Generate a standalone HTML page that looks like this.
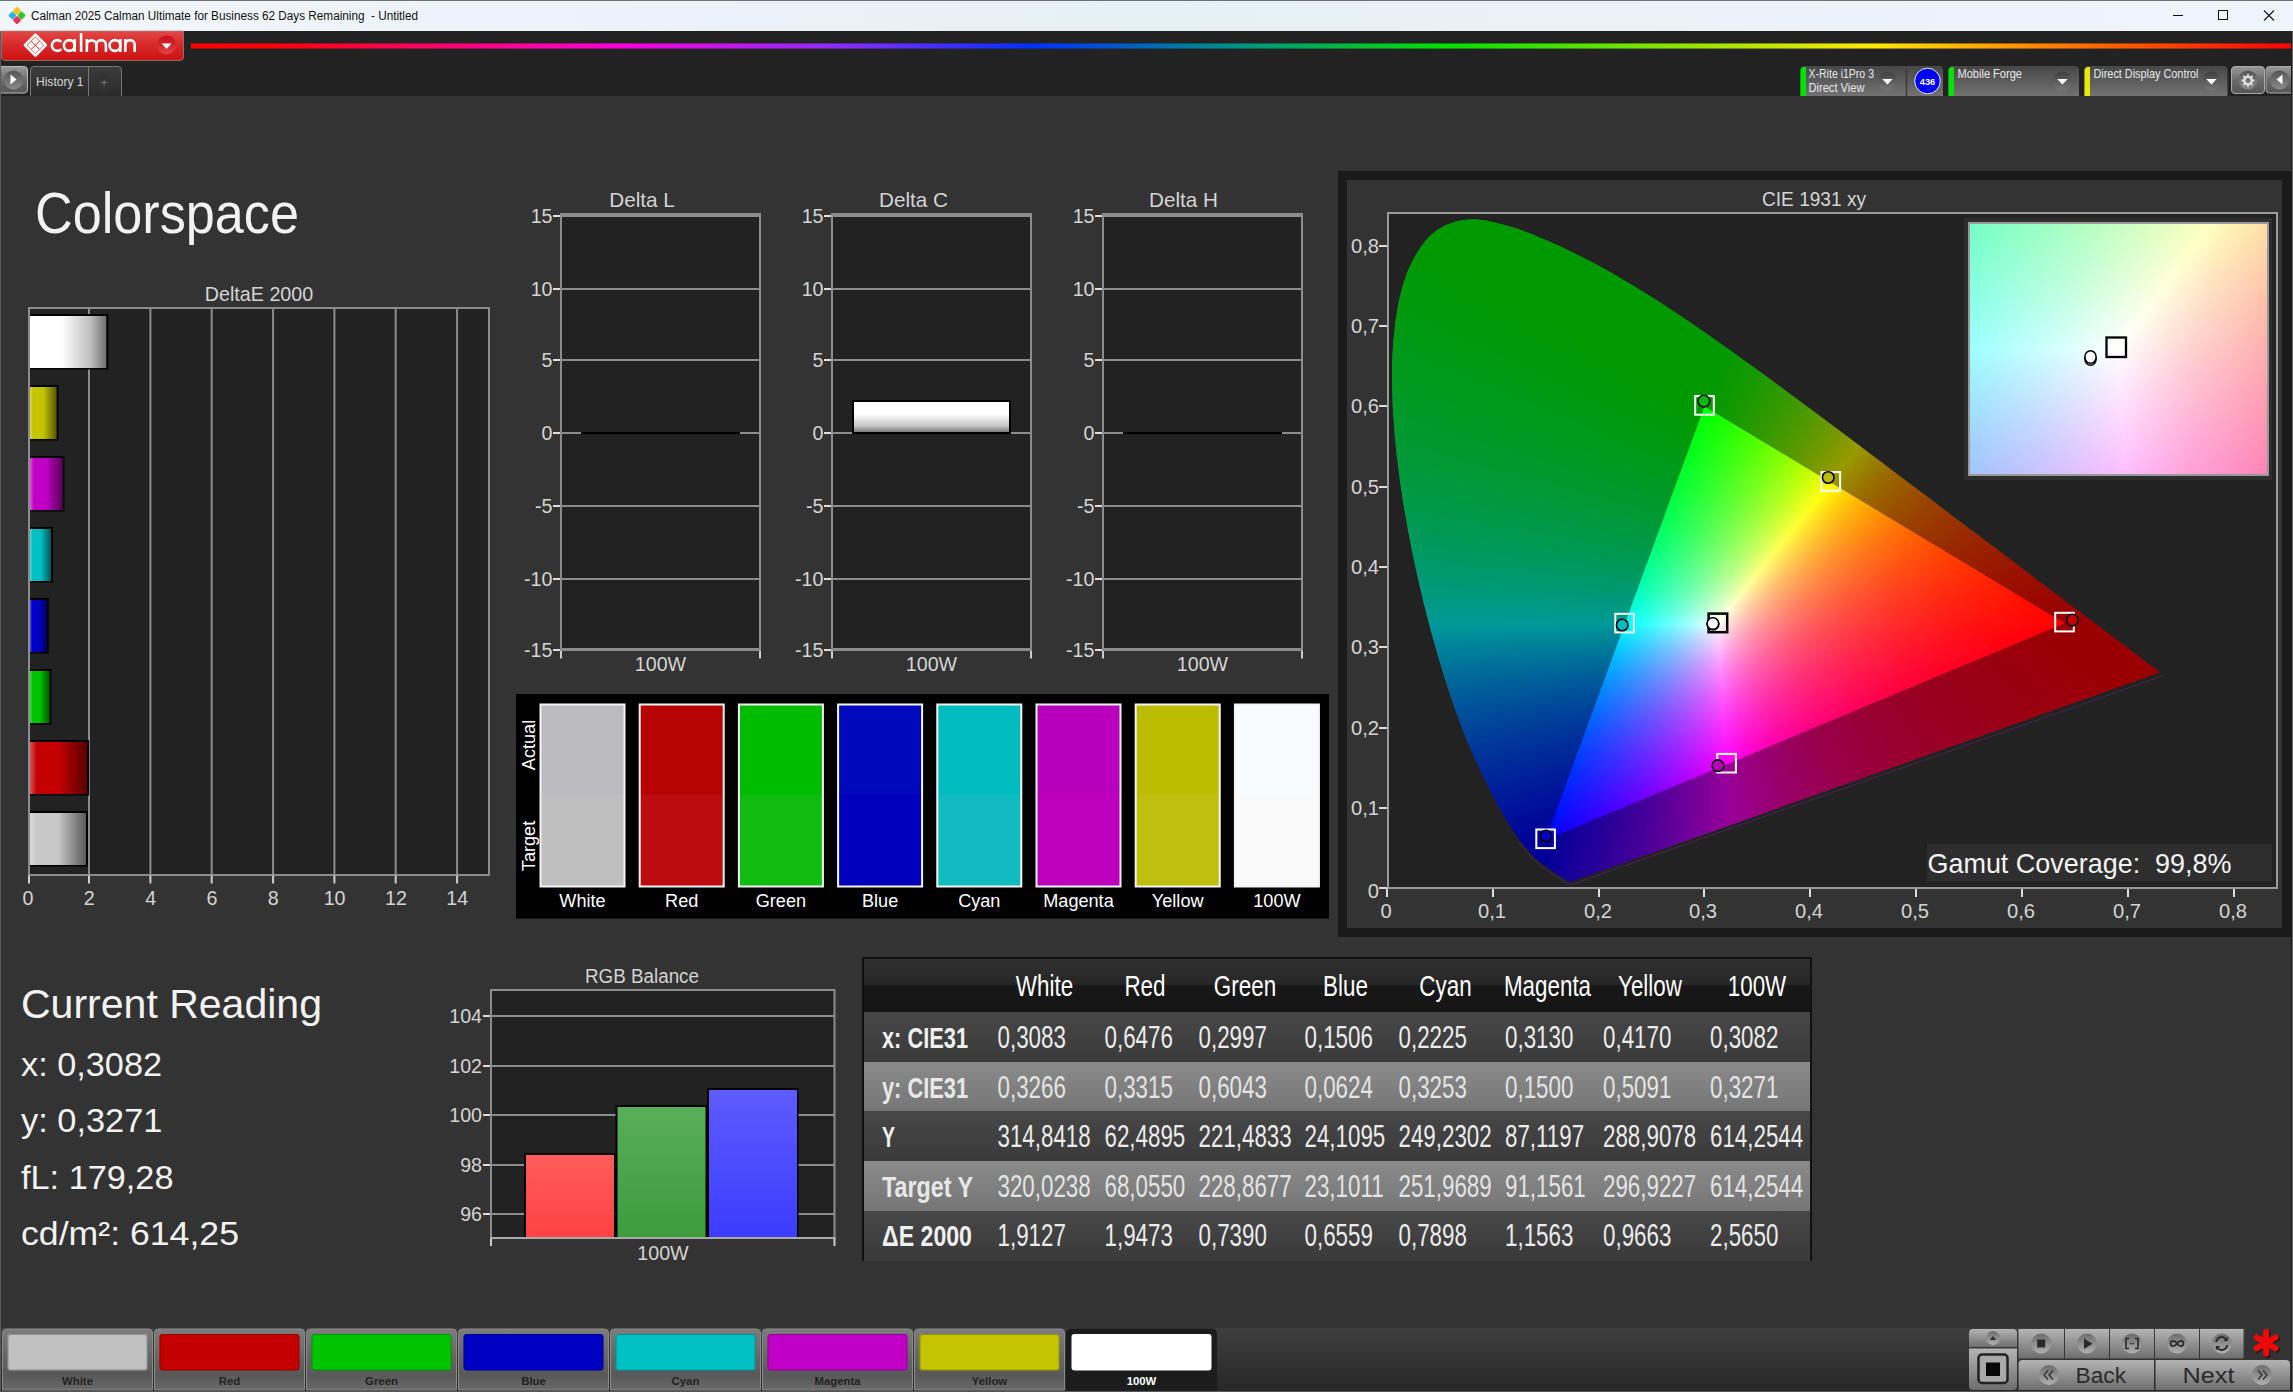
<!DOCTYPE html>
<html><head><meta charset="utf-8"><title>Calman</title><style>
html,body{margin:0;padding:0;background:#333}
body{width:2293px;height:1392px;overflow:hidden;position:relative;font-family:"Liberation Sans",sans-serif}
svg{position:absolute;left:0;top:0}
svg text{font-family:"Liberation Sans",sans-serif}
#cie i,#ins i{position:absolute;display:block;left:0;width:100%}
</style></head><body>
<svg width="2293" height="1392" viewBox="0 0 2293 1392">
<rect x="0" y="96" width="2293" height="1232" fill="#333"/>
<rect x="1338" y="171" width="955" height="766" fill="#1a1a1a"/>
<rect x="1347" y="180" width="935" height="748" fill="#333"/>
</svg>
<div id="cie" style="position:absolute;left:1389px;top:214px;width:887px;height:673px;overflow:hidden;background:#222"><i style="left:73px;top:4px;width:22px;height:2px;background:linear-gradient(90deg,#0f0 0px,#0f0 22px)"></i><i style="left:64px;top:6px;width:43px;height:2px;background:linear-gradient(90deg,#0f0 0px,#0f0 42px)"></i><i style="left:58px;top:8px;width:57px;height:2px;background:linear-gradient(90deg,#0f0 0px,#0f0 56px)"></i><i style="left:53px;top:10px;width:69px;height:2px;background:linear-gradient(90deg,#0f0 0px,#0f0 69px)"></i><i style="left:49px;top:12px;width:79px;height:2px;background:linear-gradient(90deg,#0f0 0px,#0f0 79px)"></i><i style="left:46px;top:14px;width:89px;height:2px;background:linear-gradient(90deg,#0f0 0px,#0f0 88px)"></i><i style="left:44px;top:16px;width:97px;height:2px;background:linear-gradient(90deg,#0f0 0px,#0f0 96px)"></i><i style="left:41px;top:18px;width:104px;height:2px;background:linear-gradient(90deg,#0f0 0px,#0f0 104px)"></i><i style="left:39px;top:20px;width:111px;height:2px;background:linear-gradient(90deg,#0f0 0px,#0f0 111px)"></i><i style="left:37px;top:22px;width:118px;height:2px;background:linear-gradient(90deg,#0f0 0px,#0f0 118px)"></i><i style="left:35px;top:24px;width:124px;height:2px;background:linear-gradient(90deg,#0f0 0px,#0f0 124px)"></i><i style="left:34px;top:26px;width:131px;height:2px;background:linear-gradient(90deg,#00ff01 0px,#0f0 130px)"></i><i style="left:32px;top:28px;width:137px;height:2px;background:linear-gradient(90deg,#00ff02 0px,#0f0 12px,#0f0 136px)"></i><i style="left:30px;top:30px;width:143px;height:2px;background:linear-gradient(90deg,#00ff03 0px,#0f0 17px,#0f0 142px)"></i><i style="left:29px;top:32px;width:149px;height:2px;background:linear-gradient(90deg,#00ff03 0px,#0f0 22px,#0f0 148px)"></i><i style="left:28px;top:34px;width:154px;height:2px;background:linear-gradient(90deg,#00ff04 0px,#0f0 26px,#0f0 153px)"></i><i style="left:27px;top:36px;width:159px;height:2px;background:linear-gradient(90deg,#00ff05 0px,#0f0 31px,#0f0 159px)"></i><i style="left:25px;top:38px;width:165px;height:2px;background:linear-gradient(90deg,#00ff06 0px,#0f0 35px,#0f0 164px)"></i><i style="left:24px;top:40px;width:170px;height:2px;background:linear-gradient(90deg,#00ff07 0px,#0f0 40px,#0f0 169px)"></i><i style="left:23px;top:42px;width:175px;height:2px;background:linear-gradient(90deg,#00ff07 0px,#0f0 44px,#0f0 174px)"></i><i style="left:22px;top:44px;width:180px;height:2px;background:linear-gradient(90deg,#00ff08 0px,#0f0 49px,#0f0 179px)"></i><i style="left:21px;top:46px;width:185px;height:2px;background:linear-gradient(90deg,#00ff09 0px,#0f0 53px,#0f0 184px)"></i><i style="left:20px;top:48px;width:189px;height:2px;background:linear-gradient(90deg,#00ff09 0px,#0f0 57px,#0f0 189px)"></i><i style="left:19px;top:50px;width:194px;height:2px;background:linear-gradient(90deg,#00ff0a 0px,#0f0 61px,#0f0 193px)"></i><i style="left:18px;top:52px;width:199px;height:2px;background:linear-gradient(90deg,#00ff0b 0px,#0f0 66px,#0f0 198px)"></i><i style="left:17px;top:54px;width:203px;height:2px;background:linear-gradient(90deg,#00ff0c 0px,#0f0 70px,#0f0 203px)"></i><i style="left:16px;top:56px;width:208px;height:2px;background:linear-gradient(90deg,#00ff0c 0px,#0f0 74px,#0f0 207px)"></i><i style="left:16px;top:58px;width:212px;height:2px;background:linear-gradient(90deg,#00ff0d 0px,#0f0 78px,#0f0 211px)"></i><i style="left:15px;top:60px;width:216px;height:2px;background:linear-gradient(90deg,#00ff0e 0px,#0f0 82px,#0f0 215px)"></i><i style="left:14px;top:62px;width:220px;height:2px;background:linear-gradient(90deg,#00ff0f 0px,#0f0 86px,#0f0 220px)"></i><i style="left:14px;top:64px;width:224px;height:2px;background:linear-gradient(90deg,#00ff0f 0px,#0f0 90px,#0f0 224px)"></i><i style="left:13px;top:66px;width:228px;height:2px;background:linear-gradient(90deg,#00ff10 0px,#0f0 94px,#0f0 228px)"></i><i style="left:12px;top:68px;width:232px;height:2px;background:linear-gradient(90deg,#0f1 0px,#0f0 98px,#0f0 232px)"></i><i style="left:12px;top:70px;width:236px;height:2px;background:linear-gradient(90deg,#0f1 0px,#0f0 102px,#0f0 236px)"></i><i style="left:11px;top:72px;width:240px;height:2px;background:linear-gradient(90deg,#00ff12 0px,#0f0 106px,#0f0 240px)"></i><i style="left:11px;top:74px;width:244px;height:2px;background:linear-gradient(90deg,#00ff13 0px,#0f0 110px,#0f0 243px)"></i><i style="left:10px;top:76px;width:247px;height:2px;background:linear-gradient(90deg,#00ff14 0px,#0f0 113px,#0f0 247px)"></i><i style="left:10px;top:78px;width:251px;height:2px;background:linear-gradient(90deg,#00ff14 0px,#0f0 117px,#0f0 251px)"></i><i style="left:9px;top:80px;width:255px;height:2px;background:linear-gradient(90deg,#00ff15 0px,#0f0 121px,#0f0 254px)"></i><i style="left:9px;top:82px;width:258px;height:2px;background:linear-gradient(90deg,#00ff16 0px,#0f0 125px,#0f0 258px)"></i><i style="left:8px;top:84px;width:262px;height:2px;background:linear-gradient(90deg,#00ff17 0px,#0f0 129px,#0f0 262px)"></i><i style="left:8px;top:86px;width:266px;height:2px;background:linear-gradient(90deg,#00ff17 0px,#0f0 132px,#0f0 265px)"></i><i style="left:7px;top:88px;width:269px;height:2px;background:linear-gradient(90deg,#00ff18 0px,#0f0 136px,#0f0 269px)"></i><i style="left:7px;top:90px;width:273px;height:2px;background:linear-gradient(90deg,#00ff19 0px,#0f0 140px,#0f0 272px)"></i><i style="left:7px;top:92px;width:276px;height:2px;background:linear-gradient(90deg,#00ff19 0px,#0f0 143px,#0f0 276px)"></i><i style="left:6px;top:94px;width:279px;height:2px;background:linear-gradient(90deg,#00ff1a 0px,#0f0 147px,#0f0 279px)"></i><i style="left:6px;top:96px;width:283px;height:2px;background:linear-gradient(90deg,#00ff1b 0px,#0f0 151px,#0f0 282px)"></i><i style="left:6px;top:98px;width:286px;height:2px;background:linear-gradient(90deg,#00ff1c 0px,#0f0 154px,#0f0 286px)"></i><i style="left:5px;top:100px;width:289px;height:2px;background:linear-gradient(90deg,#00ff1c 0px,#0f0 158px,#0f0 289px)"></i><i style="left:5px;top:102px;width:293px;height:2px;background:linear-gradient(90deg,#00ff1d 0px,#0f0 162px,#0f0 292px)"></i><i style="left:5px;top:104px;width:296px;height:2px;background:linear-gradient(90deg,#00ff1e 0px,#0f0 165px,#0f0 295px)"></i><i style="left:4px;top:106px;width:299px;height:2px;background:linear-gradient(90deg,#00ff1f 0px,#0f0 169px,#0f0 299px)"></i><i style="left:4px;top:108px;width:302px;height:2px;background:linear-gradient(90deg,#00ff1f 0px,#0f0 173px,#0f0 302px)"></i><i style="left:4px;top:110px;width:305px;height:2px;background:linear-gradient(90deg,#00ff20 0px,#0f0 176px,#0f0 305px)"></i><i style="left:4px;top:112px;width:309px;height:2px;background:linear-gradient(90deg,#00ff21 0px,#0f0 180px,#0f0 308px)"></i><i style="left:4px;top:114px;width:312px;height:2px;background:linear-gradient(90deg,#0f2 0px,#0f0 183px,#0f0 311px)"></i><i style="left:3px;top:116px;width:315px;height:2px;background:linear-gradient(90deg,#0f2 0px,#0f0 187px,#0f0 314px)"></i><i style="left:3px;top:118px;width:318px;height:2px;background:linear-gradient(90deg,#00ff23 0px,#0f0 190px,#0f0 317px)"></i><i style="left:3px;top:120px;width:321px;height:2px;background:linear-gradient(90deg,#00ff24 0px,#0f0 194px,#0f0 320px)"></i><i style="left:3px;top:122px;width:324px;height:2px;background:linear-gradient(90deg,#00ff25 0px,#0f0 197px,#0f0 324px)"></i><i style="left:2px;top:124px;width:327px;height:2px;background:linear-gradient(90deg,#00ff25 0px,#0f0 201px,#0f0 327px)"></i><i style="left:2px;top:126px;width:330px;height:2px;background:linear-gradient(90deg,#00ff26 0px,#0f0 204px,#0f0 330px)"></i><i style="left:2px;top:128px;width:333px;height:2px;background:linear-gradient(90deg,#00ff27 0px,#00ff14 108px,#0f0 208px,#0f0 333px)"></i><i style="left:2px;top:130px;width:336px;height:2px;background:linear-gradient(90deg,#00ff28 0px,#00ff15 110px,#0f0 211px,#0f0 336px)"></i><i style="left:2px;top:132px;width:339px;height:2px;background:linear-gradient(90deg,#00ff29 0px,#00ff15 111px,#0f0 215px,#0f0 335px,#03ff00 338px)"></i><i style="left:2px;top:134px;width:342px;height:2px;background:linear-gradient(90deg,#00ff29 0px,#00ff16 114px,#0f0 218px,#0f0 334px,#06ff00 341px)"></i><i style="left:2px;top:136px;width:345px;height:2px;background:linear-gradient(90deg,#00ff2a 0px,#00ff16 116px,#0f0 221px,#0f0 334px,#0aff00 344px)"></i><i style="left:2px;top:138px;width:348px;height:2px;background:linear-gradient(90deg,#00ff2b 0px,#00ff16 118px,#0f0 225px,#0f0 333px,#0dff00 347px)"></i><i style="left:1px;top:140px;width:351px;height:2px;background:linear-gradient(90deg,#00ff2c 0px,#00ff17 119px,#0f0 228px,#0f0 332px,#1f0 350px)"></i><i style="left:1px;top:142px;width:353px;height:2px;background:linear-gradient(90deg,#00ff2d 0px,#00ff18 121px,#0f0 232px,#0f0 332px,#14ff00 353px)"></i><i style="left:1px;top:144px;width:356px;height:2px;background:linear-gradient(90deg,#00ff2d 0px,#00ff18 123px,#0f0 235px,#0f0 331px,#18ff00 356px)"></i><i style="left:1px;top:146px;width:359px;height:2px;background:linear-gradient(90deg,#00ff2e 0px,#00ff18 125px,#0f0 239px,#0f0 331px,#1cff00 359px)"></i><i style="left:1px;top:148px;width:362px;height:2px;background:linear-gradient(90deg,#00ff2f 0px,#00ff19 127px,#0f0 242px,#0f0 330px,#20ff00 362px)"></i><i style="left:1px;top:150px;width:365px;height:2px;background:linear-gradient(90deg,#00ff30 0px,#00ff19 129px,#0f0 245px,#0f0 329px,#23ff00 364px)"></i><i style="left:1px;top:152px;width:368px;height:2px;background:linear-gradient(90deg,#00ff31 0px,#00ff1a 130px,#0f0 249px,#0f0 328px,#27ff00 367px)"></i><i style="left:1px;top:154px;width:370px;height:2px;background:linear-gradient(90deg,#00ff32 0px,#00ff1a 133px,#0f0 252px,#0f0 328px,#2bff00 370px)"></i><i style="left:1px;top:156px;width:373px;height:2px;background:linear-gradient(90deg,#00ff32 0px,#00ff1b 135px,#0f0 255px,#0f0 327px,#30ff00 373px)"></i><i style="left:1px;top:158px;width:376px;height:2px;background:linear-gradient(90deg,#0f3 0px,#00ff1b 136px,#0f0 259px,#0f0 326px,#3f0 375px)"></i><i style="left:1px;top:160px;width:379px;height:2px;background:linear-gradient(90deg,#00ff34 0px,#00ff1c 139px,#0f0 262px,#0f0 326px,#37ff00 378px)"></i><i style="left:1px;top:162px;width:381px;height:2px;background:linear-gradient(90deg,#00ff35 0px,#00ff1c 140px,#0f0 265px,#0f0 325px,#3cff00 381px)"></i><i style="left:1px;top:164px;width:384px;height:2px;background:linear-gradient(90deg,#00ff36 0px,#00ff1d 142px,#0f0 269px,#0f0 324px,#40ff00 384px)"></i><i style="left:1px;top:166px;width:387px;height:2px;background:linear-gradient(90deg,#00ff37 0px,#00ff1d 144px,#0f0 272px,#0f0 323px,#1bff00 350px,#4f0 386px)"></i><i style="left:1px;top:168px;width:390px;height:2px;background:linear-gradient(90deg,#00ff38 0px,#00ff1e 146px,#0f0 275px,#0f0 323px,#48ff00 389px)"></i><i style="left:1px;top:170px;width:392px;height:2px;background:linear-gradient(90deg,#00ff39 0px,#00ff1e 148px,#0f0 279px,#0f0 322px,#24ff00 356px,#4dff00 392px)"></i><i style="left:1px;top:172px;width:395px;height:2px;background:linear-gradient(90deg,#00ff39 0px,#00ff1f 150px,#0f0 282px,#0f0 321px,#25ff00 356px,#52ff00 395px)"></i><i style="left:1px;top:174px;width:398px;height:2px;background:linear-gradient(90deg,#00ff3a 0px,#00ff1f 152px,#0f0 285px,#0f0 320px,#25ff00 355px,#56ff00 397px)"></i><i style="left:1px;top:176px;width:400px;height:2px;background:linear-gradient(90deg,#00ff3b 0px,#00ff20 154px,#0f0 288px,#0f0 320px,#2dff00 361px,#5bff00 400px)"></i><i style="left:1px;top:178px;width:403px;height:2px;background:linear-gradient(90deg,#00ff3c 0px,#00ff20 155px,#0f0 292px,#0f0 319px,#2eff00 361px,#5fff00 402px)"></i><i style="left:1px;top:180px;width:406px;height:2px;background:linear-gradient(90deg,#00ff3d 0px,#00ff21 158px,#0f0 295px,#0f0 318px,#2fff00 361px,#64ff00 405px)"></i><i style="left:1px;top:182px;width:408px;height:2px;background:linear-gradient(90deg,#00ff3e 0px,#00ff21 159px,#0f0 298px,#0f0 317px,#30ff00 361px,#6aff00 408px)"></i><i style="left:1px;top:184px;width:411px;height:2px;background:linear-gradient(90deg,#00ff3f 0px,#00ff27 137px,#0f0 301px,#0f0 316px,#31ff00 361px,#6eff00 410px)"></i><i style="left:2px;top:186px;width:413px;height:2px;background:linear-gradient(90deg,#00ff40 0px,#00ff26 144px,#0f0 304px,#0f0 316px,#38ff00 366px,#73ff00 413px)"></i><i style="left:2px;top:188px;width:416px;height:2px;background:linear-gradient(90deg,#00ff41 0px,#00ff25 154px,#0f0 308px,#0f0 315px,#3bff00 367px,#79ff00 416px)"></i><i style="left:2px;top:190px;width:419px;height:2px;background:linear-gradient(90deg,#00ff42 0px,#00ff24 163px,#0f0 314px,#3bff00 366px,#7eff00 418px)"></i><i style="left:2px;top:192px;width:421px;height:2px;background:linear-gradient(90deg,#00ff43 0px,#00ff24 168px,#0f0 313px,#3dff00 367px,#84ff00 421px)"></i><i style="left:2px;top:194px;width:424px;height:2px;background:linear-gradient(90deg,#0f4 0px,#00ff25 168px,#00ff01 313px,#42ff00 370px,#8f0 423px)"></i><i style="left:2px;top:196px;width:426px;height:2px;background:linear-gradient(90deg,#00ff45 0px,#00ff26 168px,#00ff03 312px,#0aff00 321px,#45ff00 371px,#8fff00 426px)"></i><i style="left:2px;top:198px;width:429px;height:2px;background:linear-gradient(90deg,#00ff46 0px,#00ff27 167px,#00ff04 311px,#0eff00 324px,#48ff00 372px,#93ff00 428px)"></i><i style="left:2px;top:200px;width:432px;height:2px;background:linear-gradient(90deg,#00ff47 0px,#00ff28 167px,#00ff05 310px,#14ff00 328px,#4aff00 373px,#9aff00 431px)"></i><i style="left:2px;top:202px;width:434px;height:2px;background:linear-gradient(90deg,#00ff48 0px,#00ff2a 166px,#00ff06 309px,#19ff00 331px,#4cff00 373px,#75ff00 404px,#a1ff00 434px)"></i><i style="left:3px;top:204px;width:437px;height:2px;background:linear-gradient(90deg,#00ff49 0px,#00ff2b 166px,#00ff08 308px,#1dff00 334px,#4fff00 374px,#7aff00 406px,#a6ff00 436px)"></i><i style="left:3px;top:206px;width:439px;height:2px;background:linear-gradient(90deg,#00ff4a 0px,#00ff2c 165px,#00ff09 307px,#2f0 337px,#51ff00 375px,#7fff00 408px,#adff00 439px)"></i><i style="left:3px;top:208px;width:442px;height:2px;background:linear-gradient(90deg,#00ff4b 0px,#00ff2d 165px,#00ff0a 306px,#27ff00 340px,#53ff00 375px,#82ff00 409px,#b2ff00 441px)"></i><i style="left:3px;top:210px;width:444px;height:2px;background:linear-gradient(90deg,#00ff4c 0px,#00ff2e 165px,#00ff0b 306px,#2cff00 343px,#59ff00 378px,#8f0 412px,#b9ff00 444px)"></i><i style="left:3px;top:212px;width:447px;height:2px;background:linear-gradient(90deg,#00ff4d 0px,#00ff2f 164px,#00ff0d 305px,#31ff00 346px,#5cff00 379px,#8cff00 413px,#bfff00 446px)"></i><i style="left:3px;top:214px;width:449px;height:2px;background:linear-gradient(90deg,#00ff4e 0px,#00ff30 164px,#00ff0e 304px,#37ff00 350px,#5fff00 380px,#91ff00 415px,#c7ff00 449px)"></i><i style="left:3px;top:216px;width:452px;height:2px;background:linear-gradient(90deg,#00ff4f 0px,#00ff31 163px,#00ff0f 303px,#3cff00 353px,#60ff00 380px,#95ff00 416px,#cdff00 451px)"></i><i style="left:4px;top:218px;width:454px;height:2px;background:linear-gradient(90deg,#00ff50 0px,#0f3 163px,#0f1 302px,#42ff00 356px,#64ff00 381px,#9aff00 418px,#d5ff00 454px)"></i><i style="left:4px;top:220px;width:457px;height:2px;background:linear-gradient(90deg,#00ff51 0px,#00ff34 162px,#00ff12 301px,#47ff00 359px,#67ff00 382px,#9fff00 420px,#dbff00 456px)"></i><i style="left:4px;top:222px;width:459px;height:2px;background:linear-gradient(90deg,#00ff52 0px,#00ff35 162px,#00ff13 300px,#22ff0b 329px,#4dff00 362px,#6aff00 383px,#a5ff00 422px,#e3ff00 459px)"></i><i style="left:4px;top:224px;width:462px;height:2px;background:linear-gradient(90deg,#00ff53 0px,#00ff36 161px,#00ff15 299px,#25ff0b 330px,#53ff00 365px,#6eff00 384px,#abff00 424px,#eaff00 461px)"></i><i style="left:4px;top:226px;width:464px;height:2px;background:linear-gradient(90deg,#00ff54 0px,#00ff37 161px,#00ff16 298px,#27ff0c 331px,#59ff00 368px,#71ff00 385px,#b0ff00 426px,#f3ff00 464px)"></i><i style="left:4px;top:228px;width:467px;height:2px;background:linear-gradient(90deg,#0f5 0px,#00ff39 161px,#00ff17 298px,#2eff0c 335px,#5fff00 371px,#76ff00 387px,#b6ff00 428px,#faff00 466px)"></i><i style="left:5px;top:230px;width:469px;height:2px;background:linear-gradient(90deg,#00ff56 0px,#00ff3a 160px,#00ff19 297px,#37ff0b 341px,#65ff00 374px,#72ff00 383px,#b6ff00 426px,#ff0 467px,#fffb00 469px)"></i><i style="left:5px;top:232px;width:472px;height:2px;background:linear-gradient(90deg,#00ff57 0px,#00ff3b 160px,#00ff1a 296px,#35ff0d 338px,#6dff00 378px,#b3ff00 423px,#feff00 465px,#fff400 471px)"></i><i style="left:5px;top:234px;width:474px;height:2px;background:linear-gradient(90deg,#00ff59 0px,#00ff3c 159px,#00ff1b 295px,#3aff0e 341px,#78ff00 384px,#b9ff00 425px,#feff00 463px,#ffec00 474px)"></i><i style="left:5px;top:236px;width:477px;height:2px;background:linear-gradient(90deg,#00ff5a 0px,#00ff3e 159px,#00ff1d 294px,#39ff0f 339px,#77ff01 382px,#b9ff00 423px,#feff00 461px,#ffe600 476px)"></i><i style="left:5px;top:238px;width:479px;height:2px;background:linear-gradient(90deg,#00ff5b 0px,#00ff3f 158px,#00ff1e 293px,#39ff11 338px,#77ff02 381px,#82ff00 388px,#b8ff00 421px,#ff0 460px,#ffde00 479px)"></i><i style="left:6px;top:240px;width:482px;height:2px;background:linear-gradient(90deg,#00ff5c 0px,#00ff40 158px,#00ff20 292px,#3aff12 337px,#78ff04 380px,#89ff00 391px,#b9ff00 420px,#ff0 458px,#ffd800 481px)"></i><i style="left:6px;top:242px;width:484px;height:2px;background:linear-gradient(90deg,#00ff5d 0px,#00ff42 157px,#00ff21 291px,#39ff14 335px,#77ff06 378px,#90ff00 394px,#c6ff00 426px,#feff00 456px,#ffd200 483px)"></i><i style="left:6px;top:244px;width:486px;height:2px;background:linear-gradient(90deg,#00ff5e 0px,#00ff43 157px,#00ff23 290px,#39ff16 334px,#78ff07 377px,#97ff00 397px,#c9ff00 426px,#feff00 454px,#ffe100 471px,#ffcb00 486px)"></i><i style="left:6px;top:246px;width:489px;height:2px;background:linear-gradient(90deg,#00ff5f 0px,#0f4 156px,#00ff24 289px,#39ff17 333px,#77ff09 375px,#9fff00 400px,#ceff00 427px,#feff00 452px,#ffde00 471px,#ffc500 488px)"></i><i style="left:7px;top:248px;width:491px;height:2px;background:linear-gradient(90deg,#00ff61 0px,#00ff46 155px,#00ff26 288px,#39ff19 332px,#77ff0b 374px,#a7ff00 403px,#d1ff00 427px,#fdff00 450px,#ffda00 472px,#ffbf00 491px)"></i><i style="left:7px;top:250px;width:494px;height:2px;background:linear-gradient(90deg,#00ff62 0px,#00ff47 155px,#00ff27 287px,#38ff1b 330px,#76ff0d 372px,#afff00 406px,#ff0 449px,#ffda00 470px,#ffba00 493px)"></i><i style="left:7px;top:252px;width:496px;height:2px;background:linear-gradient(90deg,#00ff63 0px,#00ff48 154px,#00ff29 286px,#39ff1c 329px,#77ff0e 371px,#b7ff00 409px,#ff0 447px,#ffd700 470px,#ffb400 496px)"></i><i style="left:7px;top:254px;width:498px;height:2px;background:linear-gradient(90deg,#00ff64 0px,#00ff4a 154px,#00ff2b 285px,#39ff1e 328px,#76ff10 369px,#bfff00 412px,#feff00 445px,#ffd400 470px,#ffaf00 498px)"></i><i style="left:8px;top:256px;width:501px;height:2px;background:linear-gradient(90deg,#0f6 0px,#00ff4b 153px,#00ff2c 284px,#38ff20 326px,#77ff12 368px,#c8ff00 415px,#feff00 443px,#ffd100 470px,#fa0 500px)"></i><i style="left:8px;top:258px;width:503px;height:2px;background:linear-gradient(90deg,#00ff67 0px,#00ff4d 153px,#00ff2e 283px,#38ff21 325px,#76ff14 366px,#a3ff0a 393px,#d1ff00 418px,#fffe00 442px,#ffe600 455px,#ffce00 470px,#ffb800 486px,#ffa400 503px)"></i><i style="left:8px;top:260px;width:506px;height:2px;background:linear-gradient(90deg,#00ff68 0px,#00ff4e 152px,#00ff2f 282px,#38ff23 324px,#77ff16 365px,#a8ff0b 394px,#daff00 421px,#fffe00 440px,#ffe400 454px,#ffcb00 470px,#ffb400 487px,#ffa000 505px)"></i><i style="left:8px;top:262px;width:508px;height:2px;background:linear-gradient(90deg,#00ff69 0px,#00ff4f 152px,#00ff31 281px,#37ff25 322px,#76ff18 363px,#abff0c 394px,#e3ff00 424px,#ff0 438px,#ffe200 453px,#ffc800 470px,#ffb000 488px,#ff9b00 508px)"></i><i style="left:9px;top:264px;width:510px;height:2px;background:linear-gradient(90deg,#00ff6b 0px,#00ff51 151px,#0f3 280px,#38ff27 321px,#77ff19 362px,#b8ff0b 400px,#ecff00 427px,#ff0 436px,#ffe100 452px,#ffc600 469px,#ffae00 488px,#ff9700 510px)"></i><i style="left:9px;top:266px;width:513px;height:2px;background:linear-gradient(90deg,#00ff6c 0px,#00ff52 151px,#00ff35 279px,#38ff29 320px,#77ff1b 361px,#baff0d 399px,#ff0 434px,#ffdf00 451px,#ffc400 469px,#fa0 489px,#ff9300 512px)"></i><i style="left:9px;top:268px;width:515px;height:2px;background:linear-gradient(90deg,#00ff6d 0px,#00ff54 150px,#00ff36 278px,#38ff2a 319px,#76ff1d 359px,#b9ff0f 397px,#feff01 432px,#ffdc00 451px,#ffbf00 470px,#ffa600 491px,#ff8e00 515px)"></i><i style="left:9px;top:270px;width:517px;height:2px;background:linear-gradient(90deg,#00ff6f 0px,#0f5 150px,#00ff38 277px,#39ff2c 318px,#77ff1f 358px,#b9ff11 395px,#feff03 430px,#fff200 437px,#ffda00 450px,#ffbe00 469px,#ffa200 492px,#ff8a00 517px)"></i><i style="left:10px;top:272px;width:520px;height:2px;background:linear-gradient(90deg,#00ff70 0px,#00ff57 149px,#00ff3a 276px,#38ff2e 316px,#75ff22 355px,#b4ff14 391px,#fffe05 429px,#ffea00 439px,#ffda00 448px,#fb0 469px,#ff9f00 493px,#ff8600 519px)"></i><i style="left:10px;top:274px;width:522px;height:2px;background:linear-gradient(90deg,#00ff71 0px,#00ff59 149px,#00ff3b 275px,#38ff30 315px,#76ff23 354px,#b6ff16 390px,#fffe07 427px,#ffdf00 443px,#ffb800 469px,#ff9b00 494px,#ff8200 522px)"></i><i style="left:10px;top:276px;width:525px;height:2px;background:linear-gradient(90deg,#00ff73 0px,#00ff5a 148px,#00ff3d 274px,#38ff32 314px,#76ff25 353px,#b7ff18 389px,#fffe09 425px,#ffd900 445px,#ffb700 468px,#f90 494px,#ff7e00 524px)"></i><i style="left:11px;top:278px;width:527px;height:2px;background:linear-gradient(90deg,#00ff74 0px,#00ff5c 148px,#00ff3f 273px,#39ff34 313px,#77ff27 352px,#b8ff1a 388px,#ffff0c 423px,#ffe706 435px,#ffd000 448px,#ffb400 468px,#ff9600 495px,#ff7b00 526px)"></i><i style="left:11px;top:280px;width:529px;height:2px;background:linear-gradient(90deg,#00ff75 0px,#00ff5d 147px,#00ff41 272px,#3bff35 313px,#78ff29 351px,#baff1c 387px,#ffff0e 421px,#ffd503 443px,#ffc700 452px,#ffb100 468px,#ff9200 496px,#f70 529px)"></i><i style="left:11px;top:282px;width:532px;height:2px;background:linear-gradient(90deg,#0f7 0px,#00ff5f 147px,#00ff43 271px,#3aff37 311px,#77ff2b 349px,#b9ff1e 385px,#ffff10 419px,#ffd505 441px,#ffc000 455px,#ffb000 467px,#ff8f00 497px,#ff7300 531px)"></i><i style="left:12px;top:284px;width:534px;height:2px;background:linear-gradient(90deg,#00ff78 0px,#00ff61 146px,#00ff45 270px,#3aff39 310px,#78ff2d 348px,#baff20 384px,#ffff13 417px,#ffd307 440px,#ffba00 457px,#ffad00 467px,#ff8c00 498px,#ff7000 533px)"></i><i style="left:12px;top:286px;width:536px;height:2px;background:linear-gradient(90deg,#00ff7a 0px,#00ff62 146px,#00ff46 269px,#3aff3b 309px,#77ff2f 346px,#baff23 382px,#ffff15 415px,#ffd209 439px,#ffb300 460px,#fa0 467px,#ff8900 499px,#ff6c00 536px)"></i><i style="left:12px;top:288px;width:539px;height:2px;background:linear-gradient(90deg,#00ff7b 0px,#00ff64 145px,#00ff48 268px,#3bff3d 308px,#78ff31 345px,#b9ff25 380px,#feff18 413px,#ffd00a 438px,#ffa900 466px,#ff8700 499px,#ff6900 538px)"></i><i style="left:13px;top:290px;width:541px;height:2px;background:linear-gradient(90deg,#00ff7d 0px,#00ff65 145px,#00ff4a 267px,#3aff3f 306px,#77ff34 343px,#b9ff27 378px,#feff1a 411px,#ffe312 425px,#ffce0c 437px,#ffa600 466px,#ff8400 500px,#f60 540px)"></i><i style="left:13px;top:292px;width:543px;height:2px;background:linear-gradient(90deg,#00ff7e 0px,#00ff67 144px,#00ff4c 266px,#3aff41 305px,#76ff36 341px,#b4ff2b 374px,#fffe1c 410px,#ffe515 422px,#ffcd0e 436px,#ffb807 450px,#ffa401 466px,#ff8100 501px,#ff6300 543px)"></i><i style="left:13px;top:294px;width:546px;height:2px;background:linear-gradient(90deg,#00ff80 0px,#00ff69 143px,#00ff4e 265px,#3bff43 304px,#77ff38 340px,#b5ff2d 373px,#fffe1f 408px,#ffe517 420px,#ffcc10 434px,#ffb609 449px,#ffa203 465px,#f90 473px,#ff7e00 502px,#ff6000 545px)"></i><i style="left:14px;top:296px;width:548px;height:2px;background:linear-gradient(90deg,#00ff81 0px,#00ff6b 142px,#00ff50 263px,#35ff47 299px,#75ff3b 337px,#b5ff2f 371px,#fffe21 406px,#ffe319 419px,#ffcb11 433px,#ffb40a 448px,#ffa104 464px,#ff9400 476px,#ff7c00 502px,#ff5d00 547px)"></i><i style="left:14px;top:298px;width:550px;height:2px;background:linear-gradient(90deg,#00ff83 0px,#00ff6d 142px,#00ff52 262px,#34ff49 297px,#74ff3d 335px,#b4ff32 369px,#fffe24 404px,#ffe31b 417px,#ffca13 431px,#ffb30c 447px,#ff9e05 464px,#ff8e00 479px,#ff7900 503px,#ff5a00 550px)"></i><i style="left:14px;top:300px;width:552px;height:2px;background:linear-gradient(90deg,#00ff84 0px,#00ff6e 141px,#00ff54 261px,#36ff4b 297px,#75ff40 334px,#b8ff34 369px,#fdff27 401px,#ffdf1c 417px,#ffc714 431px,#ffb00d 447px,#ff9b06 464px,#ff8900 482px,#ff7600 504px,#ff5700 552px)"></i><i style="left:15px;top:302px;width:555px;height:2px;background:linear-gradient(90deg,#00ff86 0px,#00ff70 141px,#00ff57 260px,#36ff4d 296px,#76ff42 333px,#b7ff36 367px,#fdff2a 399px,#fffe29 400px,#ffdd1e 416px,#ffc716 429px,#ffb00f 445px,#ff9a07 463px,#ff8500 484px,#ff7400 504px,#f50 554px)"></i><i style="left:15px;top:304px;width:557px;height:2px;background:linear-gradient(90deg,#00ff87 0px,#00ff72 140px,#00ff59 259px,#37ff4f 295px,#7f4 332px,#b7ff39 365px,#fdff2d 397px,#ffff2c 398px,#ffdd20 414px,#ffc518 428px,#ffad10 445px,#ff9708 463px,#ff8000 487px,#ff7100 506px,#ff5200 557px)"></i><i style="left:15px;top:306px;width:559px;height:2px;background:linear-gradient(90deg,#00ff89 0px,#00ff74 140px,#00ff5b 258px,#37ff51 294px,#76ff47 330px,#b6ff3b 363px,#fdff2f 395px,#ffff2f 396px,#ffdb22 413px,#ffc31a 427px,#ffab11 444px,#ff960a 462px,#ff7b00 490px,#ff6f00 506px,#ff4f00 559px)"></i><i style="left:16px;top:308px;width:562px;height:2px;background:linear-gradient(90deg,#00ff8b 0px,#00ff76 139px,#00ff5d 257px,#39ff53 294px,#77ff49 329px,#b8ff3e 362px,#ffff32 394px,#ffe127 408px,#ffc51c 424px,#ffab13 442px,#ff940b 461px,#ff7600 494px,#ff6000 525px,#ff4d00 561px)"></i><i style="left:16px;top:310px;width:564px;height:2px;background:linear-gradient(90deg,#00ff8c 0px,#0f7 139px,#00ff5f 256px,#3aff55 293px,#78ff4b 328px,#baff40 361px,#ffff34 392px,#ffdf28 407px,#ffc31e 423px,#ffa914 441px,#ff930c 460px,#ff7200 497px,#ff5d00 528px,#ff4b00 563px)"></i><i style="left:16px;top:312px;width:566px;height:2px;background:linear-gradient(90deg,#00ff8e 0px,#00ff79 138px,#00ff61 255px,#3aff58 292px,#79ff4d 327px,#b9ff43 359px,#ffff37 390px,#ffdf2b 405px,#ffc320 421px,#ffa916 439px,#ff900d 460px,#ff6e00 499px,#ff5a00 530px,#ff4800 566px)"></i><i style="left:17px;top:314px;width:569px;height:2px;background:linear-gradient(90deg,#00ff90 0px,#00ff7b 138px,#00ff64 254px,#3bff5a 291px,#78ff50 325px,#b8ff46 357px,#ffff3a 388px,#ffdf2d 403px,#ffc122 420px,#ffa718 438px,#ff8f0e 459px,#ff7c07 479px,#ff6a00 502px,#ff5700 533px,#ff4500 568px)"></i><i style="left:17px;top:316px;width:571px;height:2px;background:linear-gradient(90deg,#00ff91 0px,#00ff7d 137px,#0f6 253px,#3aff5d 289px,#77ff53 323px,#b8ff48 355px,#ffff3d 386px,#ffde30 401px,#ffc024 418px,#ffa619 437px,#ff8e10 458px,#ff7908 480px,#f60 505px,#ff5400 536px,#ff4300 570px)"></i><i style="left:17px;top:318px;width:573px;height:2px;background:linear-gradient(90deg,#00ff93 0px,#00ff7f 137px,#00ff68 252px,#3aff5f 288px,#78ff55 322px,#baff4b 354px,#ffff40 384px,#ffdc32 400px,#ffbf26 417px,#ffa41b 436px,#ff8b11 458px,#ff7508 482px,#ff6200 508px,#ff5000 539px,#ff4100 573px)"></i><i style="left:18px;top:320px;width:575px;height:2px;background:linear-gradient(90deg,#00ff95 0px,#00ff81 136px,#01ff6a 251px,#3bff61 287px,#77ff58 320px,#b9ff4e 352px,#ffff43 382px,#ffdc34 398px,#ffbd27 416px,#ffa21c 435px,#ff8a12 457px,#ff7309 482px,#ff5f00 511px,#ff4e00 541px,#ff3e00 575px)"></i><i style="left:18px;top:322px;width:578px;height:2px;background:linear-gradient(90deg,#00ff96 0px,#00ff83 135px,#00ff6d 249px,#36ff65 283px,#76ff5b 318px,#b9ff51 350px,#ffff46 380px,#ffda36 397px,#ffbc2a 414px,#ffa11e 434px,#ff8813 456px,#ff7009 483px,#ff5b00 514px,#ff4b00 544px,#ff3c00 577px)"></i><i style="left:19px;top:324px;width:580px;height:2px;background:linear-gradient(90deg,#00ff98 0px,#00ff85 135px,#00ff6f 248px,#37ff67 282px,#76ff5e 316px,#b8ff54 348px,#ffff49 378px,#ffda39 395px,#ffbb2b 413px,#ff9f1f 433px,#ff8614 456px,#ff6d09 485px,#ff5800 517px,#ff3a00 579px)"></i><i style="left:19px;top:326px;width:582px;height:2px;background:linear-gradient(90deg,#00ff9a 0px,#0f8 134px,#00ff72 247px,#38ff69 281px,#77ff60 315px,#b8ff57 346px,#feff4c 376px,#ffda3c 393px,#ffba2d 411px,#ff9d21 432px,#ff8415 455px,#ff6b0a 485px,#ff5400 520px,#ff3800 582px)"></i><i style="left:19px;top:328px;width:584px;height:2px;background:linear-gradient(90deg,#00ff9c 0px,#00ff8a 134px,#00ff74 246px,#3aff6c 281px,#78ff63 314px,#b9ff59 345px,#feff4f 374px,#ffd93e 391px,#ffb82f 410px,#ff9c22 431px,#ff8317 454px,#ff680b 486px,#ff5100 523px,#ff3600 584px)"></i><i style="left:20px;top:330px;width:587px;height:2px;background:linear-gradient(90deg,#00ff9e 0px,#00ff8c 133px,#0f7 245px,#39ff6f 279px,#7f6 312px,#b9ff5c 343px,#feff53 372px,#ffd941 389px,#ffb831 408px,#ff9b24 429px,#ff8118 453px,#ff650b 487px,#ff4e00 526px,#ff3400 586px)"></i><i style="left:20px;top:332px;width:589px;height:2px;background:linear-gradient(90deg,#00ff9f 0px,#00ff8e 132px,#00ff79 244px,#3bff71 279px,#78ff68 311px,#b8ff5f 341px,#feff56 370px,#ffd743 388px,#ffb633 407px,#ff9825 429px,#ff7f19 453px,#ff630b 488px,#ff4b00 529px,#ff3200 589px)"></i><i style="left:21px;top:334px;width:591px;height:2px;background:linear-gradient(90deg,#00ffa1 0px,#00ff90 132px,#00ff7c 243px,#3aff74 277px,#77ff6b 309px,#b8ff63 339px,#feff59 368px,#ffd745 386px,#ffb635 405px,#ff9827 427px,#ff7d1a 452px,#ff610c 488px,#ff4800 531px,#ff3000 591px)"></i><i style="left:21px;top:336px;width:594px;height:2px;background:linear-gradient(90deg,#00ffa3 0px,#00ff92 131px,#01ff7e 242px,#3bff77 276px,#79ff6e 308px,#baff66 338px,#feff5c 366px,#ffd748 384px,#ffb538 403px,#ff9729 425px,#ff7c1b 451px,#ff5e0d 489px,#ff4500 534px,#ff2e00 593px)"></i><i style="left:21px;top:338px;width:596px;height:2px;background:linear-gradient(90deg,#00ffa5 0px,#00ff95 130px,#00ff81 240px,#36ff7a 272px,#76ff72 305px,#b7ff69 335px,#feff60 364px,#ffd64b 382px,#ffb339 402px,#ff962a 424px,#ff7b1d 450px,#ff5c0d 490px,#ff4200 537px,#ff2c00 595px)"></i><i style="left:22px;top:340px;width:598px;height:2px;background:linear-gradient(90deg,#00ffa7 0px,#00ff97 130px,#00ff84 239px,#37ff7d 271px,#77ff74 304px,#b9ff6c 334px,#feff63 362px,#ffd64e 380px,#ffb33c 400px,#ff942c 423px,#ff791e 449px,#ff5a0e 490px,#ff4000 540px,#ff2a00 598px)"></i><i style="left:22px;top:342px;width:600px;height:2px;background:linear-gradient(90deg,#00ffa9 0px,#0f9 129px,#00ff86 238px,#37ff7f 270px,#76ff78 302px,#b8ff6f 332px,#feff67 360px,#ffd450 379px,#ffb13d 399px,#ff922d 422px,#ff771f 449px,#ff570e 492px,#ff3d00 543px,#ff2800 600px)"></i><i style="left:22px;top:344px;width:602px;height:2px;background:linear-gradient(90deg,#00ffab 0px,#00ff9c 129px,#00ff89 237px,#3aff82 270px,#77ff7b 301px,#b8ff73 330px,#feff6a 358px,#ffd453 377px,#ffb140 397px,#ff912f 421px,#ff7520 448px,#ff550f 492px,#ff3a00 546px,#ff2700 602px)"></i><i style="left:23px;top:346px;width:605px;height:2px;background:linear-gradient(90deg,#00ffad 0px,#00ff9e 128px,#00ff8c 236px,#3bff85 269px,#79ff7e 300px,#baff76 329px,#feff6e 356px,#ffd356 375px,#ffaf41 396px,#ff8f30 420px,#ff7421 447px,#ff6218 469px,#ff530f 493px,#ff3800 549px,#ff2500 604px)"></i><i style="left:23px;top:348px;width:607px;height:2px;background:linear-gradient(90deg,#00ffaf 0px,#00ffa0 128px,#00ff8f 235px,#39ff88 267px,#78ff81 298px,#b9ff79 327px,#feff71 354px,#ffd359 373px,#ffb045 393px,#ff8f33 417px,#ff7323 445px,#ff6119 468px,#ff5110 493px,#ff3500 551px,#ff2300 606px)"></i><i style="left:24px;top:350px;width:609px;height:2px;background:linear-gradient(90deg,#00ffb1 0px,#00ffa3 127px,#00ff92 233px,#35ff8c 263px,#75ff84 295px,#b7ff7d 324px,#feff75 352px,#ffd35b 371px,#ffae46 392px,#ff8d33 417px,#ff7124 445px,#ff5f19 468px,#ff4f10 493px,#ff3401 552px,#ff2100 609px)"></i><i style="left:24px;top:352px;width:611px;height:2px;background:linear-gradient(90deg,#00ffb3 0px,#00ffa5 126px,#00ff95 232px,#35ff8f 262px,#76ff88 294px,#b9ff80 323px,#feff79 350px,#ffd25e 369px,#ffad49 390px,#ff8c35 415px,#ff6f25 444px,#ff5e1a 467px,#ff4e11 492px,#ff3302 550px,#ff2000 611px)"></i><i style="left:25px;top:354px;width:614px;height:2px;background:linear-gradient(90deg,#00ffb6 0px,#00ffa8 126px,#00ff98 231px,#38ff92 262px,#77ff8b 293px,#b8ff84 321px,#ffff7c 348px,#ffd262 367px,#ffab4a 389px,#ff8a37 414px,#ff6e26 443px,#ff5c1c 466px,#ff4d12 491px,#ff3203 549px,#ff2e00 561px,#ff1e00 613px)"></i><i style="left:25px;top:356px;width:616px;height:2px;background:linear-gradient(90deg,#00ffb8 0px,#0fa 125px,#00ff9b 230px,#39ff95 261px,#77ff8e 291px,#b8ff87 319px,#ffff80 346px,#ffd265 365px,#ffab4d 387px,#ff8a39 412px,#ff6d28 441px,#ff5519 475px,#ff3f0c 515px,#ff2c00 564px,#ff1d00 615px)"></i><i style="left:26px;top:358px;width:618px;height:2px;background:linear-gradient(90deg,#00ffba 0px,#00ffad 125px,#00ff9e 229px,#39ff98 260px,#78ff92 290px,#baff8b 318px,#ffff84 344px,#ffe876 353px,#ffd168 363px,#ffaa4f 385px,#ff893b 410px,#ff6c29 440px,#ff5319 475px,#ff3e0c 515px,#ff2900 567px,#ff1b00 617px)"></i><i style="left:26px;top:360px;width:620px;height:2px;background:linear-gradient(90deg,#00ffbc 0px,#00ffb0 124px,#00ffa1 228px,#3aff9b 259px,#77ff95 288px,#b9ff8f 316px,#ff8 342px,#ffe578 352px,#ffcf6a 362px,#ffa851 384px,#ff863c 410px,#ff6a2a 440px,#ff511a 475px,#ff3c0d 516px,#ff2800 569px,#ff1900 620px)"></i><i style="left:26px;top:362px;width:622px;height:2px;background:linear-gradient(90deg,#00ffbe 0px,#00ffb2 123px,#00ffa4 226px,#33ff9f 254px,#74ff99 285px,#b6ff93 313px,#ffff8c 340px,#ffe77d 349px,#ffd16e 359px,#ffa955 381px,#ff873f 407px,#ff692b 438px,#ff501b 474px,#ff3a0d 516px,#ff2500 572px,#ff1800 622px)"></i><i style="left:27px;top:364px;width:625px;height:2px;background:linear-gradient(90deg,#00ffc1 0px,#00ffb5 122px,#00ffa7 225px,#36ffa2 254px,#75ff9c 284px,#b9ff96 312px,#ffff90 338px,#ffe780 347px,#ffd071 357px,#ffbb63 368px,#ffa756 380px,#ff8540 406px,#ff672d 437px,#ff4e1c 473px,#ff390e 516px,#ff2300 575px,#ff1700 624px)"></i><i style="left:27px;top:366px;width:627px;height:2px;background:linear-gradient(90deg,#00ffc3 0px,#00ffb8 122px,#0fa 224px,#37ffa6 253px,#77ffa0 283px,#b8ff9a 310px,#ffff94 336px,#ffe784 345px,#ffd075 355px,#ffba66 366px,#ffa659 378px,#ff8341 405px,#ff662e 436px,#ff4d1d 473px,#ff370f 516px,#ff2100 578px,#ff1500 626px)"></i><i style="left:28px;top:368px;width:629px;height:2px;background:linear-gradient(90deg,#00ffc5 0px,#0fb 121px,#00ffae 223px,#3affa9 253px,#78ffa4 282px,#b8ff9e 308px,#ffff98 334px,#ffe688 343px,#ffcf78 353px,#ffba69 364px,#ffa65c 376px,#ff8344 403px,#ff652f 435px,#ff4b1e 472px,#ff360f 516px,#ff1f00 581px,#ff1400 628px)"></i><i style="left:28px;top:370px;width:631px;height:2px;background:linear-gradient(90deg,#00ffc8 0px,#00ffbd 121px,#00ffb1 222px,#3affac 252px,#78ffa7 280px,#b7ffa2 306px,#fdff9d 331px,#ffff9c 332px,#ffe489 342px,#ffcb78 353px,#ffa45d 375px,#ff8145 402px,#ff6330 434px,#ff4a1f 472px,#ff3410 516px,#ff1d00 584px,#ff1200 631px)"></i><i style="left:29px;top:372px;width:633px;height:2px;background:linear-gradient(90deg,#00ffca 0px,#00ffc0 120px,#01ffb4 221px,#39ffb0 250px,#77ffab 278px,#b7ffa6 304px,#fdffa1 329px,#fffea0 330px,#ffe38d 340px,#ffca7b 351px,#ffa360 373px,#ff7f46 401px,#ff6231 433px,#ff481f 472px,#ff3210 517px,#ff1c00 587px,#f10 633px)"></i><i style="left:29px;top:374px;width:636px;height:2px;background:linear-gradient(90deg,#00ffcd 0px,#00ffc3 119px,#00ffb8 219px,#36ffb4 247px,#76ffaf 276px,#b7ffaa 302px,#fdffa5 327px,#fffea5 328px,#ffe391 338px,#ffca7f 349px,#ffb570 360px,#ffa161 372px,#ff7d48 400px,#ff6033 432px,#ff4620 471px,#ff3111 517px,#ff1a00 589px,#ff0f00 635px)"></i><i style="left:30px;top:376px;width:638px;height:2px;background:linear-gradient(90deg,#00ffcf 0px,#00ffc6 119px,#0fb 218px,#37ffb7 246px,#75ffb3 274px,#b4ffaf 299px,#fffea9 326px,#ffe295 336px,#ffcb84 346px,#ffb674 357px,#ffa064 370px,#ff7d4a 398px,#ff5f34 431px,#ff4521 470px,#ff3011 517px,#ff1800 592px,#ff0e00 637px)"></i><i style="left:30px;top:378px;width:640px;height:2px;background:linear-gradient(90deg,#00ffd2 0px,#00ffc9 118px,#00ffbf 217px,#38ffbb 245px,#74ffb7 272px,#b3ffb3 297px,#fffead 324px,#ffe298 334px,#ffcb87 344px,#ffb577 355px,#ffa067 368px,#ff7c4c 396px,#ff5e36 429px,#f42 469px,#ff2f12 516px,#ff1600 595px,#ff0d00 639px)"></i><i style="left:31px;top:380px;width:642px;height:2px;background:linear-gradient(90deg,#00ffd4 0px,#00ffc2 216px,#39ffbf 244px,#76ffbb 271px,#b3ffb7 295px,#fffdb2 322px,#ffe29c 332px,#ffca8b 342px,#ffb57a 353px,#ff9f6a 366px,#ff8c5b 380px,#ff7a4d 395px,#ff5c36 429px,#ff4223 469px,#ff2d12 517px,#ff1500 598px,#ff0b00 642px)"></i><i style="left:31px;top:382px;width:644px;height:2px;background:linear-gradient(90deg,#00ffd7 0px,#00ffc6 214px,#33ffc3 240px,#73ffc0 268px,#b0ffbc 292px,#feffb8 319px,#fffdb6 320px,#ffe1a0 330px,#ffca8e 340px,#ffb47d 351px,#ff9e6c 364px,#ff8b5d 378px,#ff7950 393px,#ff5b38 427px,#ff4124 468px,#ff2b13 517px,#ff1300 601px,#ff0a00 644px)"></i><i style="left:32px;top:384px;width:646px;height:2px;background:linear-gradient(90deg,#00ffd9 0px,#00ffca 213px,#34ffc7 239px,#72ffc4 266px,#b0ffc0 290px,#feffbc 317px,#fffdba 318px,#ffe1a4 328px,#ffc992 338px,#ffb27f 350px,#ff9c6e 363px,#ff895f 377px,#ff7851 392px,#ff5939 426px,#ff3c22 474px,#ff240f 534px,#f10 604px,#ff0900 646px)"></i><i style="left:32px;top:386px;width:649px;height:2px;background:linear-gradient(90deg,#00ffdc 0px,#00ffce 212px,#37ffcb 239px,#74ffc8 265px,#afffc5 288px,#feffc1 315px,#fffdbf 316px,#ffe0a8 326px,#ffc995 336px,#ffb182 348px,#ff9b71 361px,#ff8861 375px,#ff7753 390px,#ff583a 425px,#ff3b23 473px,#ff2310 533px,#ff1000 606px,#ff0800 648px)"></i><i style="left:33px;top:388px;width:651px;height:2px;background:linear-gradient(90deg,#00ffdf 0px,#00ffd2 211px,#38ffcf 238px,#73ffcc 263px,#acffca 285px,#ffffc6 313px,#fffcc4 314px,#ffe0ac 324px,#ffc899 334px,#ffb085 346px,#ff9b74 359px,#ff8764 373px,#ff7555 389px,#ff573b 424px,#ff3924 473px,#ff2210 533px,#ff0e00 609px,#ff0700 650px)"></i><i style="left:33px;top:390px;width:653px;height:2px;background:linear-gradient(90deg,#00ffe1 0px,#01ffd6 210px,#3cffd3 238px,#79ffd0 264px,#baffce 288px,#ffffcb 311px,#ffe2b3 321px,#ffc89d 332px,#ffb18a 343px,#ff9c78 356px,#ff8867 370px,#ff7558 386px,#ff563e 421px,#ff3925 470px,#ff2212 530px,#ff0d00 612px,#ff0500 652px)"></i><i style="left:33px;top:392px;width:655px;height:2px;background:linear-gradient(90deg,#00ffe4 0px,#00ffda 208px,#34ffd8 233px,#76ffd5 261px,#b9ffd3 286px,#ffffd0 309px,#ffe2b7 319px,#ffc9a2 329px,#ffb18d 341px,#ff9b7b 354px,#ff876a 368px,#ff755a 384px,#ff553f 420px,#ff3826 469px,#ff2012 530px,#ff0b00 615px,#ff0400 655px)"></i><i style="left:34px;top:394px;width:657px;height:2px;background:linear-gradient(90deg,#00ffe7 0px,#00ffde 207px,#37ffdc 233px,#75ffda 259px,#b6ffd8 283px,#ffffd5 307px,#ffe1bb 317px,#ffc6a4 328px,#ffae8f 340px,#ff997c 353px,#ff856b 367px,#ff735b 383px,#ff5440 419px,#ff3627 469px,#ff1f13 530px,#ff0a00 618px,#ff0300 657px)"></i><i style="left:35px;top:396px;width:659px;height:2px;background:linear-gradient(90deg,#00ffea 0px,#00ffe2 206px,#3affe0 233px,#77ffde 258px,#b6ffdd 281px,#fffeda 305px,#ffe1c0 315px,#ffc6a8 326px,#ffad92 338px,#ff987f 351px,#ff846e 365px,#ff725e 381px,#ff5241 418px,#ff3528 468px,#ff1e13 529px,#ff0800 620px,#ff0200 659px)"></i><i style="left:35px;top:398px;width:661px;height:2px;background:linear-gradient(90deg,#00ffed 0px,#01ffe6 205px,#39ffe5 231px,#76ffe3 256px,#b6ffe2 279px,#fffedf 303px,#ffe0c4 313px,#ffc5ac 324px,#ffad96 336px,#ff9782 349px,#ff8370 363px,#ff7160 379px,#ff5143 416px,#ff3429 466px,#ff1d14 528px,#ff0700 623px,#ff0100 661px)"></i><i style="left:36px;top:400px;width:664px;height:2px;background:linear-gradient(90deg,#00fff0 0px,#00ffea 203px,#33ffe9 227px,#73ffe8 253px,#b2ffe7 276px,#fffde4 301px,#ffdfc8 311px,#ffc4af 322px,#ffac99 334px,#ff9685 347px,#ff8172 362px,#ff6f61 378px,#ff5044 415px,#ff332a 465px,#ff1c15 527px,#ff0500 626px,#f00 663px)"></i><i style="left:36px;top:402px;width:666px;height:2px;background:linear-gradient(90deg,#00fff3 0px,#00ffef 202px,#37ffee 227px,#75ffed 252px,#b2ffec 274px,#feffeb 298px,#fffde9 299px,#ffdfcd 309px,#ffc4b3 320px,#ffab9c 332px,#ff9487 346px,#ff7f73 361px,#ff6d63 377px,#ff4e45 415px,#ff312a 466px,#ff1b15 528px,#ff0400 629px,#f00 665px)"></i><i style="left:37px;top:404px;width:668px;height:2px;background:linear-gradient(90deg,#00fff6 0px,#00fff3 201px,#38fff3 226px,#74fff2 250px,#affff1 271px,#fefff0 296px,#fffdee 297px,#ffded1 307px,#ffc3b7 318px,#ffaaa0 330px,#ff9389 344px,#ff7e76 359px,#ff6c64 376px,#ff4c46 414px,#ff302b 465px,#ff1a16 527px,#ff0d0a 576px,#ff0300 632px,#f00 667px)"></i><i style="left:37px;top:406px;width:670px;height:2px;background:linear-gradient(90deg,#00fff9 0px,#01fff8 200px,#39fff7 225px,#73fff7 248px,#aefff7 269px,#fefff6 294px,#fffcf4 295px,#ffded6 305px,#ffc2bb 316px,#ffaaa3 328px,#ff928d 342px,#ff7e79 357px,#ff6b66 374px,#ff5955 393px,#ff4b47 413px,#ff2f2c 464px,#ff1816 528px,#ff0200 634px,#f00 670px)"></i><i style="left:38px;top:408px;width:672px;height:2px;background:linear-gradient(90deg,#00fffc 0px,#00fffc 198px,#33fffc 221px,#75fffc 247px,#b7fffc 270px,#fffffc 292px,#ffdddb 303px,#ffc2bf 314px,#ffa9a7 326px,#ff9190 340px,#ff7d7b 355px,#ff6a69 372px,#ff5957 391px,#ff4a49 411px,#ff2e2e 462px,#ff1817 526px,#ff0101 632px,#f00 672px)"></i><i style="left:38px;top:410px;width:674px;height:2px;background:linear-gradient(90deg,#00feff 0px,#00fdff 197px,#36fdff 221px,#76fdff 246px,#b5fcff 268px,#fffbfe 291px,#ffdddf 301px,#ffbfc1 313px,#ffa6a9 325px,#ff8f91 339px,#ff7b7d 354px,#ff686a 371px,#ff5759 390px,#ff4849 411px,#ff2c2d 464px,#ff1617 529px,#ff0001 633px,#f00 674px)"></i><i style="left:39px;top:412px;width:676px;height:2px;background:linear-gradient(90deg,#00fbff 0px,#00f8ff 196px,#38f8ff 221px,#75f7ff 245px,#b1f7ff 266px,#fef6ff 290px,#fff4fd 291px,#ffd6de 301px,#ffb9c1 313px,#ffa2a8 325px,#ff8b91 339px,#ff767c 355px,#ff6469 372px,#ff5458 391px,#ff4549 412px,#ff292d 466px,#ff1316 534px,#ff0002 628px,#f00 643px,#f00 676px)"></i><i style="left:39px;top:414px;width:679px;height:2px;background:linear-gradient(90deg,#00f8ff 0px,#01f4ff 195px,#3bf3ff 221px,#77f2ff 245px,#b9f1ff 268px,#fff0ff 290px,#ffd0de 301px,#ffb6c2 312px,#ff9faa 324px,#ff8993 338px,#ff747d 354px,#ff626b 371px,#ff525a 390px,#ff434a 411px,#ff353b 437px,#ff282d 466px,#ff1116 536px,#ff0004 622px,#f00 646px,#f00 678px)"></i><i style="left:40px;top:416px;width:681px;height:2px;background:linear-gradient(90deg,#00f5ff 0px,#00efff 193px,#34eeff 217px,#74edff 243px,#b2ecff 265px,#ffe9fe 290px,#ffcde0 300px,#ffb1c2 312px,#ff99a8 325px,#ff8491 339px,#ff707c 355px,#ff5f6a 372px,#ff4f59 391px,#ff414a 412px,#ff323a 439px,#ff252d 469px,#ff0f15 541px,#ff0005 617px,#f00 649px,#f00 680px)"></i><i style="left:40px;top:418px;width:683px;height:2px;background:linear-gradient(90deg,#00f2ff 0px,#00ebff 192px,#36eaff 217px,#74e8ff 242px,#aee7ff 263px,#fee5ff 289px,#ffe3fc 290px,#ffc7df 300px,#ffacc1 312px,#ff95a8 325px,#ff8091 339px,#ff6d7c 355px,#ff5c6a 372px,#ff4d59 391px,#ff3e4a 413px,#ff2f3a 441px,#ff222c 472px,#ff0d14 546px,#ff0006 612px,#f00 651px,#f00 682px)"></i><i style="left:41px;top:420px;width:685px;height:2px;background:linear-gradient(90deg,#00efff 0px,#00e7ff 191px,#39e5ff 217px,#76e3ff 242px,#b5e2ff 265px,#ffdffe 289px,#ffc4e0 299px,#ffa9c3 311px,#ff92a9 324px,#ff7c91 339px,#ff6a7d 355px,#ff596a 372px,#ff4a5a 391px,#ff3c4a 413px,#ff2e3a 441px,#ff212c 473px,#ff0b14 550px,#ff0008 607px,#f00 654px,#f00 684px)"></i><i style="left:41px;top:422px;width:687px;height:2px;background:linear-gradient(90deg,#00ebff 0px,#01e2ff 190px,#39e1ff 216px,#76dfff 241px,#b1ddff 263px,#fedaff 288px,#ffd8fd 289px,#ffbee0 299px,#ffa5c3 311px,#ff8ea9 324px,#ff7991 339px,#ff677d 355px,#ff576b 372px,#ff485a 391px,#ff3a4b 413px,#ff2b3a 442px,#ff1e2c 475px,#ff0913 555px,#ff0009 601px,#f00 657px,#f00 686px)"></i><i style="left:42px;top:424px;width:689px;height:2px;background:linear-gradient(90deg,#00e8ff 0px,#00deff 188px,#37dcff 214px,#75daff 240px,#b6d8ff 264px,#ffd5ff 288px,#ffbbe1 298px,#ffa2c4 310px,#ff8cab 323px,#ff7793 338px,#ff657e 354px,#ff546b 372px,#ff465b 391px,#ff384b 413px,#ff293a 443px,#ff1c2b 477px,#ff0712 560px,#ff000b 596px,#f00 660px,#f00 689px)"></i><i style="left:42px;top:426px;width:691px;height:2px;background:linear-gradient(90deg,#00e5ff 0px,#00daff 187px,#39d8ff 214px,#75d5ff 239px,#b2d3ff 262px,#ffcefd 288px,#ffb6e0 298px,#ff9dc4 310px,#ff88ab 323px,#ff7393 338px,#ff627e 354px,#ff516b 372px,#ff435a 392px,#ff364b 414px,#ff273a 445px,#ff1a2b 480px,#ff0f1d 520px,#ff0411 566px,#ff000c 591px,#f00 662px,#f00 691px)"></i><i style="left:43px;top:428px;width:693px;height:2px;background:linear-gradient(90deg,#00e2ff 0px,#01d6ff 186px,#39d4ff 213px,#77d1ff 239px,#baceff 264px,#ffcbff 287px,#ffb0df 298px,#ff99c3 310px,#ff84aa 323px,#ff7093 338px,#ff5f7e 354px,#ff4f6c 372px,#ff415b 392px,#ff344b 414px,#ff253a 446px,#ff182a 482px,#ff0c1d 524px,#ff0311 571px,#ff000e 585px,#f00 665px,#f00 693px)"></i><i style="left:44px;top:430px;width:695px;height:2px;background:linear-gradient(90deg,#00dfff 0px,#00d2ff 184px,#35d0ff 210px,#74cdff 237px,#b3c9ff 261px,#ffc5fe 287px,#ffabdf 298px,#ff94c3 310px,#ff80aa 323px,#ff6d93 338px,#ff5b7d 355px,#ff4c6b 373px,#ff3e5a 393px,#ff314b 415px,#ff2239 448px,#ff1529 486px,#ff0a1c 529px,#ff0010 578px,#f00 668px,#f00 695px)"></i><i style="left:44px;top:432px;width:697px;height:2px;background:linear-gradient(90deg,#00dcff 0px,#00ceff 183px,#37cbff 210px,#74c8ff 236px,#afc5ff 259px,#fec1ff 286px,#ffbffd 287px,#ffa6de 298px,#ff90c2 310px,#ff7ba8 324px,#ff6891 339px,#ff577c 356px,#ff486a 374px,#ff2f4b 416px,#ff2139 448px,#ff142a 485px,#ff0a1d 527px,#f01 574px,#f00 671px,#f00 697px)"></i><i style="left:45px;top:434px;width:700px;height:2px;background:linear-gradient(90deg,#00d9ff 0px,#00cbff 182px,#3ac7ff 210px,#76c4ff 236px,#b7c0ff 261px,#ffbbfe 286px,#ffa3df 297px,#ff8dc4 309px,#ff78aa 323px,#ff6693 338px,#ff557e 355px,#ff476b 373px,#ff2e4c 415px,#ff203b 446px,#ff142c 482px,#ff0012 569px,#ff0001 668px,#f00 699px)"></i><i style="left:45px;top:436px;width:702px;height:2px;background:linear-gradient(90deg,#00d6ff 0px,#01c7ff 181px,#3ac3ff 209px,#75c0ff 235px,#b0bcff 258px,#feb7ff 285px,#ffb6fd 286px,#ff9edf 297px,#ff89c3 309px,#ff74aa 323px,#ff6393 338px,#ff527e 355px,#ff446c 373px,#ff375b 393px,#ff2b4c 416px,#ff1e3b 447px,#ff132c 481px,#ff0014 563px,#ff0002 661px,#f00 701px)"></i><i style="left:46px;top:438px;width:704px;height:2px;background:linear-gradient(90deg,#00d4ff 0px,#00c3ff 179px,#36c0ff 206px,#75bbff 234px,#b7b7ff 260px,#ffb2ff 285px,#ff9be0 296px,#ff86c5 308px,#ff72ab 322px,#ff6194 337px,#ff517f 354px,#ff426c 373px,#ff355b 393px,#ff294c 416px,#ff1d3c 446px,#ff122e 479px,#ff0016 558px,#ff0003 655px,#f00 679px,#f00 703px)"></i><i style="left:46px;top:440px;width:706px;height:2px;background:linear-gradient(90deg,#00d1ff 0px,#00bfff 178px,#38bcff 206px,#75b7ff 233px,#b1b3ff 257px,#feaeff 284px,#ffadfd 285px,#ff96df 296px,#ff80c2 309px,#ff6da9 323px,#ff5d93 338px,#ff4d7e 355px,#ff3f6b 374px,#ff274c 417px,#ff1c3d 445px,#ff122f 477px,#ff0017 553px,#ff0005 650px,#f00 682px,#f00 705px)"></i><i style="left:47px;top:442px;width:708px;height:2px;background:linear-gradient(90deg,#00ceff 0px,#01bcff 177px,#3ab8ff 206px,#79b3ff 234px,#bbaeff 260px,#ffa9ff 284px,#ff93e1 295px,#ff7ec4 308px,#ff6baa 322px,#ff5b94 337px,#ff4b7f 354px,#ff3d6c 373px,#ff315b 394px,#ff254c 417px,#ff1130 475px,#ff0019 547px,#ff0006 644px,#f00 685px,#f00 707px)"></i><i style="left:48px;top:444px;width:710px;height:2px;background:linear-gradient(90deg,#00cbff 0px,#00b8ff 175px,#36b4ff 203px,#74afff 231px,#b2abff 256px,#ffa4fd 284px,#ff8ee0 295px,#ff7ac3 308px,#ff67aa 322px,#ff5794 337px,#ff497f 354px,#ff3b6d 373px,#ff2f5c 394px,#ff244c 417px,#ff1031 473px,#ff001b 542px,#ff0007 640px,#f00 687px,#f00 709px)"></i><i style="left:48px;top:446px;width:712px;height:2px;background:linear-gradient(90deg,#00c8ff 0px,#00b5ff 174px,#3bb0ff 204px,#79abff 232px,#b9a6ff 258px,#ffa0ff 283px,#ff8be1 294px,#ff77c5 307px,#ff65ab 321px,#ff5494 337px,#ff4680 354px,#ff396d 373px,#ff2d5c 394px,#ff224d 417px,#ff0f32 471px,#ff001d 537px,#ff0008 635px,#f00 690px,#f00 711px)"></i><i style="left:49px;top:448px;width:714px;height:2px;background:linear-gradient(90deg,#00c5ff 0px,#01b1ff 173px,#39adff 202px,#76a8ff 230px,#b3a2ff 255px,#ff9bfe 283px,#ff87e1 294px,#ff73c4 307px,#ff62ab 321px,#ff5294 337px,#ff4380 354px,#ff376d 373px,#ff2b5c 394px,#ff204d 418px,#ff0f34 469px,#ff001f 531px,#ff0009 630px,#f00 693px,#f00 713px)"></i><i style="left:49px;top:450px;width:716px;height:2px;background:linear-gradient(90deg,#00c3ff 0px,#00aeff 171px,#37a9ff 200px,#76a4ff 229px,#b79eff 256px,#ff98ff 282px,#ff82e0 294px,#ff6fc4 307px,#ff5eab 321px,#ff4f94 337px,#ff4180 354px,#ff346d 373px,#ff295d 394px,#ff1e4d 418px,#ff0e35 467px,#ff0021 526px,#ff000a 628px,#f00 695px,#f00 716px)"></i><i style="left:50px;top:452px;width:718px;height:2px;background:linear-gradient(90deg,#00c0ff 0px,#00abff 170px,#39a6ff 200px,#75a0ff 228px,#b49aff 254px,#ff93fe 282px,#ff7edf 294px,#ff6cc3 307px,#ff5bab 321px,#ff4c94 337px,#ff3e7f 355px,#ff326d 374px,#ff1c4d 419px,#ff0d36 466px,#ff0023 521px,#ff000b 624px,#f00 698px,#f00 718px)"></i><i style="left:51px;top:454px;width:720px;height:2px;background:linear-gradient(90deg,#00bdff 0px,#01a7ff 169px,#39a2ff 199px,#759cff 227px,#ae97ff 251px,#ff90ff 281px,#ff8efd 282px,#ff7ade 294px,#ff68c3 307px,#ff58aa 321px,#ff4994 337px,#ff3b7f 355px,#ff2f6d 374px,#ff245c 396px,#ff1a4c 420px,#ff0c37 464px,#ff0025 515px,#ff000c 619px,#f00 701px,#f00 720px)"></i><i style="left:51px;top:456px;width:722px;height:2px;background:linear-gradient(90deg,#00baff 0px,#00a4ff 167px,#369fff 196px,#7599ff 226px,#b593ff 253px,#ff8bfe 281px,#ff77df 293px,#ff65c4 306px,#f5a 321px,#ff4694 337px,#ff397f 355px,#ff2d6d 374px,#ff225c 396px,#ff194d 420px,#ff0b38 462px,#ff0027 510px,#ff0019 559px,#ff000d 616px,#f00 703px,#f00 722px)"></i><i style="left:52px;top:458px;width:722px;height:2px;background:linear-gradient(90deg,#00b8ff 0px,#00a1ff 166px,#389cff 196px,#7595ff 225px,#af8fff 250px,#fe87ff 280px,#ff86fd 281px,#ff73de 293px,#ff62c3 306px,#ff52aa 321px,#ff4494 337px,#ff377f 355px,#ff2b6d 374px,#ff215c 396px,#ff174d 420px,#ff0b3a 459px,#ff0029 505px,#ff001b 554px,#ff000f 609px,#ff0002 690px,#f00 721px)"></i><i style="left:52px;top:460px;width:717px;height:2px;background:linear-gradient(90deg,#00b5ff 0px,#019eff 165px,#3a98ff 196px,#7792ff 225px,#b68bff 252px,#ff83fe 280px,#ff70e0 292px,#ff5fc5 305px,#ff50ad 319px,#ff4296 335px,#ff3581 353px,#ff2a6f 372px,#ff164f 417px,#ff0a3c 455px,#ff002b 499px,#ff001d 545px,#ff0012 598px,#f00 716px)"></i><i style="left:53px;top:462px;width:711px;height:2px;background:linear-gradient(90deg,#00b2ff 0px,#009bff 163px,#3595ff 192px,#728fff 222px,#ae88ff 248px,#fe80ff 279px,#ff7efd 280px,#ff6cdf 292px,#ff5cc4 305px,#ff4dac 319px,#ff4096 335px,#ff3381 353px,#ff286f 372px,#ff1550 416px,#ff0a3d 452px,#ff002d 494px,#ff0014 588px,#f00 710px)"></i><i style="left:54px;top:464px;width:704px;height:2px;background:linear-gradient(90deg,#00b0ff 0px,#0098ff 162px,#3992ff 193px,#768bff 223px,#b584ff 250px,#ff7bfe 279px,#ff69e0 291px,#ff59c5 304px,#ff4bae 318px,#ff3e97 334px,#ff3283 351px,#ff2771 370px,#ff1451 414px,#ff093f 449px,#ff002f 488px,#f02 532px,#ff0010 610px,#ff0001 704px)"></i><i style="left:54px;top:466px;width:698px;height:2px;background:linear-gradient(90deg,#00adff 0px,#0195ff 161px,#398eff 192px,#7488ff 221px,#af81ff 247px,#ff78ff 278px,#ff77fd 279px,#ff67e1 290px,#ff57c7 303px,#ff49af 317px,#ff3c98 333px,#ff3084 350px,#ff2672 369px,#ff1352 413px,#ff0941 446px,#ff0032 483px,#ff0023 529px,#f01 606px,#ff0002 698px)"></i><i style="left:55px;top:468px;width:692px;height:2px;background:linear-gradient(90deg,#00abff 0px,#0092ff 159px,#378cff 190px,#7684ff 221px,#b67dff 249px,#ff74fe 278px,#ff64e3 289px,#ff55c8 302px,#ff47b0 316px,#ff3a99 332px,#ff2f85 349px,#ff2473 368px,#ff1254 411px,#ff0943 442px,#ff0034 477px,#ff0024 525px,#ff0013 600px,#ff0004 691px)"></i><i style="left:56px;top:470px;width:686px;height:2px;background:linear-gradient(90deg,#00a8ff 0px,#008fff 158px,#3a88ff 190px,#7881ff 221px,#ba79ff 250px,#ff71ff 277px,#ff60e2 289px,#ff51c7 302px,#ff44b0 316px,#ff389a 331px,#ff2d87 348px,#ff2375 366px,#f15 409px,#ff0845 439px,#ff0036 472px,#ff0026 522px,#ff0014 596px,#ff0005 685px)"></i><i style="left:56px;top:472px;width:679px;height:2px;background:linear-gradient(90deg,#00a6ff 0px,#008cff 156px,#3486ff 186px,#747eff 218px,#b476ff 247px,#ff6cfe 277px,#ff5ee3 288px,#ff4fc8 301px,#ff42b1 315px,#ff369c 330px,#ff2b88 347px,#ff2276 365px,#ff1057 407px,#ff0039 466px,#ff0027 518px,#ff0015 591px,#ff0006 679px)"></i><i style="left:57px;top:474px;width:673px;height:2px;background:linear-gradient(90deg,#00a3ff 0px,#0089ff 155px,#3a82ff 188px,#787aff 219px,#b872ff 248px,#ff69ff 276px,#ff5ae2 288px,#ff4dca 300px,#ff40b2 314px,#ff349d 329px,#ff2a89 346px,#ff2077 364px,#ff0f58 405px,#ff003c 461px,#ff0028 515px,#ff0016 587px,#ff0007 673px)"></i><i style="left:57px;top:476px;width:667px;height:2px;background:linear-gradient(90deg,#00a0ff 0px,#0187ff 154px,#3a7fff 187px,#77f 218px,#b56fff 246px,#ff65fe 276px,#ff57e3 287px,#ff49c9 300px,#ff3db2 314px,#ff329d 329px,#ff288a 345px,#ff1f78 363px,#ff0e59 404px,#ff003e 456px,#ff002a 512px,#ff0018 582px,#ff0009 666px)"></i><i style="left:58px;top:478px;width:661px;height:2px;background:linear-gradient(90deg,#009eff 0px,#0084ff 152px,#377dff 184px,#7774ff 217px,#b96cff 247px,#ff62ff 275px,#ff54e2 287px,#ff47ca 299px,#ff3cb4 312px,#ff319f 327px,#ff278c 343px,#ff1d7a 361px,#ff0d5b 402px,#ff0041 450px,#ff002b 508px,#ff0019 577px,#ff000a 660px)"></i><i style="left:59px;top:480px;width:654px;height:2px;background:linear-gradient(90deg,#009bff 0px,#0081ff 151px,#397aff 184px,#7571ff 215px,#b469ff 244px,#ff5efe 275px,#ff51e3 286px,#ff44ca 299px,#ff39b4 312px,#ff2e9f 327px,#ff258c 343px,#ff1b7a 361px,#ff0c5b 401px,#f04 445px,#ff002c 506px,#ff001a 574px,#ff000b 654px)"></i><i style="left:60px;top:482px;width:648px;height:2px;background:linear-gradient(90deg,#09f 0px,#017eff 150px,#3977ff 183px,#776eff 215px,#b865ff 245px,#ff5bff 274px,#ff4ee5 285px,#ff42cc 297px,#ff38b6 310px,#ff2da1 325px,#ff1b7d 358px,#ff0b5e 398px,#ff0047 439px,#ff002e 501px,#ff001c 568px,#ff000d 647px)"></i><i style="left:60px;top:484px;width:642px;height:2px;background:linear-gradient(90deg,#0097ff 0px,#007cff 148px,#3874ff 181px,#756cff 213px,#b363ff 242px,#ff57fd 274px,#ff4be4 285px,#ff3fcc 297px,#ff35b6 310px,#ff2aa1 325px,#ff197d 358px,#ff0a5e 397px,#ff0049 434px,#ff002f 498px,#ff001d 563px,#ff000e 641px)"></i><i style="left:61px;top:486px;width:635px;height:2px;background:linear-gradient(90deg,#0094ff 0px,#0179ff 147px,#3a71ff 181px,#7768ff 213px,#b75fff 243px,#f5f 273px,#ff48e5 284px,#ff3dcd 296px,#ff33b7 309px,#ff29a2 324px,#ff177e 357px,#ff0960 395px,#ff004d 428px,#ff0031 495px,#ff001f 559px,#ff000f 635px)"></i><i style="left:62px;top:488px;width:629px;height:2px;background:linear-gradient(90deg,#0092ff 0px,#07f 145px,#376fff 178px,#7366ff 210px,#b05dff 239px,#fe52ff 272px,#ff51fd 273px,#ff45e4 284px,#ff3acc 296px,#ff30b6 309px,#ff26a1 324px,#ff167f 356px,#ff0861 394px,#ff0050 423px,#ff0040 456px,#ff0032 492px,#ff0020 555px,#f01 629px)"></i><i style="left:62px;top:490px;width:623px;height:2px;background:linear-gradient(90deg,#008fff 0px,#0074ff 144px,#396cff 178px,#7763ff 211px,#b659ff 241px,#ff4efe 272px,#ff43e5 283px,#ff38cd 295px,#ff2eb8 308px,#ff25a4 322px,#ff1580 354px,#ff0763 391px,#ff0053 418px,#ff0042 451px,#ff0034 488px,#f02 550px,#ff0012 622px)"></i><i style="left:63px;top:492px;width:616px;height:2px;background:linear-gradient(90deg,#008dff 0px,#0072ff 142px,#3869ff 176px,#7760ff 210px,#b856ff 241px,#ff4bff 271px,#ff3fe4 283px,#ff36ce 294px,#ff2cb9 307px,#ff23a5 321px,#ff1482 352px,#ff0664 389px,#ff0056 412px,#ff0045 446px,#ff0036 484px,#ff0023 545px,#ff0014 616px)"></i><i style="left:64px;top:494px;width:610px;height:2px;background:linear-gradient(90deg,#008bff 0px,#006fff 141px,#3a66ff 176px,#775dff 209px,#b554ff 239px,#ff48fe 271px,#ff3de5 282px,#ff33ce 294px,#ff21a6 320px,#ff1283 351px,#ff0565 388px,#ff0059 407px,#ff0047 442px,#ff0037 481px,#ff0025 540px,#ff0015 610px)"></i><i style="left:64px;top:496px;width:604px;height:2px;background:linear-gradient(90deg,#08f 0px,#016dff 140px,#3c64ff 176px,#795aff 209px,#b950ff 240px,#ff45ff 270px,#ff3ae6 281px,#ff31d0 292px,#ff20a8 318px,#ff1185 349px,#ff0468 385px,#ff005d 401px,#ff004e 427px,#ff0039 477px,#ff0026 535px,#ff0017 603px)"></i><i style="left:65px;top:498px;width:597px;height:2px;background:linear-gradient(90deg,#0086ff 0px,#006bff 138px,#3962ff 173px,#7558ff 206px,#b24eff 236px,#ff42fe 270px,#ff37e5 281px,#ff2ed0 292px,#ff1ea8 318px,#ff1086 348px,#ff0368 384px,#ff0060 396px,#ff0050 425px,#ff003a 474px,#ff0028 531px,#ff0018 597px)"></i><i style="left:66px;top:500px;width:591px;height:2px;background:linear-gradient(90deg,#0084ff 0px,#0168ff 137px,#3b5fff 173px,#75f 206px,#b64bff 237px,#ff3ffe 269px,#ff35e6 280px,#ff2cd0 291px,#ff1ca9 317px,#ff0e87 347px,#ff026a 382px,#ff0064 390px,#ff0051 423px,#ff003c 471px,#ff0029 526px,#ff001a 591px)"></i><i style="left:66px;top:502px;width:585px;height:2px;background:linear-gradient(90deg,#0081ff 0px,#06f 135px,#385dff 170px,#7553ff 204px,#b149ff 234px,#ff3cff 268px,#ff3bfd 269px,#ff32e5 280px,#ff29d0 291px,#ff1aaa 316px,#ff0d88 346px,#ff016b 380px,#ff0053 420px,#ff003d 467px,#ff002b 521px,#ff001c 584px)"></i><i style="left:67px;top:504px;width:578px;height:2px;background:linear-gradient(90deg,#007fff 0px,#0063ff 134px,#3a5aff 170px,#7750ff 204px,#b546ff 235px,#ff39fe 268px,#ff2fe6 279px,#ff27d1 290px,#ff18aa 315px,#ff0b8a 344px,#ff006d 378px,#f05 417px,#ff003f 463px,#ff002d 516px,#ff001d 578px)"></i><i style="left:68px;top:506px;width:572px;height:2px;background:linear-gradient(90deg,#007dff 0px,#0061ff 132px,#3958ff 168px,#774dff 203px,#b942ff 236px,#ff36ff 267px,#ff26d3 288px,#ff17ad 313px,#ff0a8b 342px,#ff006f 375px,#ff0056 414px,#ff0041 459px,#ff002f 511px,#ff001f 571px)"></i><i style="left:69px;top:508px;width:566px;height:2px;background:linear-gradient(90deg,#007aff 0px,#005fff 131px,#3955ff 167px,#754bff 201px,#b241ff 232px,#ff33fe 267px,#ff23d3 288px,#ff15ac 313px,#ff098c 341px,#ff0075 367px,#ff0070 374px,#ff0058 412px,#ff0043 456px,#ff0030 507px,#ff0021 565px)"></i><i style="left:69px;top:510px;width:559px;height:2px;background:linear-gradient(90deg,#0078ff 0px,#005dff 129px,#3653ff 164px,#7549ff 200px,#b63dff 233px,#ff31fe 266px,#ff21d3 287px,#ff13af 311px,#ff088e 339px,#ff0079 362px,#ff0071 372px,#ff0059 409px,#f04 452px,#ff0032 502px,#f02 559px)"></i><i style="left:70px;top:512px;width:553px;height:2px;background:linear-gradient(90deg,#0076ff 0px,#005bff 128px,#3b50ff 166px,#7945ff 201px,#ba3aff 234px,#ff2eff 265px,#ff1fd4 286px,#ff12af 310px,#ff0790 337px,#ff007d 357px,#ff0074 369px,#ff005b 406px,#ff0046 448px,#ff0034 496px,#ff0024 552px)"></i><i style="left:71px;top:514px;width:546px;height:2px;background:linear-gradient(90deg,#0074ff 0px,#0059ff 126px,#374fff 162px,#7544ff 198px,#b339ff 230px,#ff2bfe 265px,#ff1dd5 285px,#ff10b0 309px,#ff0898 329px,#ff0083 351px,#ff0075 368px,#ff005d 404px,#ff0048 445px,#ff0036 492px,#ff0026 546px)"></i><i style="left:72px;top:516px;width:540px;height:2px;background:linear-gradient(90deg,#0072ff 0px,#0056ff 125px,#3b4cff 163px,#7741ff 198px,#b735ff 231px,#ff28ff 264px,#ff1bd6 284px,#ff0eb1 308px,#ff079b 326px,#f08 345px,#f07 365px,#ff005f 400px,#ff004a 441px,#ff0038 487px,#ff0028 540px)"></i><i style="left:73px;top:518px;width:534px;height:2px;background:linear-gradient(90deg,#006fff 0px,#0054ff 123px,#384aff 160px,#773fff 197px,#b933ff 231px,#ff26ff 263px,#ff18d5 284px,#ff0cb2 307px,#ff008c 340px,#ff0078 363px,#ff0060 398px,#ff004c 437px,#ff003a 482px,#ff002a 533px)"></i><i style="left:73px;top:520px;width:527px;height:2px;background:linear-gradient(90deg,#006dff 0px,#0052ff 122px,#3a47ff 160px,#763dff 195px,#b531ff 228px,#ff23fe 263px,#ff16d6 283px,#ff0bb3 306px,#ff0092 334px,#ff007a 361px,#ff0062 395px,#ff004e 433px,#ff003c 477px,#ff002c 527px)"></i><i style="left:74px;top:522px;width:521px;height:2px;background:linear-gradient(90deg,#006bff 0px,#0050ff 120px,#3746ff 157px,#763aff 194px,#b62eff 228px,#ff21ff 262px,#ff14d7 282px,#ff09b5 304px,#ff0097 329px,#ff007c 358px,#ff0065 391px,#ff0050 429px,#ff003e 472px,#ff002e 520px)"></i><i style="left:75px;top:524px;width:514px;height:2px;background:linear-gradient(90deg,#0069ff 0px,#004eff 119px,#3b43ff 158px,#7838ff 194px,#b82bff 228px,#ff1eff 261px,#ff12d7 281px,#ff08b6 303px,#ff009d 323px,#ff007e 356px,#ff0067 388px,#ff0052 425px,#ff0040 467px,#ff0030 514px)"></i><i style="left:76px;top:526px;width:508px;height:2px;background:linear-gradient(90deg,#0067ff 0px,#004cff 117px,#3841ff 155px,#7636ff 192px,#b42aff 225px,#ff1bfe 261px,#ff10d8 280px,#ff06b6 302px,#ff00a2 318px,#ff007f 354px,#ff0069 385px,#ff0054 421px,#ff0042 461px,#f03 507px)"></i><i style="left:76px;top:528px;width:502px;height:2px;background:linear-gradient(90deg,#0065ff 0px,#014aff 116px,#3a3fff 155px,#7833ff 192px,#b827ff 226px,#ff19ff 260px,#ff0ed9 279px,#ff05b8 300px,#ff00a9 312px,#ff009b 324px,#ff0081 352px,#ff006a 383px,#ff0056 417px,#ff0045 456px,#ff0035 501px)"></i><i style="left:77px;top:530px;width:495px;height:2px;background:linear-gradient(90deg,#0062ff 0px,#0048ff 114px,#3b3dff 154px,#7831ff 191px,#ba24ff 226px,#ff17ff 259px,#ff0cda 278px,#ff03b9 299px,#ff00af 307px,#ff009c 323px,#ff0083 349px,#ff006d 379px,#ff0059 413px,#ff0047 451px,#ff0037 494px)"></i><i style="left:78px;top:532px;width:488px;height:2px;background:linear-gradient(90deg,#0060ff 0px,#0146ff 113px,#3a3bff 152px,#752fff 188px,#b223ff 221px,#ff14fd 259px,#ff0ada 277px,#ff01ba 298px,#ff009e 321px,#ff0085 347px,#ff006f 376px,#ff005b 409px,#ff0049 446px,#ff0039 488px)"></i><i style="left:79px;top:534px;width:482px;height:2px;background:linear-gradient(90deg,#005eff 0px,#04f 111px,#3a39ff 151px,#772dff 188px,#b520ff 222px,#ff11fe 258px,#ff08db 276px,#ff00bc 296px,#ff00a0 319px,#ff0087 344px,#ff0071 373px,#ff005d 405px,#ff004b 441px,#ff003c 481px)"></i><i style="left:80px;top:536px;width:475px;height:2px;background:linear-gradient(90deg,#005cff 0px,#0042ff 109px,#3837ff 148px,#772aff 187px,#b71eff 222px,#ff0fff 257px,#ff06db 275px,#ff00c5 289px,#ff00bd 295px,#ff00a1 317px,#ff0089 342px,#ff0073 370px,#ff005f 401px,#ff004e 436px,#ff003e 475px)"></i><i style="left:81px;top:538px;width:469px;height:2px;background:linear-gradient(90deg,#005aff 0px,#0140ff 108px,#3a35ff 148px,#7828ff 186px,#b91bff 222px,#ff0dff 256px,#ff04dc 274px,#f0c 284px,#ff00bf 293px,#ff00a3 315px,#ff008b 339px,#ff0075 366px,#ff0062 396px,#ff0051 430px,#ff0041 468px)"></i><i style="left:82px;top:540px;width:462px;height:2px;background:linear-gradient(90deg,#0058ff 0px,#003fff 106px,#3933ff 146px,#7627ff 184px,#b31aff 218px,#ff0afd 256px,#ff00d4 278px,#ff00bf 292px,#ff00a5 313px,#ff008d 337px,#ff0078 363px,#ff0064 393px,#ff0053 426px,#ff0043 462px)"></i><i style="left:83px;top:542px;width:456px;height:2px;background:linear-gradient(90deg,#0056ff 0px,#013dff 105px,#3a31ff 145px,#7624ff 183px,#b517ff 218px,#ff08fe 255px,#f0d 272px,#ff00c1 290px,#ff00a7 311px,#ff008f 334px,#ff007a 360px,#ff0067 388px,#ff0056 420px,#ff0046 455px)"></i><i style="left:84px;top:544px;width:449px;height:2px;background:linear-gradient(90deg,#0054ff 0px,#003bff 103px,#3a2fff 144px,#72f 182px,#b715ff 218px,#ff06fe 254px,#ff00e5 267px,#ff00c2 289px,#ff00a8 309px,#ff0091 332px,#ff007c 357px,#ff0069 384px,#ff0058 415px,#ff0049 449px)"></i><i style="left:84px;top:546px;width:443px;height:2px;background:linear-gradient(90deg,#0052ff 0px,#0039ff 101px,#3a2dff 142px,#7720ff 181px,#b912ff 218px,#ff04ff 253px,#ff00ef 261px,#ff00e0 269px,#ff00c4 287px,#f0a 307px,#ff0093 329px,#ff007f 353px,#ff006c 380px,#ff005b 409px,#ff004c 442px)"></i><i style="left:85px;top:548px;width:436px;height:2px;background:linear-gradient(90deg,#0050ff 0px,#0137ff 100px,#3a2bff 141px,#781eff 180px,#b910ff 217px,#ff01ff 252px,#ff00e1 268px,#ff00c4 286px,#ff00ac 305px,#ff0096 326px,#ff0081 350px,#ff006e 376px,#ff004e 436px)"></i><i style="left:86px;top:550px;width:430px;height:2px;background:linear-gradient(90deg,#004eff 0px,#0036ff 98px,#3929ff 139px,#761cff 178px,#b30fff 213px,#ff00fe 252px,#ff00df 268px,#ff00c5 285px,#ff00ac 304px,#ff0097 324px,#ff0083 347px,#ff0071 372px,#ff0052 429px)"></i><i style="left:87px;top:552px;width:423px;height:2px;background:linear-gradient(90deg,#004cff 0px,#0034ff 96px,#3a28ff 138px,#771aff 177px,#b50dff 213px,#f200ff 244px,#ff00fe 251px,#ff00e2 266px,#ff00c7 283px,#ff00af 301px,#ff009a 321px,#ff0086 343px,#ff0074 367px,#ff0054 423px)"></i><i style="left:88px;top:554px;width:417px;height:2px;background:linear-gradient(90deg,#004aff 0px,#0132ff 95px,#3b26ff 137px,#7718ff 176px,#ae0cff 208px,#e700ff 238px,#ff00fe 250px,#ff00e2 265px,#ff00c9 281px,#ff00b1 299px,#ff009c 318px,#ff0089 339px,#f07 363px,#ff0058 416px)"></i><i style="left:89px;top:556px;width:410px;height:2px;background:linear-gradient(90deg,#0048ff 0px,#0031ff 93px,#3a24ff 135px,#7716ff 175px,#a90cff 204px,#d0f 232px,#f0f 249px,#ff00e4 263px,#ff00cb 279px,#ff00b4 296px,#ff009f 315px,#ff008b 336px,#ff007a 358px,#ff005b 410px)"></i><i style="left:90px;top:558px;width:403px;height:2px;background:linear-gradient(90deg,#0046ff 0px,#002fff 91px,#3a22ff 134px,#7815ff 174px,#a50aff 201px,#d300ff 226px,#f0f 248px,#ff00e5 262px,#ff00cd 277px,#ff00b6 294px,#ff00a1 312px,#ff007d 354px,#ff005e 403px)"></i><i style="left:91px;top:560px;width:397px;height:2px;background:linear-gradient(90deg,#04f 0px,#012dff 90px,#3b20ff 133px,#7813ff 173px,#c0f 221px,#f0f 247px,#ff00e3 262px,#ff00cd 276px,#ff00b8 292px,#ff00a3 310px,#ff0080 349px,#ff0062 396px)"></i><i style="left:92px;top:562px;width:390px;height:2px;background:linear-gradient(90deg,#0042ff 0px,#002cff 88px,#3a1fff 131px,#7811ff 172px,#c200ff 215px,#fe00ff 246px,#ff00e4 261px,#ff00ce 275px,#ff00a6 307px,#ff0083 345px,#ff0065 390px)"></i><i style="left:93px;top:564px;width:384px;height:2px;background:linear-gradient(90deg,#0040ff 0px,#002aff 86px,#3a1dff 129px,#770fff 170px,#b900ff 209px,#fe00ff 245px,#ff00d0 273px,#ff00a8 304px,#ff0087 340px,#ff0069 383px)"></i><i style="left:94px;top:566px;width:377px;height:2px;background:linear-gradient(90deg,#003eff 0px,#0128ff 85px,#3a1bff 128px,#780dff 169px,#b200ff 204px,#fe00ff 244px,#ff00d0 272px,#f0a 302px,#ff0089 337px,#ff006d 377px)"></i><i style="left:95px;top:568px;width:371px;height:2px;background:linear-gradient(90deg,#003cff 0px,#0127ff 83px,#3b19ff 127px,#780bff 168px,#a0f 198px,#f0f 244px,#ff00d3 269px,#ff00ae 298px,#ff008e 331px,#ff0071 370px)"></i><i style="left:96px;top:570px;width:364px;height:2px;background:linear-gradient(90deg,#003aff 0px,#0025ff 81px,#3a18ff 125px,#7809ff 167px,#a100ff 192px,#cf00ff 218px,#f0f 243px,#ff00d5 267px,#ff00b0 295px,#ff0091 327px,#ff0076 363px)"></i><i style="left:97px;top:572px;width:357px;height:2px;background:linear-gradient(90deg,#0038ff 0px,#0024ff 79px,#3916ff 123px,#7708ff 165px,#9b00ff 187px,#cb00ff 215px,#f0f 242px,#ff00d6 266px,#ff00b3 292px,#ff0095 322px,#ff0079 357px)"></i><i style="left:98px;top:574px;width:351px;height:2px;background:linear-gradient(90deg,#0036ff 0px,#0122ff 78px,#3a15ff 122px,#7806ff 164px,#9300ff 181px,#c800ff 212px,#fe00ff 241px,#ff00d8 264px,#ff00b6 289px,#ff0098 318px,#ff007e 350px)"></i><i style="left:99px;top:576px;width:344px;height:2px;background:linear-gradient(90deg,#0035ff 0px,#0021ff 76px,#3b13ff 121px,#7804ff 163px,#8b00ff 175px,#ba00ff 203px,#fe00ff 240px,#ff00d8 263px,#ff00b9 286px,#ff009c 313px,#ff0082 344px)"></i><i style="left:100px;top:578px;width:337px;height:2px;background:linear-gradient(90deg,#03f 0px,#001fff 74px,#3a11ff 119px,#7703ff 161px,#8300ff 169px,#b800ff 201px,#fe00ff 239px,#ff00da 261px,#ff00bc 283px,#ff00a0 308px,#ff0087 337px)"></i><i style="left:101px;top:580px;width:331px;height:2px;background:linear-gradient(90deg,#0031ff 0px,#011dff 73px,#3b10ff 118px,#7701ff 160px,#b800ff 200px,#fe00ff 238px,#ff00da 260px,#ff00bf 280px,#ff00a4 304px,#ff008c 330px)"></i><i style="left:102px;top:582px;width:324px;height:2px;background:linear-gradient(90deg,#002fff 0px,#011cff 71px,#3a0eff 116px,#7800ff 159px,#b900ff 199px,#fe00ff 237px,#ff00dc 258px,#ff00c1 277px,#ff00a8 299px,#ff0091 324px)"></i><i style="left:103px;top:584px;width:317px;height:2px;background:linear-gradient(90deg,#002dff 0px,#001bff 69px,#3a0dff 114px,#6e00ff 151px,#70f 157px,#b900ff 198px,#fe00ff 236px,#ff00de 256px,#ff00c4 274px,#ff00ad 294px,#ff0097 317px)"></i><i style="left:104px;top:586px;width:311px;height:2px;background:linear-gradient(90deg,#002bff 0px,#0019ff 67px,#3a0bff 113px,#6700ff 145px,#70f 156px,#b900ff 197px,#f0f 236px,#ff00e3 252px,#ff00c9 270px,#ff00b2 289px,#ff009c 310px)"></i><i style="left:105px;top:588px;width:304px;height:2px;background:linear-gradient(90deg,#0029ff 0px,#0018ff 65px,#2f0cff 103px,#6200ff 140px,#7800ff 155px,#b900ff 196px,#f0f 235px,#ff00e5 250px,#f0c 267px,#ff00b5 285px,#ff00a2 304px)"></i><i style="left:106px;top:590px;width:297px;height:2px;background:linear-gradient(90deg,#0028ff 0px,#0116ff 64px,#2d0bff 100px,#5b00ff 134px,#7900ff 154px,#ba00ff 195px,#f0f 234px,#ff00e6 248px,#ff00d0 263px,#ff00a8 297px)"></i><i style="left:107px;top:592px;width:291px;height:2px;background:linear-gradient(90deg,#0026ff 0px,#0115ff 62px,#2a0bff 96px,#50f 128px,#7800ff 152px,#b800ff 193px,#f0f 233px,#ff00d4 259px,#ff00ae 290px)"></i><i style="left:108px;top:594px;width:284px;height:2px;background:linear-gradient(90deg,#0024ff 0px,#0114ff 60px,#4f00ff 122px,#7800ff 151px,#ba00ff 193px,#f0f 232px,#ff00d7 256px,#ff00b5 283px)"></i><i style="left:110px;top:596px;width:277px;height:2px;background:linear-gradient(90deg,#02f 0px,#0012ff 58px,#4900ff 116px,#7900ff 150px,#ba00ff 192px,#f0f 231px,#ff00db 253px,#f0b 277px)"></i><i style="left:111px;top:598px;width:270px;height:2px;background:linear-gradient(90deg,#0020ff 0px,#01f 56px,#4300ff 110px,#7800ff 148px,#b900ff 190px,#f0f 230px,#ff00df 249px,#ff00c3 270px)"></i><i style="left:112px;top:600px;width:264px;height:2px;background:linear-gradient(90deg,#001eff 0px,#0010ff 54px,#3d00ff 104px,#7900ff 147px,#b900ff 189px,#f0f 229px,#ff00e4 245px,#ff00ca 263px)"></i><i style="left:113px;top:602px;width:257px;height:2px;background:linear-gradient(90deg,#001dff 0px,#000eff 52px,#3800ff 98px,#7800ff 145px,#b800ff 187px,#f0f 228px,#ff00e9 241px,#ff00d2 256px)"></i><i style="left:114px;top:604px;width:250px;height:2px;background:linear-gradient(90deg,#001bff 0px,#010dff 51px,#30f 93px,#7800ff 144px,#b900ff 186px,#fd00ff 226px,#ff00db 249px)"></i><i style="left:115px;top:606px;width:243px;height:2px;background:linear-gradient(90deg,#0019ff 0px,#010bff 49px,#2e00ff 87px,#7800ff 142px,#b900ff 185px,#fe00ff 225px,#ff00e2 243px)"></i><i style="left:117px;top:608px;width:236px;height:2px;background:linear-gradient(90deg,#0017ff 0px,#010aff 47px,#2900ff 81px,#7800ff 141px,#ba00ff 184px,#fe00ff 224px,#ff00ec 236px)"></i><i style="left:118px;top:610px;width:229px;height:2px;background:linear-gradient(90deg,#0015ff 0px,#0109ff 45px,#2400ff 75px,#6800ff 128px,#b000ff 177px,#fe00ff 223px,#ff00f6 229px)"></i><i style="left:119px;top:612px;width:223px;height:2px;background:linear-gradient(90deg,#0014ff 0px,#0008ff 42px,#0c05ff 53px,#1f00ff 69px,#4d00ff 106px,#7e00ff 142px,#bc00ff 183px,#fe00ff 222px)"></i><i style="left:120px;top:614px;width:216px;height:2px;background:linear-gradient(90deg,#0012ff 0px,#0007ff 40px,#0a04ff 49px,#1a00ff 63px,#4900ff 101px,#7900ff 137px,#b500ff 177px,#f400ff 215px)"></i><i style="left:122px;top:616px;width:209px;height:2px;background:linear-gradient(90deg,#0010ff 0px,#0005ff 38px,#0803ff 45px,#1400ff 56px,#4200ff 94px,#7300ff 131px,#ae00ff 171px,#ea00ff 208px)"></i><i style="left:123px;top:618px;width:202px;height:2px;background:linear-gradient(90deg,#000eff 0px,#0004ff 36px,#0702ff 42px,#1000ff 50px,#3900ff 85px,#6f00ff 126px,#a500ff 164px,#e000ff 201px)"></i><i style="left:124px;top:620px;width:195px;height:2px;background:linear-gradient(90deg,#000cff 0px,#0003ff 34px,#0601ff 39px,#3500ff 80px,#6900ff 120px,#9f00ff 158px,#d700ff 194px)"></i><i style="left:126px;top:622px;width:188px;height:2px;background:linear-gradient(90deg,#000bff 0px,#0002ff 31px,#0500ff 36px,#30f 76px,#6400ff 115px,#9800ff 152px,#ce00ff 187px)"></i><i style="left:127px;top:624px;width:180px;height:2px;background:linear-gradient(90deg,#0009ff 0px,#0001ff 29px,#0400ff 33px,#3000ff 72px,#6000ff 110px,#9200ff 146px,#c500ff 180px)"></i><i style="left:129px;top:626px;width:173px;height:2px;background:linear-gradient(90deg,#0007ff 0px,#00f 27px,#0400ff 31px,#2f00ff 69px,#5c00ff 105px,#8c00ff 140px,#bd00ff 173px)"></i><i style="left:130px;top:628px;width:166px;height:2px;background:linear-gradient(90deg,#0005ff 0px,#00f 25px,#0400ff 29px,#2d00ff 65px,#5800ff 100px,#8600ff 134px,#b400ff 166px)"></i><i style="left:132px;top:630px;width:159px;height:2px;background:linear-gradient(90deg,#0003ff 0px,#00f 23px,#0600ff 28px,#50f 96px,#8000ff 128px,#ac00ff 159px)"></i><i style="left:133px;top:632px;width:152px;height:2px;background:linear-gradient(90deg,#0002ff 0px,#00f 20px,#0600ff 26px,#5200ff 91px,#a300ff 151px)"></i><i style="left:135px;top:634px;width:145px;height:2px;background:linear-gradient(90deg,#00f 0px,#00f 18px,#0800ff 26px,#4f00ff 87px,#9b00ff 144px)"></i><i style="left:137px;top:636px;width:137px;height:2px;background:linear-gradient(90deg,#00f 0px,#00f 16px,#0b00ff 26px,#4d00ff 83px,#9400ff 137px)"></i><i style="left:139px;top:638px;width:130px;height:2px;background:linear-gradient(90deg,#00f 0px,#00f 13px,#0f00ff 27px,#4c00ff 80px,#8c00ff 129px)"></i><i style="left:141px;top:640px;width:122px;height:2px;background:linear-gradient(90deg,#00f 0px,#0100ff 11px,#1400ff 29px,#4b00ff 77px,#8500ff 122px)"></i><i style="left:142px;top:642px;width:115px;height:2px;background:linear-gradient(90deg,#00f 0px,#00f 8px,#1900ff 31px,#4a00ff 74px,#7d00ff 114px)"></i><i style="left:145px;top:644px;width:107px;height:2px;background:linear-gradient(90deg,#00f 0px,#00f 5px,#2100ff 36px,#4b00ff 72px,#7600ff 106px)"></i><i style="left:147px;top:646px;width:99px;height:2px;background:linear-gradient(90deg,#00f 0px,#00f 2px,#2c00ff 43px,#7000ff 99px)"></i><i style="left:149px;top:648px;width:91px;height:2px;background:linear-gradient(90deg,#0100ff 0px,#3400ff 47px,#6900ff 91px)"></i><i style="left:152px;top:650px;width:83px;height:2px;background:linear-gradient(90deg,#0400ff 0px,#3200ff 42px,#6100ff 82px)"></i><i style="left:154px;top:652px;width:75px;height:2px;background:linear-gradient(90deg,#0800ff 0px,#3100ff 38px,#5b00ff 74px)"></i><i style="left:157px;top:654px;width:66px;height:2px;background:linear-gradient(90deg,#0c00ff 0px,#50f 66px)"></i><i style="left:160px;top:656px;width:58px;height:2px;background:linear-gradient(90deg,#0f00ff 0px,#4f00ff 57px)"></i><i style="left:163px;top:658px;width:49px;height:2px;background:linear-gradient(90deg,#1300ff 0px,#4900ff 49px)"></i><i style="left:166px;top:660px;width:40px;height:2px;background:linear-gradient(90deg,#1700ff 0px,#4300ff 40px)"></i><i style="left:169px;top:662px;width:32px;height:2px;background:linear-gradient(90deg,#1b00ff 0px,#3d00ff 31px)"></i><i style="left:172px;top:664px;width:23px;height:2px;background:linear-gradient(90deg,#1f00ff 0px,#3800ff 23px)"></i><i style="left:175px;top:666px;width:15px;height:2px;background:linear-gradient(90deg,#20f 0px,#3100ff 14px)"></i></div>
<div id="ins" style="position:absolute;left:1970px;top:224px;width:297px;height:250px;overflow:hidden"><i style="top:0px;height:2px;background:linear-gradient(90deg,#75ffc6 0px,#b8ffc2 124px,#ffffbf 240px,#ffdea5 297px)"></i><i style="top:2px;height:2px;background:linear-gradient(90deg,#76ffc7 0px,#b8ffc3 123px,#ffffc0 239px,#ffdda5 297px)"></i><i style="top:4px;height:2px;background:linear-gradient(90deg,#76ffc8 0px,#b8ffc4 122px,#feffc1 237px,#ffdda5 297px)"></i><i style="top:6px;height:2px;background:linear-gradient(90deg,#77ffc8 0px,#b9ffc5 122px,#ffffc2 236px,#ffdca5 297px)"></i><i style="top:8px;height:2px;background:linear-gradient(90deg,#77ffc9 0px,#b9ffc6 120px,#ffffc2 235px,#ffdba5 297px)"></i><i style="top:10px;height:2px;background:linear-gradient(90deg,#78ffca 0px,#b9ffc7 120px,#ffffc4 233px,#ffdaa6 297px)"></i><i style="top:12px;height:2px;background:linear-gradient(90deg,#78ffcb 0px,#baffc8 119px,#ffffc4 232px,#ffd9a6 297px)"></i><i style="top:14px;height:2px;background:linear-gradient(90deg,#79ffcc 0px,#baffc9 118px,#ffffc5 230px,#ffd9a6 297px)"></i><i style="top:16px;height:2px;background:linear-gradient(90deg,#7affcc 0px,#baffca 117px,#ffffc6 229px,#ffd8a6 297px)"></i><i style="top:18px;height:2px;background:linear-gradient(90deg,#7affcd 0px,#bbffca 117px,#ffffc7 227px,#ffd7a6 297px)"></i><i style="top:20px;height:2px;background:linear-gradient(90deg,#7bffce 0px,#bbffcb 116px,#ffffc8 226px,#ffd6a6 297px)"></i><i style="top:22px;height:2px;background:linear-gradient(90deg,#7bffcf 0px,#bfc 115px,#ffffc9 224px,#ffd5a7 297px)"></i><i style="top:24px;height:2px;background:linear-gradient(90deg,#7cffd0 0px,#bbffcd 114px,#ffffca 223px,#ffd5a7 297px)"></i><i style="top:26px;height:2px;background:linear-gradient(90deg,#7dffd1 0px,#bcffce 114px,#ffffcb 221px,#ffd4a7 297px)"></i><i style="top:28px;height:2px;background:linear-gradient(90deg,#7dffd1 0px,#bcffcf 113px,#ffc 220px,#ffe8b9 257px,#ffd3a7 297px)"></i><i style="top:30px;height:2px;background:linear-gradient(90deg,#7effd2 0px,#bcffd0 112px,#ffffcd 218px,#ffe7b9 258px,#ffd2a7 297px)"></i><i style="top:32px;height:2px;background:linear-gradient(90deg,#7effd3 0px,#bcffd1 111px,#ffffce 217px,#ffe8ba 255px,#ffd1a7 297px)"></i><i style="top:34px;height:2px;background:linear-gradient(90deg,#7fffd4 0px,#bdffd2 111px,#ffffcf 215px,#ffe6ba 256px,#ffd1a8 297px)"></i><i style="top:36px;height:2px;background:linear-gradient(90deg,#80ffd5 0px,#bdffd3 110px,#ffffd0 214px,#ffe6bb 254px,#ffd0a8 297px)"></i><i style="top:38px;height:2px;background:linear-gradient(90deg,#80ffd6 0px,#beffd3 109px,#ffffd1 212px,#ffe5bb 255px,#ffcfa8 297px)"></i><i style="top:40px;height:2px;background:linear-gradient(90deg,#81ffd7 0px,#beffd4 108px,#ffffd2 211px,#ffe6bc 252px,#ffcea8 297px)"></i><i style="top:42px;height:2px;background:linear-gradient(90deg,#81ffd7 0px,#beffd5 107px,#ffffd3 209px,#ffe4bc 253px,#ffcda8 297px)"></i><i style="top:44px;height:2px;background:linear-gradient(90deg,#82ffd8 0px,#bfffd6 107px,#ffffd4 208px,#ffe5bd 251px,#ffcda8 297px)"></i><i style="top:46px;height:2px;background:linear-gradient(90deg,#83ffd9 0px,#bfffd7 106px,#ffffd5 206px,#ffe3bd 252px,#ffcca9 297px)"></i><i style="top:48px;height:2px;background:linear-gradient(90deg,#83ffda 0px,#bfffd8 105px,#ffffd6 205px,#ffe4be 249px,#ffcba9 297px)"></i><i style="top:50px;height:2px;background:linear-gradient(90deg,#84ffdb 0px,#bfffd9 104px,#ffffd7 203px,#ffe2be 250px,#ffcaa9 297px)"></i><i style="top:52px;height:2px;background:linear-gradient(90deg,#84ffdc 0px,#c0ffda 104px,#ffffd8 202px,#ffe3bf 248px,#ffc9a9 297px)"></i><i style="top:54px;height:2px;background:linear-gradient(90deg,#85ffdd 0px,#bfffdb 101px,#ffffd9 201px,#ffe2c0 247px,#ffc9a9 297px)"></i><i style="top:56px;height:2px;background:linear-gradient(90deg,#86ffde 0px,#c1ffdc 102px,#ffffda 199px,#ffe2c1 246px,#ffc8a9 297px)"></i><i style="top:58px;height:2px;background:linear-gradient(90deg,#86ffdf 0px,#c0ffdd 100px,#ffffdb 198px,#ffe2c1 245px,#ffc7aa 297px)"></i><i style="top:60px;height:2px;background:linear-gradient(90deg,#87ffdf 0px,#c2ffde 101px,#ffffdc 196px,#ffe1c1 245px,#ffc6aa 297px)"></i><i style="top:62px;height:2px;background:linear-gradient(90deg,#88ffe0 0px,#c1ffdf 98px,#ffd 195px,#ffe1c2 244px,#ffc6aa 297px)"></i><i style="top:64px;height:2px;background:linear-gradient(90deg,#88ffe1 0px,#c2ffe0 99px,#ffffde 193px,#ffe0c3 243px,#ffc5aa 297px)"></i><i style="top:66px;height:2px;background:linear-gradient(90deg,#89ffe2 0px,#c2ffe1 97px,#ffffdf 192px,#ffe0c3 242px,#ffc4aa 297px)"></i><i style="top:68px;height:2px;background:linear-gradient(90deg,#8affe3 0px,#c2ffe2 97px,#ffffe0 190px,#ffe0c4 241px,#ffc3aa 297px)"></i><i style="top:70px;height:2px;background:linear-gradient(90deg,#8affe4 0px,#c2ffe3 95px,#ffffe1 189px,#ffdfc5 240px,#ffc3ab 297px)"></i><i style="top:72px;height:2px;background:linear-gradient(90deg,#8bffe5 0px,#c3ffe4 96px,#ffffe2 187px,#ffdec5 240px,#ffc2ab 297px)"></i><i style="top:74px;height:2px;background:linear-gradient(90deg,#8bffe6 0px,#c3ffe5 94px,#ffffe3 186px,#ffdec5 239px,#ffc1ab 297px)"></i><i style="top:76px;height:2px;background:linear-gradient(90deg,#8cffe7 0px,#c4ffe6 94px,#ffffe5 184px,#ffdec6 238px,#ffc0ab 297px)"></i><i style="top:78px;height:2px;background:linear-gradient(90deg,#8dffe8 0px,#c4ffe7 93px,#ffffe5 183px,#ffddc7 237px,#ffc0ab 297px)"></i><i style="top:80px;height:2px;background:linear-gradient(90deg,#8dffe9 0px,#c5ffe8 93px,#ffffe7 181px,#ffddc7 237px,#ffbfab 297px)"></i><i style="top:82px;height:2px;background:linear-gradient(90deg,#8effea 0px,#c4ffe9 91px,#ffffe8 180px,#ffddc8 235px,#ffbeac 297px)"></i><i style="top:84px;height:2px;background:linear-gradient(90deg,#8fffeb 0px,#c5ffea 91px,#ffffe9 178px,#ffdcc8 235px,#ffbdac 297px)"></i><i style="top:86px;height:2px;background:linear-gradient(90deg,#8fffec 0px,#c6ffeb 90px,#ffffea 177px,#ffdcc9 234px,#ffbdac 297px)"></i><i style="top:88px;height:2px;background:linear-gradient(90deg,#90ffed 0px,#c6ffec 90px,#ffffeb 175px,#ffdbca 233px,#ffbcac 297px)"></i><i style="top:90px;height:2px;background:linear-gradient(90deg,#91ffee 0px,#c6ffed 88px,#ffffec 174px,#ffdbca 232px,#ffbbac 297px)"></i><i style="top:92px;height:2px;background:linear-gradient(90deg,#92ffef 0px,#c7ffee 88px,#ffffed 172px,#ffdaca 232px,#ffbaac 297px)"></i><i style="top:94px;height:2px;background:linear-gradient(90deg,#92fff0 0px,#c7ffef 87px,#ffe 171px,#ffdacb 230px,#ffbaad 297px)"></i><i style="top:96px;height:2px;background:linear-gradient(90deg,#93fff1 0px,#c7fff0 86px,#ffffef 169px,#ffd9cc 230px,#ffb9ad 297px)"></i><i style="top:98px;height:2px;background:linear-gradient(90deg,#94fff1 0px,#c7fff1 85px,#fffff0 168px,#ffd9cc 229px,#ffb8ad 297px)"></i><i style="top:100px;height:2px;background:linear-gradient(90deg,#94fff2 0px,#c8fff2 85px,#fffff1 166px,#ffd8cc 229px,#ffb7ad 297px)"></i><i style="top:102px;height:2px;background:linear-gradient(90deg,#95fff3 0px,#c9fff3 84px,#fffff3 165px,#ffd8ce 227px,#ffb7ad 297px)"></i><i style="top:104px;height:2px;background:linear-gradient(90deg,#96fff4 0px,#c9fff4 83px,#fffff4 163px,#ffd8ce 227px,#ffb6ad 297px)"></i><i style="top:106px;height:2px;background:linear-gradient(90deg,#96fff6 0px,#cafff5 83px,#fffff5 162px,#ffd8cf 225px,#ffb5ad 297px)"></i><i style="top:108px;height:2px;background:linear-gradient(90deg,#97fff7 0px,#cafff6 82px,#fffff6 160px,#ffd7cf 225px,#ffb4ae 297px)"></i><i style="top:110px;height:2px;background:linear-gradient(90deg,#98fff8 0px,#cafff7 81px,#fffff7 159px,#ffd7d0 223px,#ffb4ae 297px)"></i><i style="top:112px;height:2px;background:linear-gradient(90deg,#99fff9 0px,#c9fff8 78px,#fffff8 158px,#ffd6d0 223px,#ffb3ae 297px)"></i><i style="top:114px;height:2px;background:linear-gradient(90deg,#99fffa 0px,#cbfff9 80px,#fffff9 156px,#ffd6d1 222px,#ffb2ae 297px)"></i><i style="top:116px;height:2px;background:linear-gradient(90deg,#9afffb 0px,#c9fffb 76px,#fffffa 155px,#ffd6d2 221px,#ffb2ae 297px)"></i><i style="top:118px;height:2px;background:linear-gradient(90deg,#9bfffc 0px,#ccfffc 78px,#fffffc 153px,#ffd5d2 220px,#ffb1ae 297px)"></i><i style="top:120px;height:2px;background:linear-gradient(90deg,#9bfffd 0px,#cbfffd 75px,#fffffc 152px,#ffd5d3 219px,#ffb0af 297px)"></i><i style="top:122px;height:2px;background:linear-gradient(90deg,#9cfffe 0px,#cdfffe 77px,#fffffe 150px,#ffd4d3 219px,#ffafaf 297px)"></i><i style="top:124px;height:2px;background:linear-gradient(90deg,#9dffff 0px,#cbffff 73px,#fff 149px,#ffe9e9 182px,#ffd4d4 218px,#ffafaf 297px)"></i><i style="top:126px;height:2px;background:linear-gradient(90deg,#9dfeff 0px,#ccfeff 74px,#fffeff 149px,#ffe8e9 182px,#ffd3d4 218px,#ffaeaf 297px)"></i><i style="top:128px;height:2px;background:linear-gradient(90deg,#9dfdff 0px,#ccfdff 75px,#fffdff 149px,#ffe7e9 182px,#ffd2d4 218px,#ffadaf 297px)"></i><i style="top:130px;height:2px;background:linear-gradient(90deg,#9dfcff 0px,#cdfcff 76px,#fffcff 149px,#ffe6e9 182px,#ffd1d4 218px,#ffadaf 297px)"></i><i style="top:132px;height:2px;background:linear-gradient(90deg,#9dfbff 0px,#cdfbff 76px,#fffaff 149px,#ffd0d4 218px,#ffacb0 297px)"></i><i style="top:134px;height:2px;background:linear-gradient(90deg,#9dfaff 0px,#cdfaff 76px,#fff9ff 149px,#ffcfd4 218px,#ffabb0 297px)"></i><i style="top:136px;height:2px;background:linear-gradient(90deg,#9ef9ff 0px,#cdf9ff 76px,#fff8ff 149px,#ffcfd5 218px,#ffabb0 297px)"></i><i style="top:138px;height:2px;background:linear-gradient(90deg,#9ef8ff 0px,#cdf7ff 76px,#fff7ff 149px,#ffcdd4 219px,#ffaab0 297px)"></i><i style="top:140px;height:2px;background:linear-gradient(90deg,#9ef7ff 0px,#cbf6ff 73px,#fff6ff 150px,#ffcdd5 218px,#ffa9b0 297px)"></i><i style="top:142px;height:2px;background:linear-gradient(90deg,#9ef6ff 0px,#ccf5ff 74px,#fff5ff 150px,#ffccd5 218px,#ffa8b0 297px)"></i><i style="top:144px;height:2px;background:linear-gradient(90deg,#9ef5ff 0px,#cdf4ff 75px,#fff4ff 150px,#ffcbd5 218px,#ffa8b0 297px)"></i><i style="top:146px;height:2px;background:linear-gradient(90deg,#9ef4ff 0px,#cdf3ff 76px,#fff2ff 150px,#ffcad5 218px,#ffa7b1 297px)"></i><i style="top:148px;height:2px;background:linear-gradient(90deg,#9ef3ff 0px,#cdf2ff 76px,#fff1ff 150px,#ffc9d5 218px,#ffa6b1 297px)"></i><i style="top:150px;height:2px;background:linear-gradient(90deg,#9ef2ff 0px,#cef1ff 77px,#fff0ff 150px,#ffc8d5 219px,#ffa6b1 297px)"></i><i style="top:152px;height:2px;background:linear-gradient(90deg,#9ef1ff 0px,#cef0ff 77px,#ffefff 150px,#ffc7d5 219px,#ffa5b1 297px)"></i><i style="top:154px;height:2px;background:linear-gradient(90deg,#9ef0ff 0px,#ceefff 77px,#fef 150px,#ffc6d5 219px,#ffa4b1 297px)"></i><i style="top:156px;height:2px;background:linear-gradient(90deg,#9eefff 0px,#ceeeff 77px,#ffedff 150px,#ffc6d5 219px,#ffa4b1 297px)"></i><i style="top:158px;height:2px;background:linear-gradient(90deg,#9feeff 0px,#ccedff 74px,#ffecff 151px,#ffc5d5 219px,#ffa3b1 297px)"></i><i style="top:160px;height:2px;background:linear-gradient(90deg,#9fedff 0px,#cdecff 75px,#ffebff 151px,#ffc4d6 219px,#ffa2b2 297px)"></i><i style="top:162px;height:2px;background:linear-gradient(90deg,#9fecff 0px,#cdebff 76px,#ffeaff 151px,#ffc3d6 219px,#ffa1b2 297px)"></i><i style="top:164px;height:2px;background:linear-gradient(90deg,#9febff 0px,#cdeaff 76px,#ffe9ff 151px,#ffc2d6 219px,#ffa1b2 297px)"></i><i style="top:166px;height:2px;background:linear-gradient(90deg,#9feaff 0px,#cee9ff 77px,#ffe8ff 151px,#ffc2d6 219px,#ffa0b2 297px)"></i><i style="top:168px;height:2px;background:linear-gradient(90deg,#9fe9ff 0px,#cee8ff 77px,#ffe7ff 151px,#ffc1d6 219px,#ff9fb2 297px)"></i><i style="top:170px;height:2px;background:linear-gradient(90deg,#9fe8ff 0px,#cee7ff 77px,#ffe6ff 151px,#ffbfd6 220px,#ff9fb2 297px)"></i><i style="top:172px;height:2px;background:linear-gradient(90deg,#9fe7ff 0px,#cee6ff 77px,#ffe4ff 151px,#ffbfd6 220px,#ff9eb2 297px)"></i><i style="top:174px;height:2px;background:linear-gradient(90deg,#9fe6ff 0px,#cee5ff 77px,#ffe3ff 151px,#ffbed6 220px,#ff9db3 297px)"></i><i style="top:176px;height:2px;background:linear-gradient(90deg,#9fe5ff 0px,#cde4ff 75px,#ffe2ff 152px,#ffbdd6 220px,#ff9db3 297px)"></i><i style="top:178px;height:2px;background:linear-gradient(90deg,#9fe4ff 0px,#cde3ff 76px,#ffe1ff 152px,#ffbcd6 220px,#ff9cb3 297px)"></i><i style="top:180px;height:2px;background:linear-gradient(90deg,#9fe3ff 0px,#cde2ff 76px,#ffe0ff 152px,#ffbbd6 220px,#ff9bb3 297px)"></i><i style="top:182px;height:2px;background:linear-gradient(90deg,#a0e2ff 0px,#cee1ff 77px,#ffdfff 152px,#ffbbd6 220px,#ff9bb3 297px)"></i><i style="top:184px;height:2px;background:linear-gradient(90deg,#a0e1ff 0px,#cfe0ff 78px,#ffdeff 152px,#ffbad6 220px,#ff9ab3 297px)"></i><i style="top:186px;height:2px;background:linear-gradient(90deg,#a0e0ff 0px,#cfdfff 78px,#fdf 152px,#ffb9d7 220px,#ff99b3 297px)"></i><i style="top:188px;height:2px;background:linear-gradient(90deg,#a0dfff 0px,#cfdeff 78px,#ffdcff 152px,#ffb8d7 220px,#ff99b4 297px)"></i><i style="top:190px;height:2px;background:linear-gradient(90deg,#a0deff 0px,#cfddff 78px,#ffdbff 152px,#ffb7d6 221px,#ff98b4 297px)"></i><i style="top:192px;height:2px;background:linear-gradient(90deg,#a0ddff 0px,#cddcff 75px,#ffdaff 153px,#ffb7d7 220px,#ff97b4 297px)"></i><i style="top:194px;height:2px;background:linear-gradient(90deg,#a0dcff 0px,#cddbff 76px,#ffd9ff 153px,#ffb6d7 220px,#ff97b4 297px)"></i><i style="top:196px;height:2px;background:linear-gradient(90deg,#a0dbff 0px,#cddaff 76px,#ffd8ff 153px,#ffb5d7 220px,#ff96b4 297px)"></i><i style="top:198px;height:2px;background:linear-gradient(90deg,#a0daff 0px,#ced9ff 77px,#ffd7ff 153px,#ffb4d7 220px,#ff95b4 297px)"></i><i style="top:200px;height:2px;background:linear-gradient(90deg,#a0d9ff 0px,#cfd8ff 78px,#ffd6ff 153px,#ffb3d7 220px,#ff95b4 297px)"></i><i style="top:202px;height:2px;background:linear-gradient(90deg,#a0d8ff 0px,#cfd7ff 78px,#ffd5ff 153px,#ffb3d8 220px,#ff94b5 297px)"></i><i style="top:204px;height:2px;background:linear-gradient(90deg,#a0d8ff 0px,#cfd6ff 78px,#ffd4ff 153px,#ffb1d7 221px,#ff93b5 297px)"></i><i style="top:206px;height:2px;background:linear-gradient(90deg,#a0d7ff 0px,#cfd5ff 78px,#ffd3ff 153px,#ffb1d7 221px,#ff93b5 297px)"></i><i style="top:208px;height:2px;background:linear-gradient(90deg,#a1d6ff 0px,#cfd4ff 78px,#ffd2ff 153px,#ffb0d7 221px,#ff92b5 297px)"></i><i style="top:210px;height:2px;background:linear-gradient(90deg,#a1d5ff 0px,#cdd3ff 76px,#ffd1ff 154px,#ffafd8 221px,#ff92b5 297px)"></i><i style="top:212px;height:2px;background:linear-gradient(90deg,#a1d4ff 0px,#cdd2ff 76px,#ffd0ff 154px,#ffaed8 221px,#ff91b5 297px)"></i><i style="top:214px;height:2px;background:linear-gradient(90deg,#a1d3ff 0px,#ced1ff 77px,#ffcfff 154px,#ffaed8 221px,#ff90b5 297px)"></i><i style="top:216px;height:2px;background:linear-gradient(90deg,#a1d2ff 0px,#cfd0ff 78px,#ffceff 154px,#ffadd8 221px,#ff90b6 297px)"></i><i style="top:218px;height:2px;background:linear-gradient(90deg,#a1d1ff 0px,#cfcfff 79px,#ffcdff 154px,#ffacd8 221px,#ff8fb6 297px)"></i><i style="top:220px;height:2px;background:linear-gradient(90deg,#a1d0ff 0px,#cfceff 79px,#fcf 154px,#ffabd8 221px,#ff8eb6 297px)"></i><i style="top:222px;height:2px;background:linear-gradient(90deg,#a1cfff 0px,#cfcdff 79px,#ffcbff 154px,#ffaad8 222px,#ff8eb6 297px)"></i><i style="top:224px;height:2px;background:linear-gradient(90deg,#a1ceff 0px,#cfccff 79px,#ffcaff 154px,#ffa9d8 222px,#ff8db6 297px)"></i><i style="top:226px;height:2px;background:linear-gradient(90deg,#a1cdff 0px,#cfcbff 79px,#ffc9ff 154px,#ffa8d8 222px,#ff8cb6 297px)"></i><i style="top:228px;height:2px;background:linear-gradient(90deg,#a1cdff 0px,#cdcbff 76px,#ffc8ff 155px,#ffa8d8 222px,#ff8cb6 297px)"></i><i style="top:230px;height:2px;background:linear-gradient(90deg,#a1ccff 0px,#cecaff 77px,#ffc7ff 155px,#ffa7d8 222px,#ff8bb7 297px)"></i><i style="top:232px;height:2px;background:linear-gradient(90deg,#a1cbff 0px,#cfc9ff 78px,#ffc6ff 155px,#ffa6d8 222px,#ff8bb7 297px)"></i><i style="top:234px;height:2px;background:linear-gradient(90deg,#a2caff 0px,#cfc8ff 79px,#ffc5ff 155px,#ffa5d8 222px,#ff8ab7 297px)"></i><i style="top:236px;height:2px;background:linear-gradient(90deg,#a2c9ff 0px,#cfc7ff 79px,#ffc4ff 155px,#ffa5d8 222px,#ff89b7 297px)"></i><i style="top:238px;height:2px;background:linear-gradient(90deg,#a2c8ff 0px,#cfc6ff 79px,#ffc3ff 155px,#ffa4d9 222px,#ff89b7 297px)"></i><i style="top:240px;height:2px;background:linear-gradient(90deg,#a2c7ff 0px,#cfc5ff 79px,#ffc2ff 155px,#ffa3d9 222px,#ff88b7 297px)"></i><i style="top:242px;height:2px;background:linear-gradient(90deg,#a2c6ff 0px,#cfc4ff 79px,#ffc1ff 155px,#ffa2d8 223px,#ff87b7 297px)"></i><i style="top:244px;height:2px;background:linear-gradient(90deg,#a2c6ff 0px,#cec3ff 76px,#ffc0ff 156px,#ffa2d9 222px,#ff87b8 297px)"></i><i style="top:246px;height:2px;background:linear-gradient(90deg,#a2c5ff 0px,#cec2ff 77px,#ffbfff 156px,#ffa1d9 222px,#ff86b8 297px)"></i><i style="top:248px;height:2px;background:linear-gradient(90deg,#a2c4ff 0px,#cfc1ff 78px,#ffbfff 156px,#ffa0d9 222px,#ff85b8 297px)"></i></div>
<svg width="2293" height="1392" viewBox="0 0 2293 1392">
<rect x="0" y="0" width="2293" height="31" fill="#e9f2f9"/>
<defs><linearGradient id="tbg" x1="0" x2="1"><stop offset="0" stop-color="#f1f6fa"/><stop offset=".5" stop-color="#e6f0f7"/><stop offset="1" stop-color="#eef5fa"/></linearGradient></defs>
<rect x="0" y="0" width="2293" height="31" fill="url(#tbg)"/>
<rect x="0" y="0" width="2293" height="1" fill="#6f7479"/>
<rect x="13.9" y="7.8" width="6.2" height="6.2" rx="1.2" fill="#f7c31d" transform="rotate(45 17.0 10.9)"/>
<rect x="9.3" y="12.4" width="6.2" height="6.2" rx="1.2" fill="#2db3f0" transform="rotate(45 12.4 15.5)"/>
<rect x="18.5" y="12.4" width="6.2" height="6.2" rx="1.2" fill="#2cc72c" transform="rotate(45 21.6 15.5)"/>
<rect x="13.9" y="17.0" width="6.2" height="6.2" rx="1.2" fill="#f0305c" transform="rotate(45 17.0 20.1)"/>
<text x="31.0" y="20.0" font-size="12.42" fill="#111" textLength="387.0" lengthAdjust="spacingAndGlyphs" >Calman 2025 Calman Ultimate for Business 62 Days Remaining  - Untitled</text>
<path d="M2173 15.5h10" stroke="#111" stroke-width="1"/>
<rect x="2218.5" y="10.5" width="9" height="9" fill="none" stroke="#111" stroke-width="1"/>
<path d="M2264 10.5l10 10M2274 10.5l-10 10" stroke="#111" stroke-width="1.1"/>
<rect x="0" y="31" width="2293" height="65" fill="#222"/>
<defs><linearGradient id="lg" x1="0" x2="0" y1="0" y2="1"><stop offset="0" stop-color="#e24848"/><stop offset=".45" stop-color="#d82a2a"/><stop offset="1" stop-color="#cc1212"/></linearGradient><linearGradient id="lgc" x1="0" x2="0" y1="0" y2="1"><stop offset="0" stop-color="#c21018"/><stop offset="1" stop-color="#e24444"/></linearGradient></defs>
<path d="M1.5 31H183.5V57a3.5 3.5 0 0 1-3.5 3.5H5a3.5 3.5 0 0 1-3.5-3.5Z" fill="url(#lg)" stroke="#9a8a8a" stroke-opacity=".7" stroke-width="1"/>
<path d="M35.4 34.7L45.9 45.2L35.4 55.7L24.9 45.2Z" fill="none" stroke="#fff" stroke-width="2.600" stroke-linejoin="round"/>
<path d="M35.40 37.15L39.15 40.90L35.40 44.65L31.65 40.90Z" fill="#fff"/>
<path d="M39.70 41.45L43.45 45.20L39.70 48.95L35.95 45.20Z" fill="#fff"/>
<path d="M35.40 45.75L39.15 49.50L35.40 53.25L31.65 49.50Z" fill="#fff"/>
<path d="M31.10 41.45L34.85 45.20L31.10 48.95L27.35 45.20Z" fill="#fff"/>
<g fill="none" stroke="#fff" stroke-width="2.600"><path d="M61.39 42.03A5.400 5.400 0 1 0 61.39 48.97"/><circle cx="69.300" cy="45.500" r="5.400"/><path d="M74.750 39V52"/><path d="M81.100 33.100V52"/><path d="M86.850 39V52M86.850 44.900A4.780 4.780 0 0 1 96.400 44.900V52M96.400 44.900A4.750 4.750 0 0 1 105.900 44.900V52"/><circle cx="114.950" cy="45.500" r="5.400"/><path d="M120.350 39V52"/><path d="M125.400 39V52M125.400 44.800A4.650 4.650 0 0 1 134.700 44.800V52"/></g>
<circle cx="166.500" cy="45" r="9.500" fill="url(#lgc)"/>
<path d="M161.700 43.500h9.800l-4.900 5.500z" fill="#fff"/>
<defs><linearGradient id="rb" x1="0" x2="1"><stop offset="0" stop-color="#f00"/><stop offset=".04" stop-color="#ff0008"/><stop offset=".2" stop-color="#ff00d8"/><stop offset=".31" stop-color="#8a2cff"/><stop offset=".4" stop-color="#0030ff"/><stop offset=".495" stop-color="#009088"/><stop offset=".595" stop-color="#00e000"/><stop offset=".716" stop-color="#98e400"/><stop offset=".8" stop-color="#ffe800"/><stop offset=".87" stop-color="#ff9000"/><stop offset="1" stop-color="#f00"/></linearGradient></defs>
<rect x="191" y="43" width="2102" height="6" fill="url(#rb)"/>
<rect x="191" y="43" width="2102" height="1" fill="#222" opacity=".45"/><rect x="191" y="48" width="2102" height="1" fill="#222" opacity=".45"/>
<defs><linearGradient id="gbtn" x1="0" x2="0" y1="0" y2="1"><stop offset="0" stop-color="#9a9a9a"/><stop offset=".5" stop-color="#6c6c6c"/><stop offset="1" stop-color="#555"/></linearGradient><linearGradient id="gcir" x1="0" x2="0" y1="0" y2="1"><stop offset="0" stop-color="#555"/><stop offset="1" stop-color="#8a8a8a"/></linearGradient><linearGradient id="gtab" x1="0" x2="0" y1="0" y2="1"><stop offset="0" stop-color="#3c3c3c"/><stop offset="1" stop-color="#2a2a2a"/></linearGradient><linearGradient id="gdd" x1="0" x2="0" y1="0" y2="1"><stop offset="0" stop-color="#474747"/><stop offset="1" stop-color="#727272"/></linearGradient><linearGradient id="gddc" x1="0" x2="0" y1="0" y2="1"><stop offset="0" stop-color="#3e3e3e"/><stop offset="1" stop-color="#777"/></linearGradient></defs>
<path d="M0 66.5H24a3.5 3.5 0 0 1 3.5 3.5V89.500a3.500 3.500 0 0 1-3.500 3.500H0Z" fill="url(#gbtn)" stroke="#bbb" stroke-width="1"/>
<circle cx="13.5" cy="80" r="9.5" fill="url(#gcir)"/>
<path d="M10.5 74.500v10l6-5z" fill="#fff"/>
<path d="M30.500 96V70a3.500 3.500 0 0 1 3.500-3.500H118a3.500 3.500 0 0 1 3.500 3.500V96" fill="url(#gtab)" stroke="#777" stroke-width="1"/>
<path d="M88.500 67V96" stroke="#777" stroke-width="1"/>
<text x="36.0" y="86.0" font-size="11.9" fill="#d8d8d8" textLength="47.5" lengthAdjust="spacingAndGlyphs" >History 1</text>
<circle cx="104" cy="82" r="9" fill="#333"/>
<text x="104.0" y="86.5" font-size="12.42" fill="#777" text-anchor="middle" >+</text>
<path d="M1800.5 96V70a4 4 0 0 1 4-4H1939.0a4 4 0 0 1 4 4V96Z" fill="url(#gdd)"/>
<path d="M1800.5 96V69.500a3.500 3.500 0 0 1 3.500-2.500H1806.0V96Z" fill="#00e400"/>
<circle cx="1887.5" cy="81" r="9.500" fill="url(#gddc)"/>
<path d="M1882.2 79h10.500l-5.250 5.500z" fill="#fff"/>
<text x="1808.5" y="78.0" font-size="11.9" fill="#e8e8e8" textLength="65.5" lengthAdjust="spacingAndGlyphs" >X-Rite i1Pro 3</text>
<text x="1808.5" y="91.5" font-size="11.9" fill="#e8e8e8" textLength="56.0" lengthAdjust="spacingAndGlyphs" >Direct View</text>
<path d="M1906.500 69V96" stroke="#3a3a3a" stroke-width="1.5"/>
<circle cx="1927.500" cy="81" r="12.800" fill="#0000f8" stroke="#e8e8ff" stroke-width="1"/>
<text x="1927.5" y="84.5" font-size="9.83" fill="#fff" textLength="15.5" lengthAdjust="spacingAndGlyphs" font-weight="bold" text-anchor="middle" >436</text>
<path d="M1948.5 96V70a4 4 0 0 1 4-4H2075.0a4 4 0 0 1 4 4V96Z" fill="url(#gdd)"/>
<path d="M1948.5 96V69.500a3.500 3.500 0 0 1 3.500-2.500H1954.0V96Z" fill="#00e400"/>
<circle cx="2062.5" cy="81" r="9.500" fill="url(#gddc)"/>
<path d="M2057.2 79h10.500l-5.250 5.500z" fill="#fff"/>
<text x="1957.5" y="78.0" font-size="11.9" fill="#e8e8e8" textLength="64.5" lengthAdjust="spacingAndGlyphs" >Mobile Forge</text>
<path d="M2084.5 96V70a4 4 0 0 1 4-4H2223.5a4 4 0 0 1 4 4V96Z" fill="url(#gdd)"/>
<path d="M2084.5 96V69.500a3.500 3.500 0 0 1 3.500-2.500H2090.0V96Z" fill="#e8e800"/>
<circle cx="2211.5" cy="81" r="9.500" fill="url(#gddc)"/>
<path d="M2206.2 79h10.500l-5.250 5.500z" fill="#fff"/>
<text x="2093.5" y="78.0" font-size="11.9" fill="#e8e8e8" textLength="105.0" lengthAdjust="spacingAndGlyphs" >Direct Display Control</text>
<rect x="2231.500" y="66.500" width="33" height="27" rx="3.500" fill="url(#gbtn)" stroke="#aaa" stroke-width="1"/>
<circle cx="2248" cy="80" r="9.500" fill="url(#gcir)"/>
<path d="M2254.57 79.85 L2254.57 81.15 L2252.59 81.89 L2252.23 82.76 L2253.10 84.69 L2252.19 85.60 L2250.26 84.73 L2249.39 85.09 L2248.65 87.07 L2247.35 87.07 L2246.61 85.09 L2245.74 84.73 L2243.81 85.60 L2242.90 84.69 L2243.77 82.76 L2243.41 81.89 L2241.43 81.15 L2241.43 79.85 L2243.41 79.11 L2243.77 78.24 L2242.90 76.31 L2243.81 75.40 L2245.74 76.27 L2246.61 75.91 L2247.35 73.93 L2248.65 73.93 L2249.39 75.91 L2250.26 76.27 L2252.19 75.40 L2253.10 76.31 L2252.23 78.24 L2252.59 79.11 Z M2248.00 78.10 a2.400 2.400 0 1 0 0.010 0Z" fill="#ddd" fill-rule="evenodd"/>
<path d="M2293 66.500H2269.500a3.500 3.500 0 0 0-3.500 3.500V89.500a3.500 3.500 0 0 0 3.500 3.500H2293Z" fill="url(#gbtn)" stroke="#aaa" stroke-width="1"/>
<circle cx="2279.500" cy="80" r="9.500" fill="url(#gcir)"/>
<path d="M2282.500 74.500v10l-6-5z" fill="#fff"/>
<defs><linearGradient id="bw" x1="0" x2="1"><stop offset="0" stop-color="#fff"/><stop offset=".42" stop-color="#fff"/><stop offset=".8" stop-color="#bdbdbd"/><stop offset="1" stop-color="#6e6e6e"/></linearGradient><linearGradient id="bsh" x1="0" x2="1"><stop offset="0" stop-color="#fff" stop-opacity=".35"/><stop offset=".12" stop-color="#fff" stop-opacity="0"/><stop offset=".5" stop-color="#000" stop-opacity="0"/><stop offset="1" stop-color="#000" stop-opacity=".55"/></linearGradient><linearGradient id="bwv" x1="0" x2="0" y1="0" y2="1"><stop offset="0" stop-color="#fff"/><stop offset=".4" stop-color="#fff"/><stop offset=".8" stop-color="#c4c4c4"/><stop offset="1" stop-color="#7a7a7a"/></linearGradient></defs>
<text x="35.0" y="232.5" font-size="56.92" fill="#f2f2f2" textLength="264.0" lengthAdjust="spacingAndGlyphs" >Colorspace</text>
<text x="259.0" y="301.0" font-size="19.66" fill="#d4d4d4" textLength="108.5" lengthAdjust="spacingAndGlyphs" text-anchor="middle" >DeltaE 2000</text>
<rect x="29" y="308" width="460" height="566" fill="#222"/>
<rect x="88.0" y="309" width="2" height="565" fill="#8c8c8c"/>
<rect x="149.4" y="309" width="2" height="565" fill="#8c8c8c"/>
<rect x="210.7" y="309" width="2" height="565" fill="#8c8c8c"/>
<rect x="272.1" y="309" width="2" height="565" fill="#8c8c8c"/>
<rect x="333.4" y="309" width="2" height="565" fill="#8c8c8c"/>
<rect x="394.7" y="309" width="2" height="565" fill="#8c8c8c"/>
<rect x="456.1" y="309" width="2" height="565" fill="#8c8c8c"/>
<rect x="29" y="308" width="460" height="567" fill="none" stroke="#8c8c8c" stroke-width="2"/>
<rect x="30" y="314" width="78.3" height="55.500" fill="#000"/>
<rect x="30" y="316" width="76.3" height="52" fill="url(#bw)"/>
<rect x="30" y="385" width="28.4" height="55.500" fill="#000"/>
<rect x="30" y="387" width="26.4" height="52" fill="#c4c400"/>
<rect x="30" y="387" width="26.4" height="52" fill="url(#bsh)"/>
<rect x="30" y="456" width="34.4" height="55.500" fill="#000"/>
<rect x="30" y="458" width="32.4" height="52" fill="#c000c4"/>
<rect x="30" y="458" width="32.4" height="52" fill="url(#bsh)"/>
<rect x="30" y="527" width="22.9" height="55.500" fill="#000"/>
<rect x="30" y="529" width="20.9" height="52" fill="#00c0c4"/>
<rect x="30" y="529" width="20.9" height="52" fill="url(#bsh)"/>
<rect x="30" y="598" width="18.8" height="55.500" fill="#000"/>
<rect x="30" y="600" width="16.8" height="52" fill="#0000c8"/>
<rect x="30" y="600" width="16.8" height="52" fill="url(#bsh)"/>
<rect x="30" y="669" width="21.4" height="55.500" fill="#000"/>
<rect x="30" y="671" width="19.4" height="52" fill="#00c400"/>
<rect x="30" y="671" width="19.4" height="52" fill="url(#bsh)"/>
<rect x="30" y="740" width="59.1" height="55.500" fill="#000"/>
<rect x="30" y="742" width="57.1" height="52" fill="#c40000"/>
<rect x="30" y="742" width="57.1" height="52" fill="url(#bsh)"/>
<rect x="30" y="811" width="58.0" height="55.500" fill="#000"/>
<rect x="30" y="813" width="56.0" height="52" fill="#c8c8c8"/>
<rect x="30" y="813" width="56.0" height="52" fill="url(#bsh)"/>
<text x="27.9" y="904.5" font-size="19.66" fill="#d4d4d4" text-anchor="middle" >0</text>
<rect x="28.0" y="875.500" width="2" height="8" fill="#ccc"/>
<text x="89.2" y="904.5" font-size="19.66" fill="#d4d4d4" text-anchor="middle" >2</text>
<rect x="88.0" y="875.500" width="2" height="8" fill="#ccc"/>
<text x="150.6" y="904.5" font-size="19.66" fill="#d4d4d4" text-anchor="middle" >4</text>
<rect x="149.4" y="875.500" width="2" height="8" fill="#ccc"/>
<text x="211.9" y="904.5" font-size="19.66" fill="#d4d4d4" text-anchor="middle" >6</text>
<rect x="210.7" y="875.500" width="2" height="8" fill="#ccc"/>
<text x="273.3" y="904.5" font-size="19.66" fill="#d4d4d4" text-anchor="middle" >8</text>
<rect x="272.1" y="875.500" width="2" height="8" fill="#ccc"/>
<text x="334.6" y="904.5" font-size="19.66" fill="#d4d4d4" text-anchor="middle" >10</text>
<rect x="333.4" y="875.500" width="2" height="8" fill="#ccc"/>
<text x="395.9" y="904.5" font-size="19.66" fill="#d4d4d4" text-anchor="middle" >12</text>
<rect x="394.7" y="875.500" width="2" height="8" fill="#ccc"/>
<text x="457.3" y="904.5" font-size="19.66" fill="#d4d4d4" text-anchor="middle" >14</text>
<rect x="456.1" y="875.500" width="2" height="8" fill="#ccc"/>
<text x="642.0" y="207.0" font-size="20.7" fill="#d4d4d4" text-anchor="middle" >Delta L</text>
<rect x="561" y="214" width="199" height="436" fill="#222"/>
<rect x="553" y="215" width="7" height="2" fill="#ddd"/>
<text x="552.5" y="223.3" font-size="19.66" fill="#d4d4d4" text-anchor="end" >15</text>
<rect x="561" y="288" width="199" height="2" fill="#8c8c8c"/>
<rect x="553" y="288" width="7" height="2" fill="#ddd"/>
<text x="552.5" y="296.3" font-size="19.66" fill="#d4d4d4" text-anchor="end" >10</text>
<rect x="561" y="359" width="199" height="2" fill="#8c8c8c"/>
<rect x="553" y="359" width="7" height="2" fill="#ddd"/>
<text x="552.5" y="367.3" font-size="19.66" fill="#d4d4d4" text-anchor="end" >5</text>
<rect x="561" y="432" width="199" height="2" fill="#8c8c8c"/>
<rect x="553" y="432" width="7" height="2" fill="#ddd"/>
<text x="552.5" y="440.3" font-size="19.66" fill="#d4d4d4" text-anchor="end" >0</text>
<rect x="561" y="505" width="199" height="2" fill="#8c8c8c"/>
<rect x="553" y="505" width="7" height="2" fill="#ddd"/>
<text x="552.5" y="513.3" font-size="19.66" fill="#d4d4d4" text-anchor="end" >-5</text>
<rect x="561" y="578" width="199" height="2" fill="#8c8c8c"/>
<rect x="553" y="578" width="7" height="2" fill="#ddd"/>
<text x="552.5" y="586.3" font-size="19.66" fill="#d4d4d4" text-anchor="end" >-10</text>
<rect x="553" y="649" width="7" height="2" fill="#ddd"/>
<text x="552.5" y="657.3" font-size="19.66" fill="#d4d4d4" text-anchor="end" >-15</text>
<rect x="561" y="214" width="199" height="435.500" fill="none" stroke="#8c8c8c" stroke-width="2"/>
<rect x="560" y="213" width="201" height="4" fill="#8c8c8c"/>
<rect x="560" y="648" width="201" height="3" fill="#8c8c8c"/>
<rect x="560" y="651" width="2" height="7.500" fill="#ccc"/><rect x="759" y="651" width="2" height="7.500" fill="#ccc"/>
<text x="660.5" y="670.5" font-size="19.66" fill="#d4d4d4" text-anchor="middle" >100W</text>
<rect x="581" y="432" width="159" height="2" fill="#000"/>
<text x="913.5" y="207.0" font-size="20.7" fill="#d4d4d4" text-anchor="middle" >Delta C</text>
<rect x="832" y="214" width="199" height="436" fill="#222"/>
<rect x="824" y="215" width="7" height="2" fill="#ddd"/>
<text x="823.5" y="223.3" font-size="19.66" fill="#d4d4d4" text-anchor="end" >15</text>
<rect x="832" y="288" width="199" height="2" fill="#8c8c8c"/>
<rect x="824" y="288" width="7" height="2" fill="#ddd"/>
<text x="823.5" y="296.3" font-size="19.66" fill="#d4d4d4" text-anchor="end" >10</text>
<rect x="832" y="359" width="199" height="2" fill="#8c8c8c"/>
<rect x="824" y="359" width="7" height="2" fill="#ddd"/>
<text x="823.5" y="367.3" font-size="19.66" fill="#d4d4d4" text-anchor="end" >5</text>
<rect x="832" y="432" width="199" height="2" fill="#8c8c8c"/>
<rect x="824" y="432" width="7" height="2" fill="#ddd"/>
<text x="823.5" y="440.3" font-size="19.66" fill="#d4d4d4" text-anchor="end" >0</text>
<rect x="832" y="505" width="199" height="2" fill="#8c8c8c"/>
<rect x="824" y="505" width="7" height="2" fill="#ddd"/>
<text x="823.5" y="513.3" font-size="19.66" fill="#d4d4d4" text-anchor="end" >-5</text>
<rect x="832" y="578" width="199" height="2" fill="#8c8c8c"/>
<rect x="824" y="578" width="7" height="2" fill="#ddd"/>
<text x="823.5" y="586.3" font-size="19.66" fill="#d4d4d4" text-anchor="end" >-10</text>
<rect x="824" y="649" width="7" height="2" fill="#ddd"/>
<text x="823.5" y="657.3" font-size="19.66" fill="#d4d4d4" text-anchor="end" >-15</text>
<rect x="832" y="214" width="199" height="435.500" fill="none" stroke="#8c8c8c" stroke-width="2"/>
<rect x="831" y="213" width="201" height="4" fill="#8c8c8c"/>
<rect x="831" y="648" width="201" height="3" fill="#8c8c8c"/>
<rect x="831" y="651" width="2" height="7.500" fill="#ccc"/><rect x="1030" y="651" width="2" height="7.500" fill="#ccc"/>
<text x="931.5" y="670.5" font-size="19.66" fill="#d4d4d4" text-anchor="middle" >100W</text>
<rect x="852" y="400" width="159" height="34" fill="#000"/>
<rect x="854" y="402" width="155" height="30" fill="url(#bwv)"/>
<text x="1183.5" y="207.0" font-size="20.7" fill="#d4d4d4" text-anchor="middle" >Delta H</text>
<rect x="1103" y="214" width="199" height="436" fill="#222"/>
<rect x="1095" y="215" width="7" height="2" fill="#ddd"/>
<text x="1094.5" y="223.3" font-size="19.66" fill="#d4d4d4" text-anchor="end" >15</text>
<rect x="1103" y="288" width="199" height="2" fill="#8c8c8c"/>
<rect x="1095" y="288" width="7" height="2" fill="#ddd"/>
<text x="1094.5" y="296.3" font-size="19.66" fill="#d4d4d4" text-anchor="end" >10</text>
<rect x="1103" y="359" width="199" height="2" fill="#8c8c8c"/>
<rect x="1095" y="359" width="7" height="2" fill="#ddd"/>
<text x="1094.5" y="367.3" font-size="19.66" fill="#d4d4d4" text-anchor="end" >5</text>
<rect x="1103" y="432" width="199" height="2" fill="#8c8c8c"/>
<rect x="1095" y="432" width="7" height="2" fill="#ddd"/>
<text x="1094.5" y="440.3" font-size="19.66" fill="#d4d4d4" text-anchor="end" >0</text>
<rect x="1103" y="505" width="199" height="2" fill="#8c8c8c"/>
<rect x="1095" y="505" width="7" height="2" fill="#ddd"/>
<text x="1094.5" y="513.3" font-size="19.66" fill="#d4d4d4" text-anchor="end" >-5</text>
<rect x="1103" y="578" width="199" height="2" fill="#8c8c8c"/>
<rect x="1095" y="578" width="7" height="2" fill="#ddd"/>
<text x="1094.5" y="586.3" font-size="19.66" fill="#d4d4d4" text-anchor="end" >-10</text>
<rect x="1095" y="649" width="7" height="2" fill="#ddd"/>
<text x="1094.5" y="657.3" font-size="19.66" fill="#d4d4d4" text-anchor="end" >-15</text>
<rect x="1103" y="214" width="199" height="435.500" fill="none" stroke="#8c8c8c" stroke-width="2"/>
<rect x="1102" y="213" width="201" height="4" fill="#8c8c8c"/>
<rect x="1102" y="648" width="201" height="3" fill="#8c8c8c"/>
<rect x="1102" y="651" width="2" height="7.500" fill="#ccc"/><rect x="1301" y="651" width="2" height="7.500" fill="#ccc"/>
<text x="1202.5" y="670.5" font-size="19.66" fill="#d4d4d4" text-anchor="middle" >100W</text>
<rect x="1123" y="432" width="159" height="2" fill="#000"/>
<rect x="516" y="694" width="813" height="224.5" fill="#000"/>
<rect x="540.0" y="704" width="85" height="91" fill="#bcbcc0"/>
<rect x="540.0" y="794.500" width="85" height="92" fill="#bfbfbf"/>
<rect x="540.5" y="704.500" width="84" height="182" fill="none" stroke="#f4f4f4" stroke-width="2"/>
<text x="582.5" y="906.5" font-size="18.11" fill="#fff" text-anchor="middle" >White</text>
<rect x="639.2" y="704" width="85" height="91" fill="#b80400"/>
<rect x="639.2" y="794.500" width="85" height="92" fill="#bc0c10"/>
<rect x="639.7" y="704.500" width="84" height="182" fill="none" stroke="#f4f4f4" stroke-width="2"/>
<text x="681.7" y="906.5" font-size="18.11" fill="#fff" text-anchor="middle" >Red</text>
<rect x="738.4" y="704" width="85" height="91" fill="#00bc00"/>
<rect x="738.4" y="794.500" width="85" height="92" fill="#10bc10"/>
<rect x="738.9" y="704.500" width="84" height="182" fill="none" stroke="#f4f4f4" stroke-width="2"/>
<text x="780.9" y="906.5" font-size="18.11" fill="#fff" text-anchor="middle" >Green</text>
<rect x="837.6" y="704" width="85" height="91" fill="#0008bc"/>
<rect x="837.6" y="794.500" width="85" height="92" fill="#0000bc"/>
<rect x="838.1" y="704.500" width="84" height="182" fill="none" stroke="#f4f4f4" stroke-width="2"/>
<text x="880.1" y="906.5" font-size="18.11" fill="#fff" text-anchor="middle" >Blue</text>
<rect x="936.8" y="704" width="85" height="91" fill="#00bcc0"/>
<rect x="936.8" y="794.500" width="85" height="92" fill="#10bcc0"/>
<rect x="937.3" y="704.500" width="84" height="182" fill="none" stroke="#f4f4f4" stroke-width="2"/>
<text x="979.3" y="906.5" font-size="18.11" fill="#fff" text-anchor="middle" >Cyan</text>
<rect x="1036.0" y="704" width="85" height="91" fill="#b800bc"/>
<rect x="1036.0" y="794.500" width="85" height="92" fill="#bc00bc"/>
<rect x="1036.5" y="704.500" width="84" height="182" fill="none" stroke="#f4f4f4" stroke-width="2"/>
<text x="1078.5" y="906.5" font-size="18.11" fill="#fff" text-anchor="middle" >Magenta</text>
<rect x="1135.2" y="704" width="85" height="91" fill="#bcbc00"/>
<rect x="1135.2" y="794.500" width="85" height="92" fill="#bfbf10"/>
<rect x="1135.7" y="704.500" width="84" height="182" fill="none" stroke="#f4f4f4" stroke-width="2"/>
<text x="1177.7" y="906.5" font-size="18.11" fill="#fff" text-anchor="middle" >Yellow</text>
<rect x="1234.4" y="704" width="85" height="91" fill="#f8fcff"/>
<rect x="1234.4" y="794.500" width="85" height="92" fill="#fafafa"/>
<rect x="1234.9" y="704.500" width="84" height="182" fill="none" stroke="#f4f4f4" stroke-width="2"/>
<text x="1276.9" y="906.5" font-size="18.11" fill="#fff" text-anchor="middle" >100W</text>
<text x="0.0" y="0.0" font-size="18.11" fill="#fff" text-anchor="middle" transform="translate(534.500 745) rotate(-90)">Actual</text>
<text x="0.0" y="0.0" font-size="18.11" fill="#fff" text-anchor="middle" transform="translate(534.500 846) rotate(-90)">Target</text>
<text x="21.0" y="1017.5" font-size="40.88" fill="#f2f2f2" textLength="301.0" lengthAdjust="spacingAndGlyphs" >Current Reading</text>
<text x="21.0" y="1076.0" font-size="33.64" fill="#f2f2f2" textLength="141.0" lengthAdjust="spacingAndGlyphs" >x: 0,3082</text>
<text x="21.0" y="1132.0" font-size="33.64" fill="#f2f2f2" textLength="141.5" lengthAdjust="spacingAndGlyphs" >y: 0,3271</text>
<text x="21.0" y="1189.0" font-size="33.64" fill="#f2f2f2" textLength="152.5" lengthAdjust="spacingAndGlyphs" >fL: 179,28</text>
<text x="21.0" y="1245.0" font-size="33.64" fill="#f2f2f2" textLength="218.0" lengthAdjust="spacingAndGlyphs" >cd/m²: 614,25</text>
<text x="642.0" y="982.5" font-size="20.18" fill="#d4d4d4" textLength="114.0" lengthAdjust="spacingAndGlyphs" text-anchor="middle" >RGB Balance</text>
<rect x="491" y="990" width="343" height="248" fill="#222"/>
<rect x="491" y="1015" width="343" height="2" fill="#8c8c8c"/>
<rect x="483" y="1015" width="8" height="2" fill="#ddd"/>
<text x="482.0" y="1023.0" font-size="19.66" fill="#d4d4d4" text-anchor="end" >104</text>
<rect x="491" y="1065" width="343" height="2" fill="#8c8c8c"/>
<rect x="483" y="1065" width="8" height="2" fill="#ddd"/>
<text x="482.0" y="1073.0" font-size="19.66" fill="#d4d4d4" text-anchor="end" >102</text>
<rect x="491" y="1114" width="343" height="2" fill="#8c8c8c"/>
<rect x="483" y="1114" width="8" height="2" fill="#ddd"/>
<text x="482.0" y="1122.0" font-size="19.66" fill="#d4d4d4" text-anchor="end" >100</text>
<rect x="491" y="1164" width="343" height="2" fill="#8c8c8c"/>
<rect x="483" y="1164" width="8" height="2" fill="#ddd"/>
<text x="482.0" y="1172.0" font-size="19.66" fill="#d4d4d4" text-anchor="end" >98</text>
<rect x="491" y="1213" width="343" height="2" fill="#8c8c8c"/>
<rect x="483" y="1213" width="8" height="2" fill="#ddd"/>
<text x="482.0" y="1221.0" font-size="19.66" fill="#d4d4d4" text-anchor="end" >96</text>
<rect x="491" y="990" width="343.500" height="248" fill="none" stroke="#8c8c8c" stroke-width="2"/>
<rect x="490" y="1238" width="2" height="8" fill="#ccc"/><rect x="833.500" y="1238" width="2" height="8" fill="#ccc"/>
<defs><linearGradient id="br" x1="0" x2="0" y1="0" y2="1"><stop offset="0" stop-color="#ff5c5c"/><stop offset="1" stop-color="#ff4242"/></linearGradient><linearGradient id="bgn" x1="0" x2="0" y1="0" y2="1"><stop offset="0" stop-color="#5aae5a"/><stop offset="1" stop-color="#3c9c3c"/></linearGradient><linearGradient id="bb" x1="0" x2="0" y1="0" y2="1"><stop offset="0" stop-color="#5c5cff"/><stop offset="1" stop-color="#3c3cff"/></linearGradient></defs>
<rect x="524.0" y="1153" width="91.5" height="84" fill="#000"/>
<rect x="526.0" y="1155" width="88.0" height="82" fill="url(#br)"/>
<rect x="615.5" y="1105" width="91.5" height="132" fill="#000"/>
<rect x="617.5" y="1107" width="88.0" height="130" fill="url(#bgn)"/>
<rect x="707.0" y="1088" width="91.5" height="149" fill="#000"/>
<rect x="709.0" y="1090" width="88.0" height="147" fill="url(#bb)"/>
<rect x="490" y="1237" width="345.500" height="2" fill="#aaa"/>
<text x="663.0" y="1259.5" font-size="19.66" fill="#d4d4d4" text-anchor="middle" >100W</text>
<defs><linearGradient id="thd" x1="0" x2="0" y1="0" y2="1"><stop offset="0" stop-color="#303030"/><stop offset=".5" stop-color="#262626"/><stop offset=".5" stop-color="#181818"/><stop offset="1" stop-color="#151515"/></linearGradient><linearGradient id="trd" x1="0" x2="0" y1="0" y2="1"><stop offset="0" stop-color="#474747"/><stop offset="1" stop-color="#3a3a3a"/></linearGradient><linearGradient id="trl" x1="0" x2="0" y1="0" y2="1"><stop offset="0" stop-color="#8a8a8a"/><stop offset="1" stop-color="#767676"/></linearGradient></defs>
<rect x="862" y="957" width="950" height="304" fill="#111"/>
<rect x="864" y="959" width="946" height="53" fill="url(#thd)"/>
<rect x="864" y="1012.0" width="946" height="50.0" fill="url(#trd)"/>
<rect x="864" y="1062.0" width="946" height="49.5" fill="url(#trl)"/>
<rect x="864" y="1111.5" width="946" height="49.5" fill="url(#trd)"/>
<rect x="864" y="1161.0" width="946" height="50.0" fill="url(#trl)"/>
<rect x="864" y="1211.0" width="946" height="50.0" fill="url(#trd)"/>
<text x="1044.5" y="995.7" font-size="28.98" fill="#fff" textLength="57.3" lengthAdjust="spacingAndGlyphs" text-anchor="middle" >White</text>
<text x="1145.0" y="995.7" font-size="28.98" fill="#fff" textLength="41.1" lengthAdjust="spacingAndGlyphs" text-anchor="middle" >Red</text>
<text x="1245.0" y="995.7" font-size="28.98" fill="#fff" textLength="62.3" lengthAdjust="spacingAndGlyphs" text-anchor="middle" >Green</text>
<text x="1345.5" y="995.7" font-size="28.98" fill="#fff" textLength="44.8" lengthAdjust="spacingAndGlyphs" text-anchor="middle" >Blue</text>
<text x="1445.5" y="995.7" font-size="28.98" fill="#fff" textLength="52.3" lengthAdjust="spacingAndGlyphs" text-anchor="middle" >Cyan</text>
<text x="1547.5" y="995.7" font-size="28.98" fill="#fff" textLength="87.2" lengthAdjust="spacingAndGlyphs" text-anchor="middle" >Magenta</text>
<text x="1650.0" y="995.7" font-size="28.98" fill="#fff" textLength="63.9" lengthAdjust="spacingAndGlyphs" text-anchor="middle" >Yellow</text>
<text x="1757.0" y="995.7" font-size="28.98" fill="#fff" textLength="58.5" lengthAdjust="spacingAndGlyphs" text-anchor="middle" >100W</text>
<text x="882.0" y="1048.2" font-size="30.01" fill="#f0f0f0" textLength="86.0" lengthAdjust="spacingAndGlyphs" font-weight="bold" >x: CIE31</text>
<text x="997.5" y="1048.2" font-size="31.05" fill="#ececec" textLength="68.4" lengthAdjust="spacingAndGlyphs" >0,3083</text>
<text x="1104.5" y="1048.2" font-size="31.05" fill="#ececec" textLength="68.4" lengthAdjust="spacingAndGlyphs" >0,6476</text>
<text x="1198.5" y="1048.2" font-size="31.05" fill="#ececec" textLength="68.4" lengthAdjust="spacingAndGlyphs" >0,2997</text>
<text x="1304.5" y="1048.2" font-size="31.05" fill="#ececec" textLength="68.4" lengthAdjust="spacingAndGlyphs" >0,1506</text>
<text x="1398.5" y="1048.2" font-size="31.05" fill="#ececec" textLength="68.4" lengthAdjust="spacingAndGlyphs" >0,2225</text>
<text x="1505.0" y="1048.2" font-size="31.05" fill="#ececec" textLength="68.4" lengthAdjust="spacingAndGlyphs" >0,3130</text>
<text x="1603.0" y="1048.2" font-size="31.05" fill="#ececec" textLength="68.4" lengthAdjust="spacingAndGlyphs" >0,4170</text>
<text x="1710.0" y="1048.2" font-size="31.05" fill="#ececec" textLength="68.4" lengthAdjust="spacingAndGlyphs" >0,3082</text>
<text x="882.0" y="1097.7" font-size="30.01" fill="#e8e8e8" textLength="86.0" lengthAdjust="spacingAndGlyphs" font-weight="bold" >y: CIE31</text>
<text x="997.5" y="1097.7" font-size="31.05" fill="#e4e4e4" textLength="68.4" lengthAdjust="spacingAndGlyphs" >0,3266</text>
<text x="1104.5" y="1097.7" font-size="31.05" fill="#e4e4e4" textLength="68.4" lengthAdjust="spacingAndGlyphs" >0,3315</text>
<text x="1198.5" y="1097.7" font-size="31.05" fill="#e4e4e4" textLength="68.4" lengthAdjust="spacingAndGlyphs" >0,6043</text>
<text x="1304.5" y="1097.7" font-size="31.05" fill="#e4e4e4" textLength="68.4" lengthAdjust="spacingAndGlyphs" >0,0624</text>
<text x="1398.5" y="1097.7" font-size="31.05" fill="#e4e4e4" textLength="68.4" lengthAdjust="spacingAndGlyphs" >0,3253</text>
<text x="1505.0" y="1097.7" font-size="31.05" fill="#e4e4e4" textLength="68.4" lengthAdjust="spacingAndGlyphs" >0,1500</text>
<text x="1603.0" y="1097.7" font-size="31.05" fill="#e4e4e4" textLength="68.4" lengthAdjust="spacingAndGlyphs" >0,5091</text>
<text x="1710.0" y="1097.7" font-size="31.05" fill="#e4e4e4" textLength="68.4" lengthAdjust="spacingAndGlyphs" >0,3271</text>
<text x="882.0" y="1147.2" font-size="30.01" fill="#f0f0f0" textLength="13.0" lengthAdjust="spacingAndGlyphs" font-weight="bold" >Y</text>
<text x="997.5" y="1147.2" font-size="31.05" fill="#ececec" textLength="93.2" lengthAdjust="spacingAndGlyphs" >314,8418</text>
<text x="1104.5" y="1147.2" font-size="31.05" fill="#ececec" textLength="80.8" lengthAdjust="spacingAndGlyphs" >62,4895</text>
<text x="1198.5" y="1147.2" font-size="31.05" fill="#ececec" textLength="93.2" lengthAdjust="spacingAndGlyphs" >221,4833</text>
<text x="1304.5" y="1147.2" font-size="31.05" fill="#ececec" textLength="80.8" lengthAdjust="spacingAndGlyphs" >24,1095</text>
<text x="1398.5" y="1147.2" font-size="31.05" fill="#ececec" textLength="93.2" lengthAdjust="spacingAndGlyphs" >249,2302</text>
<text x="1505.0" y="1147.2" font-size="31.05" fill="#ececec" textLength="79.1" lengthAdjust="spacingAndGlyphs" >87,1197</text>
<text x="1603.0" y="1147.2" font-size="31.05" fill="#ececec" textLength="93.2" lengthAdjust="spacingAndGlyphs" >288,9078</text>
<text x="1710.0" y="1147.2" font-size="31.05" fill="#ececec" textLength="93.2" lengthAdjust="spacingAndGlyphs" >614,2544</text>
<text x="882.0" y="1197.2" font-size="30.01" fill="#e8e8e8" textLength="91.0" lengthAdjust="spacingAndGlyphs" font-weight="bold" >Target Y</text>
<text x="997.5" y="1197.2" font-size="31.05" fill="#e4e4e4" textLength="93.2" lengthAdjust="spacingAndGlyphs" >320,0238</text>
<text x="1104.5" y="1197.2" font-size="31.05" fill="#e4e4e4" textLength="80.8" lengthAdjust="spacingAndGlyphs" >68,0550</text>
<text x="1198.5" y="1197.2" font-size="31.05" fill="#e4e4e4" textLength="93.2" lengthAdjust="spacingAndGlyphs" >228,8677</text>
<text x="1304.5" y="1197.2" font-size="31.05" fill="#e4e4e4" textLength="79.1" lengthAdjust="spacingAndGlyphs" >23,1011</text>
<text x="1398.5" y="1197.2" font-size="31.05" fill="#e4e4e4" textLength="93.2" lengthAdjust="spacingAndGlyphs" >251,9689</text>
<text x="1505.0" y="1197.2" font-size="31.05" fill="#e4e4e4" textLength="80.8" lengthAdjust="spacingAndGlyphs" >91,1561</text>
<text x="1603.0" y="1197.2" font-size="31.05" fill="#e4e4e4" textLength="93.2" lengthAdjust="spacingAndGlyphs" >296,9227</text>
<text x="1710.0" y="1197.2" font-size="31.05" fill="#e4e4e4" textLength="93.2" lengthAdjust="spacingAndGlyphs" >614,2544</text>
<text x="882.0" y="1245.8" font-size="30.01" fill="#f0f0f0" textLength="90.0" lengthAdjust="spacingAndGlyphs" font-weight="bold" >ΔE 2000</text>
<text x="997.5" y="1245.8" font-size="31.05" fill="#ececec" textLength="68.4" lengthAdjust="spacingAndGlyphs" >1,9127</text>
<text x="1104.5" y="1245.8" font-size="31.05" fill="#ececec" textLength="68.4" lengthAdjust="spacingAndGlyphs" >1,9473</text>
<text x="1198.5" y="1245.8" font-size="31.05" fill="#ececec" textLength="68.4" lengthAdjust="spacingAndGlyphs" >0,7390</text>
<text x="1304.5" y="1245.8" font-size="31.05" fill="#ececec" textLength="68.4" lengthAdjust="spacingAndGlyphs" >0,6559</text>
<text x="1398.5" y="1245.8" font-size="31.05" fill="#ececec" textLength="68.4" lengthAdjust="spacingAndGlyphs" >0,7898</text>
<text x="1505.0" y="1245.8" font-size="31.05" fill="#ececec" textLength="68.4" lengthAdjust="spacingAndGlyphs" >1,1563</text>
<text x="1603.0" y="1245.8" font-size="31.05" fill="#ececec" textLength="68.4" lengthAdjust="spacingAndGlyphs" >0,9663</text>
<text x="1710.0" y="1245.8" font-size="31.05" fill="#ececec" textLength="68.4" lengthAdjust="spacingAndGlyphs" >2,5650</text>
<defs><linearGradient id="bbar" x1="0" x2="0" y1="0" y2="1"><stop offset="0" stop-color="#3e3e3e"/><stop offset="1" stop-color="#272727"/></linearGradient><linearGradient id="bbtn" x1="0" x2="0" y1="0" y2="1"><stop offset="0" stop-color="#7c7c7c"/><stop offset=".75" stop-color="#585858"/><stop offset="1" stop-color="#6a6a6a"/></linearGradient><linearGradient id="nb" x1="0" x2="0" y1="0" y2="1"><stop offset="0" stop-color="#b4b4b4"/><stop offset="1" stop-color="#6e6e6e"/></linearGradient><linearGradient id="nbc" x1="0" x2="0" y1="0" y2="1"><stop offset="0" stop-color="#6c6c6c"/><stop offset="1" stop-color="#b0b0b0"/></linearGradient></defs>
<rect x="0" y="1328" width="2293" height="64" fill="url(#bbar)"/>
<path d="M2.5 1390V1333a4 4 0 0 1 4-4H148.5a4 4 0 0 1 4 4V1390Z" fill="url(#bbtn)" stroke="#8a8a8a" stroke-width="1"/>
<rect x="7.5" y="1334" width="140" height="36.500" rx="3" fill="#c0c0c0"/>
<rect x="8.0" y="1334.500" width="139" height="35.500" rx="3" fill="none" stroke="#000" stroke-opacity=".25" stroke-width="1"/>
<text x="77.5" y="1385.0" font-size="11.38" fill="#222" font-weight="bold" text-anchor="middle" >White</text>
<path d="M154.5 1390V1333a4 4 0 0 1 4-4H300.5a4 4 0 0 1 4 4V1390Z" fill="url(#bbtn)" stroke="#8a8a8a" stroke-width="1"/>
<rect x="159.5" y="1334" width="140" height="36.500" rx="3" fill="#c40000"/>
<rect x="160.0" y="1334.500" width="139" height="35.500" rx="3" fill="none" stroke="#000" stroke-opacity=".25" stroke-width="1"/>
<text x="229.5" y="1385.0" font-size="11.38" fill="#222" font-weight="bold" text-anchor="middle" >Red</text>
<path d="M306.5 1390V1333a4 4 0 0 1 4-4H452.5a4 4 0 0 1 4 4V1390Z" fill="url(#bbtn)" stroke="#8a8a8a" stroke-width="1"/>
<rect x="311.5" y="1334" width="140" height="36.500" rx="3" fill="#00c400"/>
<rect x="312.0" y="1334.500" width="139" height="35.500" rx="3" fill="none" stroke="#000" stroke-opacity=".25" stroke-width="1"/>
<text x="381.5" y="1385.0" font-size="11.38" fill="#222" font-weight="bold" text-anchor="middle" >Green</text>
<path d="M458.5 1390V1333a4 4 0 0 1 4-4H604.5a4 4 0 0 1 4 4V1390Z" fill="url(#bbtn)" stroke="#8a8a8a" stroke-width="1"/>
<rect x="463.5" y="1334" width="140" height="36.500" rx="3" fill="#0000c4"/>
<rect x="464.0" y="1334.500" width="139" height="35.500" rx="3" fill="none" stroke="#000" stroke-opacity=".25" stroke-width="1"/>
<text x="533.5" y="1385.0" font-size="11.38" fill="#222" font-weight="bold" text-anchor="middle" >Blue</text>
<path d="M610.5 1390V1333a4 4 0 0 1 4-4H756.5a4 4 0 0 1 4 4V1390Z" fill="url(#bbtn)" stroke="#8a8a8a" stroke-width="1"/>
<rect x="615.5" y="1334" width="140" height="36.500" rx="3" fill="#00c0c4"/>
<rect x="616.0" y="1334.500" width="139" height="35.500" rx="3" fill="none" stroke="#000" stroke-opacity=".25" stroke-width="1"/>
<text x="685.5" y="1385.0" font-size="11.38" fill="#222" font-weight="bold" text-anchor="middle" >Cyan</text>
<path d="M762.5 1390V1333a4 4 0 0 1 4-4H908.5a4 4 0 0 1 4 4V1390Z" fill="url(#bbtn)" stroke="#8a8a8a" stroke-width="1"/>
<rect x="767.5" y="1334" width="140" height="36.500" rx="3" fill="#c000c4"/>
<rect x="768.0" y="1334.500" width="139" height="35.500" rx="3" fill="none" stroke="#000" stroke-opacity=".25" stroke-width="1"/>
<text x="837.5" y="1385.0" font-size="11.38" fill="#222" font-weight="bold" text-anchor="middle" >Magenta</text>
<path d="M914.5 1390V1333a4 4 0 0 1 4-4H1060.5a4 4 0 0 1 4 4V1390Z" fill="url(#bbtn)" stroke="#8a8a8a" stroke-width="1"/>
<rect x="919.5" y="1334" width="140" height="36.500" rx="3" fill="#c4c400"/>
<rect x="920.0" y="1334.500" width="139" height="35.500" rx="3" fill="none" stroke="#000" stroke-opacity=".25" stroke-width="1"/>
<text x="989.5" y="1385.0" font-size="11.38" fill="#222" font-weight="bold" text-anchor="middle" >Yellow</text>
<path d="M1066.5 1390V1333a4 4 0 0 1 4-4H1212.5a4 4 0 0 1 4 4V1390Z" fill="#1c1c1c" stroke="#1c1c1c" stroke-width="1"/>
<rect x="1071.5" y="1334" width="140" height="36.500" rx="3" fill="#fff"/>
<text x="1141.5" y="1385.0" font-size="11.38" fill="#fff" font-weight="bold" text-anchor="middle" >100W</text>
<path d="M1969 1347V1333a4 4 0 0 1 4-4H2013a4 4 0 0 1 4 4V1347Z" fill="url(#nb)"/>
<circle cx="1993" cy="1338" r="7" fill="url(#nbc)"/><path d="M1989.500 1340h7l-3.500-4z" fill="#333"/>
<path d="M1969 1348.500H2017V1386a4 4 0 0 1-4 4H1973a4 4 0 0 1-4-4Z" fill="url(#nb)"/>
<rect x="1978.500" y="1354.500" width="29" height="28.500" rx="3.500" fill="#a8a8a8" stroke="#222" stroke-width="2.500"/>
<rect x="1986" y="1362.500" width="14" height="13.500" fill="#080808"/>
<rect x="2018.5" y="1329" width="45.5" height="29.500" fill="url(#nb)"/>
<circle cx="2041.2" cy="1343.500" r="10" fill="url(#nbc)"/>
<rect x="2037.2" y="1339.500" width="8" height="8" fill="#2a2a2a"/>
<rect x="2065.0" y="1329" width="44.0" height="29.500" fill="url(#nb)"/>
<circle cx="2087.0" cy="1343.500" r="10" fill="url(#nbc)"/>
<path d="M2084.0 1338.500v10.500l8.500-5.250z" fill="#2a2a2a"/>
<rect x="2110.0" y="1329" width="44.0" height="29.500" fill="url(#nb)"/>
<circle cx="2132.0" cy="1343.500" r="10" fill="url(#nbc)"/>
<path d="M2129.0 1338.500h-3v10h3M2135.0 1338.500h3v10h-3" fill="none" stroke="#2a2a2a" stroke-width="1.600"/><path d="M2130.0 1343.500h1.500M2132.5 1343.500h1.500" stroke="#2a2a2a" stroke-width="1.500"/>
<rect x="2155.0" y="1329" width="44.0" height="29.500" fill="url(#nb)"/>
<circle cx="2177.0" cy="1343.500" r="10" fill="url(#nbc)"/>
<path d="M2177.0 1343.500c-2-3.500-6.500-3.500-6.500 0s4.500 3.500 6.500 0s6.500-3.500 6.500 0s-4.500 3.500-6.500 0z" fill="none" stroke="#2a2a2a" stroke-width="1.600"/>
<rect x="2200.0" y="1329" width="43.5" height="29.500" fill="url(#nb)"/>
<circle cx="2221.8" cy="1343.500" r="10" fill="url(#nbc)"/>
<path d="M2216.2 1342a5.500 5.500 0 0 1 10-2.500M2227.2 1345a5.500 5.500 0 0 1-10 2.500" fill="none" stroke="#2a2a2a" stroke-width="2"/><path d="M2227.8 1336.500v4.500h-4.500zM2215.8 1350.500v-4.500h4.500z" fill="#2a2a2a"/>
<rect x="2245" y="1328" width="46" height="32" fill="#333"/>
<g stroke="#000" stroke-opacity="0.55" stroke-width="6" stroke-linecap="round">
<path d="M2267.3 1333.0L2267.3 1355.0"/>
<path d="M2257.8 1338.5L2276.8 1349.5"/>
<path d="M2257.8 1349.5L2276.8 1338.5"/>
</g>
<g stroke="#ee0808" stroke-opacity="1" stroke-width="6" stroke-linecap="round">
<path d="M2266.1 1331.8L2266.1 1353.8"/>
<path d="M2256.6 1337.3L2275.6 1348.3"/>
<path d="M2256.6 1348.3L2275.6 1337.3"/>
</g>
<path d="M2018.500 1390V1364a4 4 0 0 1 4-4H2154V1390Z" fill="url(#nb)"/>
<path d="M2155.500 1390V1360H2286a4 4 0 0 1 4 4V1390Z" fill="url(#nb)"/>
<circle cx="2049" cy="1375" r="10" fill="url(#nbc)"/><circle cx="2262" cy="1375" r="10" fill="url(#nbc)"/>
<path d="M2048 1370.500l-4 4.500l4 4.500M2053 1370.500l-4 4.500l4 4.500" fill="none" stroke="#333" stroke-width="1.400"/>
<path d="M2258 1370.500l4 4.500l-4 4.500M2263 1370.500l4 4.500l-4 4.500" fill="none" stroke="#333" stroke-width="1.400"/>
<text x="2075.5" y="1383.0" font-size="22.77" fill="#2a2a2a" textLength="50.5" lengthAdjust="spacingAndGlyphs" >Back</text>
<text x="2182.5" y="1383.0" font-size="22.77" fill="#2a2a2a" textLength="52.0" lengthAdjust="spacingAndGlyphs" >Next</text>
<path d="M1388 213H2277V888H1388Z M1571.1 881.6 L1569.2 881.6 L1569.0 881.6 L1568.7 881.6 L1568.5 881.5 L1568.2 881.3 L1567.9 881.2 L1567.6 881.0 L1567.2 880.8 L1566.8 880.5 L1566.4 880.2 L1565.9 879.9 L1565.3 879.6 L1564.8 879.2 L1564.2 878.8 L1563.6 878.4 L1562.9 877.9 L1562.1 877.4 L1561.3 876.8 L1560.5 876.3 L1559.6 875.7 L1558.6 875.0 L1557.5 874.3 L1556.4 873.5 L1555.2 872.7 L1553.9 871.9 L1552.5 871.0 L1551.1 870.0 L1549.6 869.0 L1548.0 867.9 L1546.3 866.7 L1544.5 865.4 L1542.7 864.0 L1540.7 862.4 L1538.7 860.7 L1536.6 858.9 L1534.3 856.9 L1531.9 854.4 L1529.2 851.5 L1526.4 848.2 L1523.3 844.6 L1520.0 840.2 L1516.5 835.4 L1512.8 830.1 L1508.9 824.2 L1504.7 817.3 L1500.2 809.5 L1495.5 800.9 L1490.5 791.4 L1485.2 780.6 L1479.6 768.8 L1473.6 755.9 L1467.4 741.8 L1461.2 726.3 L1455.1 709.3 L1448.8 691.0 L1442.6 671.5 L1436.5 650.8 L1430.4 628.7 L1424.3 605.2 L1418.5 581.0 L1413.2 556.5 L1408.3 531.6 L1403.8 506.1 L1399.9 480.6 L1396.8 455.8 L1394.5 431.6 L1392.8 407.6 L1392.0 384.5 L1392.1 362.6 L1393.3 341.7 L1395.4 321.7 L1398.5 303.0 L1402.5 286.3 L1407.7 271.3 L1413.9 258.0 L1421.0 246.4 L1428.6 237.0 L1436.9 229.9 L1446.1 224.9 L1455.7 221.6 L1465.5 219.7 L1475.6 219.3 L1486.1 220.6 L1496.8 223.0 L1507.5 225.7 L1518.2 229.0 L1529.0 233.0 L1539.7 237.5 L1550.3 242.0 L1560.6 246.6 L1570.7 251.4 L1580.7 256.4 L1590.7 261.5 L1600.5 266.7 L1610.2 272.1 L1619.9 277.7 L1629.5 283.4 L1639.1 289.2 L1648.7 295.2 L1658.3 301.2 L1667.8 307.4 L1677.3 313.7 L1686.8 320.1 L1696.2 326.6 L1705.7 333.1 L1715.1 339.7 L1724.6 346.4 L1734.0 353.1 L1743.5 359.9 L1753.0 366.7 L1762.4 373.6 L1771.9 380.5 L1781.4 387.5 L1790.8 394.5 L1800.3 401.5 L1809.7 408.5 L1819.1 415.5 L1828.5 422.5 L1837.9 429.5 L1847.3 436.5 L1856.6 443.5 L1865.8 450.5 L1875.1 457.4 L1884.2 464.3 L1893.3 471.2 L1902.3 478.0 L1911.3 484.8 L1920.2 491.5 L1929.0 498.1 L1937.7 504.7 L1946.3 511.2 L1954.8 517.7 L1963.2 524.0 L1971.5 530.2 L1979.6 536.3 L1987.6 542.3 L1995.4 548.2 L2003.0 554.0 L2010.5 559.6 L2017.7 565.1 L2024.7 570.4 L2031.5 575.5 L2037.9 580.4 L2044.2 585.1 L2050.3 589.7 L2056.2 594.2 L2061.9 598.5 L2067.4 602.7 L2072.7 606.6 L2077.7 610.4 L2082.5 614.0 L2087.0 617.4 L2091.4 620.6 L2095.5 623.7 L2099.3 626.6 L2103.0 629.4 L2106.5 632.1 L2109.8 634.6 L2112.9 636.9 L2115.8 639.1 L2118.6 641.2 L2121.2 643.2 L2123.7 645.0 L2126.0 646.8 L2128.2 648.5 L2130.3 650.0 L2132.3 651.5 L2134.1 652.9 L2135.9 654.3 L2137.7 655.6 L2139.3 656.9 L2140.9 658.1 L2142.4 659.2 L2143.8 660.3 L2145.2 661.3 L2146.5 662.3 L2147.7 663.2 L2148.9 664.1 L2149.9 664.9 L2151.0 665.6 L2151.9 666.3 L2152.8 667.0 L2153.6 667.6 L2154.4 668.2 L2155.1 668.8 L2155.8 669.3 L2156.4 669.7 L2157.0 670.2 L2157.5 670.6 L2158.1 671.0 L2158.6 671.4 L2159.0 671.7 L2159.3 671.9 L2159.4 672.1 L2159.5 672.2 L2159.6 672.3 L2159.6 672.5Z M1970 224H2267V474H1970Z" fill="#222" fill-rule="evenodd"/>
<path d="M1571.1 881.6 L1569.2 881.6 L1569.0 881.6 L1568.7 881.6 L1568.5 881.5 L1568.2 881.3 L1567.9 881.2 L1567.6 881.0 L1567.2 880.8 L1566.8 880.5 L1566.4 880.2 L1565.9 879.9 L1565.3 879.6 L1564.8 879.2 L1564.2 878.8 L1563.6 878.4 L1562.9 877.9 L1562.1 877.4 L1561.3 876.8 L1560.5 876.3 L1559.6 875.7 L1558.6 875.0 L1557.5 874.3 L1556.4 873.5 L1555.2 872.7 L1553.9 871.9 L1552.5 871.0 L1551.1 870.0 L1549.6 869.0 L1548.0 867.9 L1546.3 866.7 L1544.5 865.4 L1542.7 864.0 L1540.7 862.4 L1538.7 860.7 L1536.6 858.9 L1534.3 856.9 L1531.9 854.4 L1529.2 851.5 L1526.4 848.2 L1523.3 844.6 L1520.0 840.2 L1516.5 835.4 L1512.8 830.1 L1508.9 824.2 L1504.7 817.3 L1500.2 809.5 L1495.5 800.9 L1490.5 791.4 L1485.2 780.6 L1479.6 768.8 L1473.6 755.9 L1467.4 741.8 L1461.2 726.3 L1455.1 709.3 L1448.8 691.0 L1442.6 671.5 L1436.5 650.8 L1430.4 628.7 L1424.3 605.2 L1418.5 581.0 L1413.2 556.5 L1408.3 531.6 L1403.8 506.1 L1399.9 480.6 L1396.8 455.8 L1394.5 431.6 L1392.8 407.6 L1392.0 384.5 L1392.1 362.6 L1393.3 341.7 L1395.4 321.7 L1398.5 303.0 L1402.5 286.3 L1407.7 271.3 L1413.9 258.0 L1421.0 246.4 L1428.6 237.0 L1436.9 229.9 L1446.1 224.9 L1455.7 221.6 L1465.5 219.7 L1475.6 219.3 L1486.1 220.6 L1496.8 223.0 L1507.5 225.7 L1518.2 229.0 L1529.0 233.0 L1539.7 237.5 L1550.3 242.0 L1560.6 246.6 L1570.7 251.4 L1580.7 256.4 L1590.7 261.5 L1600.5 266.7 L1610.2 272.1 L1619.9 277.7 L1629.5 283.4 L1639.1 289.2 L1648.7 295.2 L1658.3 301.2 L1667.8 307.4 L1677.3 313.7 L1686.8 320.1 L1696.2 326.6 L1705.7 333.1 L1715.1 339.7 L1724.6 346.4 L1734.0 353.1 L1743.5 359.9 L1753.0 366.7 L1762.4 373.6 L1771.9 380.5 L1781.4 387.5 L1790.8 394.5 L1800.3 401.5 L1809.7 408.5 L1819.1 415.5 L1828.5 422.5 L1837.9 429.5 L1847.3 436.5 L1856.6 443.5 L1865.8 450.5 L1875.1 457.4 L1884.2 464.3 L1893.3 471.2 L1902.3 478.0 L1911.3 484.8 L1920.2 491.5 L1929.0 498.1 L1937.7 504.7 L1946.3 511.2 L1954.8 517.7 L1963.2 524.0 L1971.5 530.2 L1979.6 536.3 L1987.6 542.3 L1995.4 548.2 L2003.0 554.0 L2010.5 559.6 L2017.7 565.1 L2024.7 570.4 L2031.5 575.5 L2037.9 580.4 L2044.2 585.1 L2050.3 589.7 L2056.2 594.2 L2061.9 598.5 L2067.4 602.7 L2072.7 606.6 L2077.7 610.4 L2082.5 614.0 L2087.0 617.4 L2091.4 620.6 L2095.5 623.7 L2099.3 626.6 L2103.0 629.4 L2106.5 632.1 L2109.8 634.6 L2112.9 636.9 L2115.8 639.1 L2118.6 641.2 L2121.2 643.2 L2123.7 645.0 L2126.0 646.8 L2128.2 648.5 L2130.3 650.0 L2132.3 651.5 L2134.1 652.9 L2135.9 654.3 L2137.7 655.6 L2139.3 656.9 L2140.9 658.1 L2142.4 659.2 L2143.8 660.3 L2145.2 661.3 L2146.5 662.3 L2147.7 663.2 L2148.9 664.1 L2149.9 664.9 L2151.0 665.6 L2151.9 666.3 L2152.8 667.0 L2153.6 667.6 L2154.4 668.2 L2155.1 668.8 L2155.8 669.3 L2156.4 669.7 L2157.0 670.2 L2157.5 670.6 L2158.1 671.0 L2158.6 671.4 L2159.0 671.7 L2159.3 671.9 L2159.4 672.1 L2159.5 672.2 L2159.6 672.3 L2159.6 672.5Z M2064.5 623.2 L1704.5 406.5 L1545.6 839.9Z" fill="#000" fill-opacity=".4" fill-rule="evenodd"/>
<path d="M2164.8 675.1 L1571.4 884.6 L1571.3 884.6 L1571.1 884.7 L1570.9 884.7 L1570.6 884.7 L1570.3 884.7 L1569.8 884.7 L1569.3 884.7 L1568.6 884.5 L1567.4 883.9 L1565.9 883.1 L1563.8 881.7 L1561.1 879.9 L1557.7 877.5 L1552.9 874.4 L1547.0 870.4 L1539.5 864.8 L1530.5 856.6 L1518.5 842.2" fill="none" stroke="#7a2a8a" stroke-opacity=".45" stroke-width="1"/>
<rect x="1388" y="213" width="889" height="675" fill="none" stroke="#9a9a9a" stroke-width="2"/>
<text x="1814.0" y="206.0" font-size="20.7" fill="#d4d4d4" textLength="104.0" lengthAdjust="spacingAndGlyphs" text-anchor="middle" >CIE 1931 xy</text>
<rect x="1386.0" y="889" width="2" height="8" fill="#ddd"/>
<text x="1386.0" y="918.0" font-size="20.18" fill="#d4d4d4" text-anchor="middle" >0</text>
<rect x="1379" y="887.0" width="8" height="2" fill="#ddd"/>
<text x="1379.0" y="897.5" font-size="20.18" fill="#d4d4d4" text-anchor="end" >0</text>
<rect x="1492.0" y="889" width="2" height="8" fill="#ddd"/>
<text x="1492.0" y="918.0" font-size="20.18" fill="#d4d4d4" text-anchor="middle" >0,1</text>
<rect x="1379" y="807.0" width="8" height="2" fill="#ddd"/>
<text x="1379.0" y="814.5" font-size="20.18" fill="#d4d4d4" text-anchor="end" >0,1</text>
<rect x="1598.0" y="889" width="2" height="8" fill="#ddd"/>
<text x="1598.0" y="918.0" font-size="20.18" fill="#d4d4d4" text-anchor="middle" >0,2</text>
<rect x="1379" y="727.0" width="8" height="2" fill="#ddd"/>
<text x="1379.0" y="734.5" font-size="20.18" fill="#d4d4d4" text-anchor="end" >0,2</text>
<rect x="1703.0" y="889" width="2" height="8" fill="#ddd"/>
<text x="1703.0" y="918.0" font-size="20.18" fill="#d4d4d4" text-anchor="middle" >0,3</text>
<rect x="1379" y="646.0" width="8" height="2" fill="#ddd"/>
<text x="1379.0" y="653.5" font-size="20.18" fill="#d4d4d4" text-anchor="end" >0,3</text>
<rect x="1809.0" y="889" width="2" height="8" fill="#ddd"/>
<text x="1809.0" y="918.0" font-size="20.18" fill="#d4d4d4" text-anchor="middle" >0,4</text>
<rect x="1379" y="566.0" width="8" height="2" fill="#ddd"/>
<text x="1379.0" y="573.5" font-size="20.18" fill="#d4d4d4" text-anchor="end" >0,4</text>
<rect x="1915.0" y="889" width="2" height="8" fill="#ddd"/>
<text x="1915.0" y="918.0" font-size="20.18" fill="#d4d4d4" text-anchor="middle" >0,5</text>
<rect x="1379" y="486.0" width="8" height="2" fill="#ddd"/>
<text x="1379.0" y="493.5" font-size="20.18" fill="#d4d4d4" text-anchor="end" >0,5</text>
<rect x="2021.0" y="889" width="2" height="8" fill="#ddd"/>
<text x="2021.0" y="918.0" font-size="20.18" fill="#d4d4d4" text-anchor="middle" >0,6</text>
<rect x="1379" y="405.0" width="8" height="2" fill="#ddd"/>
<text x="1379.0" y="412.5" font-size="20.18" fill="#d4d4d4" text-anchor="end" >0,6</text>
<rect x="2127.0" y="889" width="2" height="8" fill="#ddd"/>
<text x="2127.0" y="918.0" font-size="20.18" fill="#d4d4d4" text-anchor="middle" >0,7</text>
<rect x="1379" y="325.0" width="8" height="2" fill="#ddd"/>
<text x="1379.0" y="332.5" font-size="20.18" fill="#d4d4d4" text-anchor="end" >0,7</text>
<rect x="2233.0" y="889" width="2" height="8" fill="#ddd"/>
<text x="2233.0" y="918.0" font-size="20.18" fill="#d4d4d4" text-anchor="middle" >0,8</text>
<rect x="1379" y="245.0" width="8" height="2" fill="#ddd"/>
<text x="1379.0" y="252.5" font-size="20.18" fill="#d4d4d4" text-anchor="end" >0,8</text>
<rect x="1708.6" y="613.6" width="18.600" height="18.600" fill="none" stroke="#000" stroke-width="2.5"/>
<rect x="2055.2" y="612.8" width="18.600" height="18.600" fill="none" stroke="#fff" stroke-width="2"/>
<rect x="1695.2" y="396.1" width="18.600" height="18.600" fill="none" stroke="#fff" stroke-width="2"/>
<rect x="1536.3" y="829.5" width="18.600" height="18.600" fill="none" stroke="#fff" stroke-width="2"/>
<rect x="1615.3" y="613.8" width="18.600" height="18.600" fill="none" stroke="#fff" stroke-width="2"/>
<rect x="1717.3" y="753.9" width="18.600" height="18.600" fill="none" stroke="#fff" stroke-width="2"/>
<rect x="1821.5" y="472.1" width="18.600" height="18.600" fill="none" stroke="#fff" stroke-width="2"/>
<circle cx="2072.4" cy="620.1" r="5.800" fill="#c40000" stroke="#000" stroke-width="1.600"/>
<circle cx="1703.9" cy="401.1" r="5.800" fill="#00bc00" stroke="#000" stroke-width="1.600"/>
<circle cx="1546.0" cy="836.0" r="5.800" fill="#0000bc" stroke="#000" stroke-width="1.600"/>
<circle cx="1622.2" cy="625.0" r="5.800" fill="#00bcc0" stroke="#000" stroke-width="1.600"/>
<circle cx="1718.0" cy="765.7" r="5.800" fill="#b800bc" stroke="#000" stroke-width="1.600"/>
<circle cx="1828.2" cy="477.5" r="5.800" fill="#bcbc00" stroke="#000" stroke-width="1.600"/>
<circle cx="1713.0" cy="624.0" r="5.800" fill="#e8e8e8" stroke="#000" stroke-width="1.600"/>
<circle cx="1712.9" cy="623.6" r="5.800" fill="#fff" stroke="#000" stroke-width="1.600"/>
<rect x="1964" y="218" width="308" height="262" fill="none" stroke="#2d2d2d" stroke-width="0"/>
<path d="M1964 218H2272V480H1964Z M1970 224V474H2267V224Z" fill="#2e2e2e" fill-rule="evenodd"/>
<rect x="1969" y="223" width="299" height="252" fill="none" stroke="#999" stroke-width="2"/>
<rect x="2106.500" y="337.500" width="19.500" height="19.500" fill="none" stroke="#000" stroke-width="2.300"/>
<ellipse cx="2090.500" cy="359" rx="5.600" ry="6.200" fill="#e8e8e8" stroke="#000" stroke-width="1.500"/>
<ellipse cx="2090.500" cy="357" rx="5.600" ry="6.200" fill="#fff" stroke="#000" stroke-width="1.500"/>
<rect x="1927" y="844" width="345" height="37.500" fill="#2e2e2e"/>
<text x="1927.5" y="872.5" font-size="27.43" fill="#f4f4f4" textLength="304.0" lengthAdjust="spacingAndGlyphs" >Gamut Coverage:  99,8%</text>
<rect x="0" y="31" width="1" height="1361" fill="#5a5a5a"/><rect x="2291" y="31" width="1" height="1361" fill="#1c1c1c"/><rect x="2292" y="31" width="1" height="1361" fill="#6a6a6a"/><rect x="0" y="1391" width="2293" height="1" fill="#555"/>
</svg>
</body></html>
